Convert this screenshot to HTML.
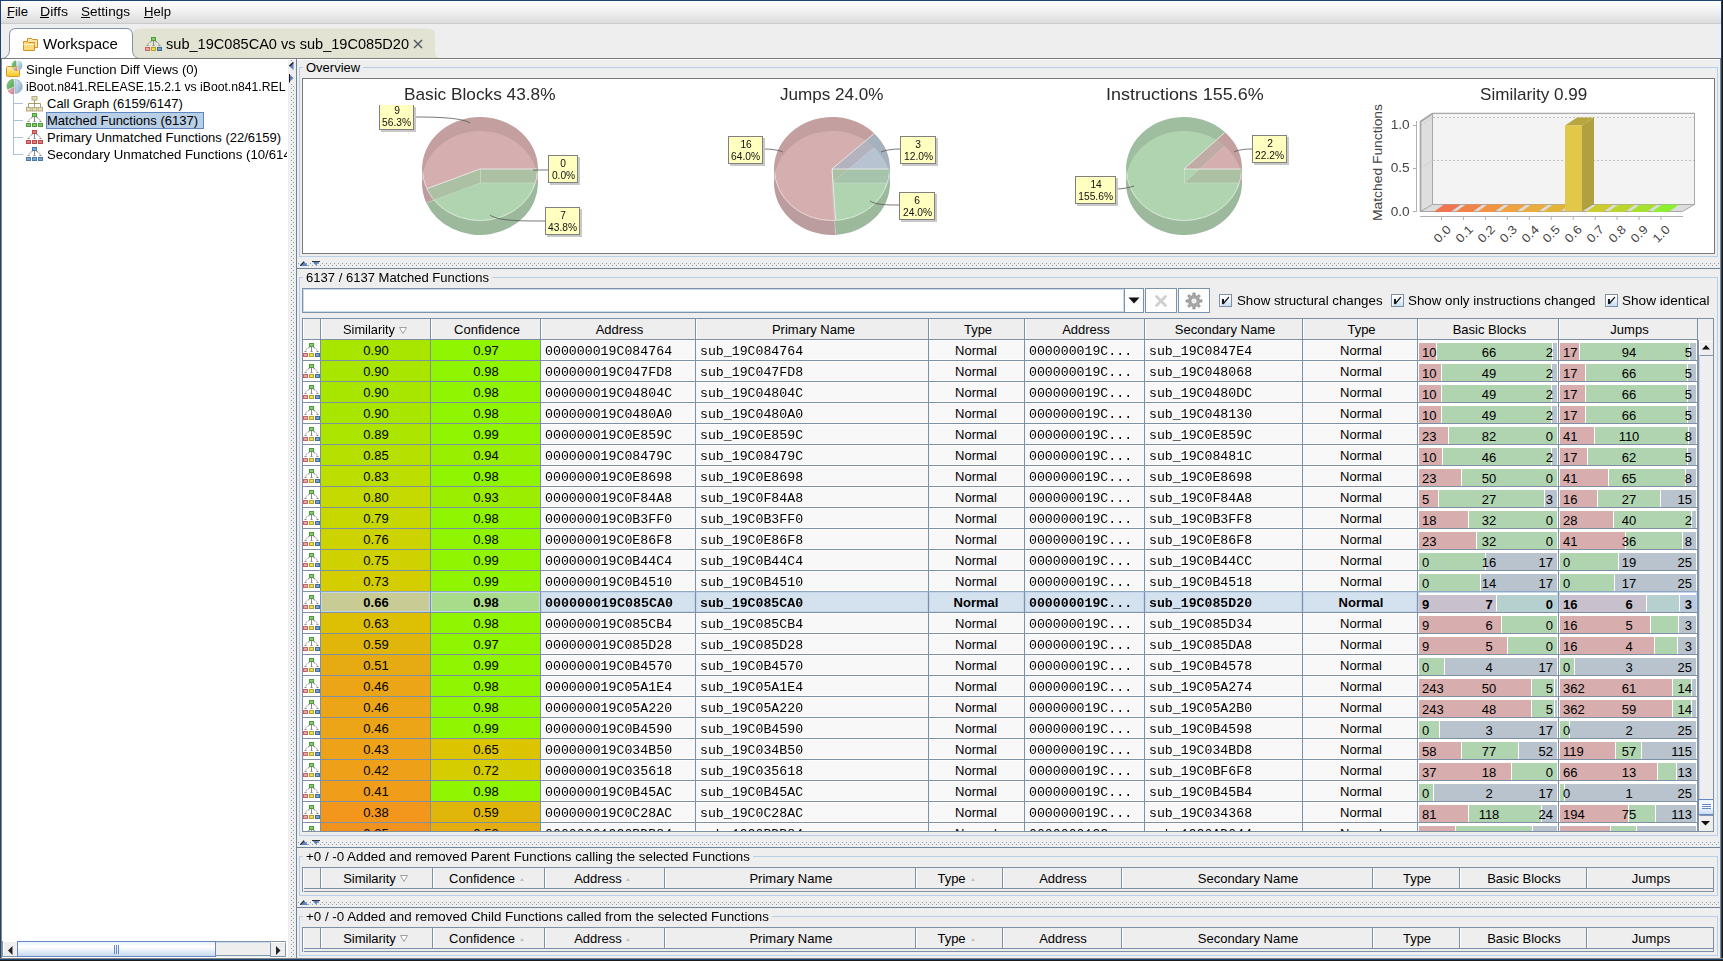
<!DOCTYPE html><html><head><meta charset="utf-8"><style>
html,body{margin:0;padding:0;}body{width:1723px;height:961px;overflow:hidden;position:relative;background:#eeeeee;font-family:"Liberation Sans",sans-serif;}.t{position:absolute;white-space:pre;}.b{position:absolute;box-sizing:border-box;}svg{position:absolute;overflow:visible;}
</style></head><body>
<div class="b" style="left:0px;top:0px;width:1723px;height:23px;background:linear-gradient(#ffffff,#f2f2f2 45%,#dcdcdc);"></div>
<div class="b" style="left:0px;top:23px;width:1723px;height:1px;background:#cacaca;"></div>
<div class="t" style="left:7.00px;top:2.99px;font-size:13px;line-height:17px;font-family:'Liberation Sans',sans-serif;font-weight:normal;color:#000;">File</div>
<div class="b" style="left:7px;top:17px;width:7px;height:1px;background:#000;"></div>
<div class="t" style="left:40.00px;top:2.99px;font-size:13px;line-height:17px;font-family:'Liberation Sans',sans-serif;font-weight:normal;color:#000;transform:scaleX(1.0867);transform-origin:left center;">Diffs</div>
<div class="b" style="left:40px;top:17px;width:9px;height:1px;background:#000;"></div>
<div class="t" style="left:81.00px;top:2.99px;font-size:13px;line-height:17px;font-family:'Liberation Sans',sans-serif;font-weight:normal;color:#000;transform:scaleX(1.0429);transform-origin:left center;">Settings</div>
<div class="b" style="left:81px;top:17px;width:9px;height:1px;background:#000;"></div>
<div class="t" style="left:144.00px;top:2.99px;font-size:13px;line-height:17px;font-family:'Liberation Sans',sans-serif;font-weight:normal;color:#000;transform:scaleX(1.0093);transform-origin:left center;">Help</div>
<div class="b" style="left:144px;top:17px;width:9px;height:1px;background:#000;"></div>
<svg style="left:0;top:0" width="1723" height="60"><path d="M133,58.5 L133,35 Q133,28.5 140,28.5 L428,28.5 Q435,28.5 435,35 L435,50 C435,55 436.5,58.5 440,58.5 Z" fill="#e3e3d3"/><path d="M1.5,58.5 C6,58.5 9.5,55 9.5,50 L9.5,35 Q9.5,28.5 16,28.5 L126,28.5 Q132.5,28.5 132.5,35 L132.5,50 C132.5,55 135,58.5 140,58.5 Z" fill="#ffffff" stroke="#7d93aa" stroke-width="1"/></svg>
<div class="b" style="left:0px;top:58px;width:1723px;height:1px;background:#7b7b7b;"></div>
<div class="b" style="left:0px;top:59px;width:1723px;height:1px;background:#ffffff;"></div>
<svg style="left:22px;top:37px" width="18" height="14" viewBox="0 0 18 14"><path d="M5.5,1.5 h4 l1,1 h5 v8 h-10 z" fill="#fbe7a6" stroke="#d8912c"/><path d="M1.5,4.5 h4 l1,1 h6 v8 h-11 z" fill="#fcd97a" stroke="#d8912c"/><path d="M1.5,7.5 h11" stroke="#fff3c8"/></svg>
<div class="t" style="left:43.00px;top:34.30px;font-size:15px;line-height:19px;font-family:'Liberation Sans',sans-serif;font-weight:normal;color:#000;transform:scaleX(1.0031);transform-origin:left center;">Workspace</div>
<svg style="left:145px;top:37px" width="17" height="15" viewBox="0 0 17 15"><rect x="6.5" y="0.5" width="4" height="3" fill="#86cc70" stroke="#4a9a3a"/><path d="M8.5,4 V9" stroke="#8a8a8a"/><path d="M6.5,4.5 C4,5 3,6.5 2.5,8.5" stroke="#8a8a8a" stroke-dasharray="1.5,1" fill="none"/><path d="M10.5,4.5 C13,5 14,6.5 14.5,8.5" stroke="#777" stroke-dasharray="1.5,1" fill="none"/><path d="M1.5,8.5 h2 M7.5,8.5 h2 M13.5,8.5 h2" stroke="#8a8a8a"/><rect x="0.5" y="10.5" width="4" height="3" fill="#f0a4a4" stroke="#c86464"/><rect x="6.5" y="10.5" width="4" height="3" fill="#f2dc4a" stroke="#c0a020"/><rect x="12.5" y="10.5" width="4" height="3" fill="#78a4cc" stroke="#3f6f9f"/></svg>
<div class="t" style="left:166.00px;top:34.30px;font-size:15px;line-height:19px;font-family:'Liberation Sans',sans-serif;font-weight:normal;color:#000;transform:scaleX(0.9713);transform-origin:left center;">sub_19C085CA0 vs sub_19C085D20</div>
<svg style="left:413px;top:39px" width="10" height="10" viewBox="0 0 10 10"><path d="M1,1 L9,9 M9,1 L1,9" stroke="#555a60" stroke-width="1.5"/></svg>
<div class="b" style="left:2px;top:60px;width:286px;height:898px;background:#ffffff;"></div>
<svg style="left:0;top:0" width="40" height="100"><defs><linearGradient id="fy" x1="0" y1="0" x2="0" y2="1"><stop offset="0" stop-color="#fff2b0"/><stop offset="1" stop-color="#f2c81e"/></linearGradient><linearGradient id="pg" x1="0" y1="0" x2="1" y2="1"><stop offset="0" stop-color="#8fd08f"/><stop offset="1" stop-color="#4f9f55"/></linearGradient><linearGradient id="pb" x1="0" y1="0" x2="1" y2="1"><stop offset="0" stop-color="#d8e8f4"/><stop offset="1" stop-color="#7ea8c8"/></linearGradient><linearGradient id="pr" x1="0" y1="0" x2="1" y2="1"><stop offset="0" stop-color="#f0c0c8"/><stop offset="1" stop-color="#c88088"/></linearGradient></defs><rect x="6.5" y="66.5" width="13" height="10" rx="1" fill="url(#fy)" stroke="#e0922c"/><path d="M7.5,69.5 h5 l1,-1 h5" stroke="#f8e49a" fill="none"/><path d="M16.64,65.33 L16.20,60.35 A5,5 0 0 0 12.54,68.20 Z" fill="url(#pg)"/><path d="M17.40,65.45 L18.69,70.28 A5,5 0 0 0 17.40,60.45 Z" fill="url(#pb)"/><path d="M16.79,66.06 L12.96,69.28 A5,5 0 0 0 17.66,70.99 Z" fill="url(#pr)"/><path d="M13.98,86.20 L13.37,79.23 A7,7 0 0 0 7.64,89.16 Z" fill="url(#pg)" stroke="#5a9a5a" stroke-width="0.5"/><path d="M14.04,87.27 L7.97,90.77 A7,7 0 0 0 13.79,94.27 Z" fill="url(#pr)" stroke="#c07078" stroke-width="0.5"/><path d="M15.10,86.49 L15.34,93.49 A7,7 0 0 0 15.10,79.49 Z" fill="url(#pb)" stroke="#6a94b8" stroke-width="0.5"/></svg>
<div class="b" style="left:13px;top:95px;width:1px;height:60px;background:#a9c1d9;"></div>
<div class="b" style="left:14px;top:103px;width:9px;height:1px;background:#a9c1d9;"></div>
<div class="b" style="left:14px;top:120px;width:9px;height:1px;background:#a9c1d9;"></div>
<div class="b" style="left:14px;top:137px;width:9px;height:1px;background:#a9c1d9;"></div>
<div class="b" style="left:14px;top:154px;width:9px;height:1px;background:#a9c1d9;"></div>
<svg style="left:26px;top:96px" width="17" height="16" viewBox="0 0 17 16"><rect x="6" y="0.5" width="5" height="3.5" fill="#e2dcb8" stroke="#b5ad7e"/><path d="M8.5,4 v7 M2.5,7.5 h12 M2.5,7.5 v3.5 M14.5,7.5 v3.5" stroke="#a59d6c" fill="none"/><rect x="0.5" y="11.5" width="4.5" height="3.5" fill="#e2dcb8" stroke="#b5ad7e"/><rect x="6.2" y="11.5" width="4.5" height="3.5" fill="#e2dcb8" stroke="#b5ad7e"/><rect x="12" y="11.5" width="4.5" height="3.5" fill="#e2dcb8" stroke="#b5ad7e"/></svg>
<svg style="left:26px;top:113px" width="17" height="15" viewBox="0 0 17 15"><rect x="6.5" y="0.5" width="4" height="3" fill="#7fc86a" stroke="#4f9a3f"/><path d="M8.5,4 V9" stroke="#8a8a8a"/><path d="M6.5,4.5 C4,5 3,6.5 2.5,8.5" stroke="#8a8a8a" stroke-dasharray="1.5,1" fill="none"/><path d="M10.5,4.5 C13,5 14,6.5 14.5,8.5" stroke="#777" stroke-dasharray="1.5,1" fill="none"/><path d="M1.5,8.5 h2 M7.5,8.5 h2 M13.5,8.5 h2" stroke="#8a8a8a"/><rect x="0.5" y="10.5" width="4" height="3" fill="#7fc86a" stroke="#4f9a3f"/><rect x="6.5" y="10.5" width="4" height="3" fill="#7fc86a" stroke="#4f9a3f"/><rect x="12.5" y="10.5" width="4" height="3" fill="#7fc86a" stroke="#4f9a3f"/></svg>
<svg style="left:26px;top:130px" width="17" height="15" viewBox="0 0 17 15"><rect x="6.5" y="0.5" width="4" height="3" fill="#e27c7c" stroke="#b84a4a"/><path d="M8.5,4 V9" stroke="#8a8a8a"/><path d="M6.5,4.5 C4,5 3,6.5 2.5,8.5" stroke="#8a8a8a" stroke-dasharray="1.5,1" fill="none"/><path d="M10.5,4.5 C13,5 14,6.5 14.5,8.5" stroke="#777" stroke-dasharray="1.5,1" fill="none"/><path d="M1.5,8.5 h2 M7.5,8.5 h2 M13.5,8.5 h2" stroke="#8a8a8a"/><rect x="0.5" y="10.5" width="4" height="3" fill="#e27c7c" stroke="#b84a4a"/><rect x="6.5" y="10.5" width="4" height="3" fill="#e27c7c" stroke="#b84a4a"/><rect x="12.5" y="10.5" width="4" height="3" fill="#e27c7c" stroke="#b84a4a"/></svg>
<svg style="left:26px;top:147px" width="17" height="15" viewBox="0 0 17 15"><rect x="6.5" y="0.5" width="4" height="3" fill="#7aaad8" stroke="#4a78a8"/><path d="M8.5,4 V9" stroke="#8a8a8a"/><path d="M6.5,4.5 C4,5 3,6.5 2.5,8.5" stroke="#8a8a8a" stroke-dasharray="1.5,1" fill="none"/><path d="M10.5,4.5 C13,5 14,6.5 14.5,8.5" stroke="#777" stroke-dasharray="1.5,1" fill="none"/><path d="M1.5,8.5 h2 M7.5,8.5 h2 M13.5,8.5 h2" stroke="#8a8a8a"/><rect x="0.5" y="10.5" width="4" height="3" fill="#7aaad8" stroke="#4a78a8"/><rect x="6.5" y="10.5" width="4" height="3" fill="#7aaad8" stroke="#4a78a8"/><rect x="12.5" y="10.5" width="4" height="3" fill="#7aaad8" stroke="#4a78a8"/></svg>
<div class="b" style="left:46px;top:112px;width:158px;height:17px;background:#b9cfe6;border:1px solid #5f86c4;"></div>
<div class="t" style="left:26.00px;top:60.99px;font-size:13px;line-height:17px;font-family:'Liberation Sans',sans-serif;font-weight:normal;color:#000;transform:scaleX(1.0113);transform-origin:left center;">Single Function Diff Views (0)</div>
<div class="t" style="left:26.00px;top:77.99px;font-size:13px;line-height:17px;font-family:'Liberation Sans',sans-serif;font-weight:normal;color:#000;transform:scaleX(0.9373);transform-origin:left center;">iBoot.n841.RELEASE.15.2.1 vs iBoot.n841.REL</div>
<div class="t" style="left:47.00px;top:94.99px;font-size:13px;line-height:17px;font-family:'Liberation Sans',sans-serif;font-weight:normal;color:#000;">Call Graph (6159/6147)</div>
<div class="t" style="left:47.00px;top:111.99px;font-size:13px;line-height:17px;font-family:'Liberation Sans',sans-serif;font-weight:normal;color:#000;">Matched Functions (6137)</div>
<div class="t" style="left:47.00px;top:128.99px;font-size:13px;line-height:17px;font-family:'Liberation Sans',sans-serif;font-weight:normal;color:#000;">Primary Unmatched Functions (22/6159)</div>
<div style="position:absolute;left:0;top:0;width:1723px;height:961px;clip-path:inset(0 1436px 0 0);">
<div class="t" style="left:47.00px;top:145.99px;font-size:13px;line-height:17px;font-family:'Liberation Sans',sans-serif;font-weight:normal;color:#000;transform:scaleX(1.0161);transform-origin:left center;">Secondary Unmatched Functions (10/6147)</div>
</div>
<div class="b" style="left:2px;top:941px;width:284px;height:16px;background:#eeeeee;border-top:1px solid #8396ab;"></div>
<div class="b" style="left:2px;top:941px;width:15px;height:16px;background:#eeeeee;border-left:1px solid #8396ab;border-bottom:1px solid #8396ab;box-shadow:inset 1px 1px 0 #ffffff;"></div>
<svg style="left:8px;top:946px" width="5" height="9"><path d="M4.5,0 L0,4.5 L4.5,9 Z" fill="#222"/></svg>
<div class="b" style="left:17px;top:941px;width:199px;height:16px;background:linear-gradient(#eaf2fb,#ffffff 35%,#c5d9ee);border:1px solid #6689c6;"></div>
<div class="b" style="left:114px;top:945px;width:1px;height:9px;background:#6689c6;"></div>
<div class="b" style="left:116px;top:945px;width:1px;height:9px;background:#6689c6;"></div>
<div class="b" style="left:118px;top:945px;width:1px;height:9px;background:#6689c6;"></div>
<div class="b" style="left:216px;top:942px;width:54px;height:14px;background:#eeeeee;border-top:1px solid #c4d8ee;border-bottom:1px solid #8396ab;"></div>
<div class="b" style="left:270px;top:942px;width:16px;height:15px;background:#eeeeee;border-left:1px solid #8396ab;border-right:1px solid #8396ab;border-bottom:1px solid #8396ab;border-top:1px solid #ffffff;"></div>
<svg style="left:276px;top:946px" width="5" height="9"><path d="M0,0 L4.5,4.5 L0,9 Z" fill="#222"/></svg>
<div class="b" style="left:288px;top:60px;width:8px;height:898px;background:#eeeeee;"></div>
<svg style="left:288px;top:60px" width="8" height="898"><defs><pattern id="dv" width="8" height="4" patternUnits="userSpaceOnUse"><rect x="3" y="0" width="1" height="1" fill="#8d9fb3"/><rect x="5" y="2" width="1" height="1" fill="#8d9fb3"/></pattern></defs><rect x="0" y="0" width="8" height="898" fill="url(#dv)"/></svg>
<div class="b" style="left:289px;top:61px;width:6px;height:22px;background:#eeeeee;"></div>
<svg style="left:289px;top:62px" width="6" height="22"><path d="M4.5,0 L0,4 L4.5,8 Z" fill="#5a80c0"/><path d="M4.3,0.5 L0.5,4" stroke="#1a1a1a" stroke-width="1.2"/><path d="M0,12 L4.5,16 L0,20.5 Z" fill="#5a80c0"/><path d="M0.5,12 V20.5" stroke="#1a1a1a" stroke-width="1"/></svg>
<div class="b" style="left:296px;top:59px;width:1px;height:899px;background:#6e8298;"></div>
<div class="b" style="left:299px;top:67px;width:1419px;height:190px;border:1px solid #b8cfe6;"></div>
<div class="b" style="left:303px;top:66px;width:60.1875px;height:3px;background:#eeeeee;"></div>
<div class="t" style="left:306.00px;top:58.99px;font-size:13px;line-height:17px;font-family:'Liberation Sans',sans-serif;font-weight:normal;color:#000;">Overview</div>
<div class="b" style="left:302px;top:78px;width:1413px;height:176px;background:#ffffff;border:1px solid #7a7a7a;"></div>
<div class="t" style="left:403.50px;top:83.61px;font-size:17px;line-height:21px;font-family:'Liberation Sans',sans-serif;font-weight:normal;color:#2a2a2a;transform:scaleX(1.0149);transform-origin:left center;">Basic Blocks 43.8%</div>
<div class="t" style="left:780.00px;top:83.61px;font-size:17px;line-height:21px;font-family:'Liberation Sans',sans-serif;font-weight:normal;color:#2a2a2a;transform:scaleX(1.0052);transform-origin:left center;">Jumps 24.0%</div>
<div class="t" style="left:1105.50px;top:83.61px;font-size:17px;line-height:21px;font-family:'Liberation Sans',sans-serif;font-weight:normal;color:#2a2a2a;transform:scaleX(1.0565);transform-origin:left center;">Instructions 155.6%</div>
<div class="t" style="left:1480.20px;top:83.61px;font-size:17px;line-height:21px;font-family:'Liberation Sans',sans-serif;font-weight:normal;color:#2a2a2a;transform:scaleX(1.0042);transform-origin:left center;">Similarity 0.99</div>
<svg style="left:0;top:0" width="1723" height="300"><defs><clipPath id="ci1"><ellipse cx="480" cy="169" rx="58" ry="52"/></clipPath><clipPath id="cj1"><ellipse cx="480" cy="183" rx="58" ry="52"/></clipPath></defs><path d="M480,169 L538.00,169.00 A58,52 0 1 0 426.41,188.90 Z" fill="#c49f9f"/><path d="M480,169 L426.41,188.90 A58,52 0 0 0 538.00,169.00 Z" fill="#9fbd9f"/><path d="M480,183 L538.00,183.00 A58,52 0 1 0 426.41,202.90 Z" fill="#bc9d9f"/><path d="M480,183 L426.41,202.90 A58,52 0 0 0 538.00,183.00 Z" fill="#9cb99c"/><g clip-path="url(#ci1)"><path d="M480,183 L538.00,183.00 A58,52 0 1 0 426.41,202.90 Z" fill="#d5afaf"/><path d="M480,183 L426.41,202.90 A58,52 0 0 0 538.00,183.00 Z" fill="#b0d4b0"/><g clip-path="url(#cj1)" opacity="0.8"><path d="M480,169 L538.00,169.00 A58,52 0 1 0 426.41,188.90 Z" fill="#d5afaf"/><path d="M480,169 L426.41,188.90 A58,52 0 0 0 538.00,169.00 Z" fill="#b0d4b0"/></g><mask id="mk1_0"><rect x="0" y="0" width="1723" height="300" fill="#000"/><path d="M480,169 L538.00,169.00 A58,52 0 1 0 426.41,188.90 Z" fill="#fff"/><path d="M480,183 L538.00,183.00 A58,52 0 1 0 426.41,202.90 Z" fill="#000"/></mask><g clip-path="url(#cj1)"><rect x="422" y="117" width="116" height="118" fill="#000" opacity="0.06" mask="url(#mk1_0)"/></g><mask id="mk1_1"><rect x="0" y="0" width="1723" height="300" fill="#000"/><path d="M480,169 L426.41,188.90 A58,52 0 0 0 538.00,169.00 Z" fill="#fff"/><path d="M480,183 L426.41,202.90 A58,52 0 0 0 538.00,183.00 Z" fill="#000"/></mask><g clip-path="url(#cj1)"><rect x="422" y="117" width="116" height="118" fill="#000" opacity="0.06" mask="url(#mk1_1)"/></g></g><g clip-path="url(#cj1)"><path d="M422.5,169 A57.5,51.5 0 0 0 537.5,169" fill="none" stroke="#f4f4f4" stroke-opacity="0.55"/></g><path d="M480,169 L537.00,169.00" stroke="#f4f4f4" stroke-opacity="0.75" stroke-width="1"/><path d="M480,183 L537.00,183.00" stroke="#f4f4f4" stroke-opacity="0.25" stroke-width="1"/><path d="M480,169 L427.34,188.52" stroke="#f4f4f4" stroke-opacity="0.75" stroke-width="1"/><path d="M480,183 L427.34,202.52" stroke="#f4f4f4" stroke-opacity="0.25" stroke-width="1"/><path d="M480.5,169 V183" stroke="#f4f4f4" stroke-opacity="0.35"/></svg>
<svg style="left:0;top:0" width="1723" height="300"><path d="M414,117 C440,117 462,118 470,123" fill="none" stroke="#555" stroke-width="0.8"/></svg>
<svg style="left:0;top:0" width="1723" height="300"><path d="M533,170 L548,170" fill="none" stroke="#555" stroke-width="0.8"/></svg>
<svg style="left:0;top:0" width="1723" height="300"><path d="M490,215 C498,221 520,221 545,221" fill="none" stroke="#555" stroke-width="0.8"/></svg>
<div class="b" style="left:381px;top:107px;width:35px;height:25px;background:#c8c8c8;"></div>
<div class="b" style="left:379px;top:105px;width:35px;height:25px;background:#ffffc0;border:1px solid #808080;border-top:none;"></div>
<div class="t" style="left:393.94px;top:103.39px;font-size:11px;line-height:15px;font-family:'Liberation Sans',sans-serif;font-weight:normal;color:#111;transform:scaleX(0.9300);transform-origin:center center;">9</div>
<div class="t" style="left:381.39px;top:115.29px;font-size:11px;line-height:15px;font-family:'Liberation Sans',sans-serif;font-weight:normal;color:#111;transform:scaleX(0.9300);transform-origin:center center;">56.3%</div>
<div class="b" style="left:550px;top:157px;width:30px;height:28px;background:#c8c8c8;"></div>
<div class="b" style="left:548px;top:155px;width:30px;height:28px;background:#ffffc0;border:1px solid #808080;border-top:1px solid #808080;"></div>
<div class="t" style="left:560.44px;top:156.39px;font-size:11px;line-height:15px;font-family:'Liberation Sans',sans-serif;font-weight:normal;color:#111;transform:scaleX(0.9300);transform-origin:center center;">0</div>
<div class="t" style="left:550.95px;top:168.29px;font-size:11px;line-height:15px;font-family:'Liberation Sans',sans-serif;font-weight:normal;color:#111;transform:scaleX(0.9300);transform-origin:center center;">0.0%</div>
<div class="b" style="left:547px;top:209px;width:35px;height:28px;background:#c8c8c8;"></div>
<div class="b" style="left:545px;top:207px;width:35px;height:28px;background:#ffffc0;border:1px solid #808080;border-top:1px solid #808080;"></div>
<div class="t" style="left:559.94px;top:208.39px;font-size:11px;line-height:15px;font-family:'Liberation Sans',sans-serif;font-weight:normal;color:#111;transform:scaleX(0.9300);transform-origin:center center;">7</div>
<div class="t" style="left:547.39px;top:220.29px;font-size:11px;line-height:15px;font-family:'Liberation Sans',sans-serif;font-weight:normal;color:#111;transform:scaleX(0.9300);transform-origin:center center;">43.8%</div>
<svg style="left:0;top:0" width="1723" height="300"><defs><clipPath id="ci2"><ellipse cx="832" cy="169" rx="58" ry="52"/></clipPath><clipPath id="cj2"><ellipse cx="832" cy="183" rx="58" ry="52"/></clipPath></defs><path d="M832,169 L890.00,169.00 A58,52 0 0 0 874.28,133.40 Z" fill="#a5b1bd"/><path d="M832,169 L874.28,133.40 A58,52 0 1 0 835.64,220.90 Z" fill="#c49f9f"/><path d="M832,169 L835.64,220.90 A58,52 0 0 0 890.00,169.00 Z" fill="#9fbd9f"/><path d="M832,183 L890.00,183.00 A58,52 0 0 0 874.28,147.40 Z" fill="#a5b1bd"/><path d="M832,183 L874.28,147.40 A58,52 0 1 0 835.64,234.90 Z" fill="#bc9d9f"/><path d="M832,183 L835.64,234.90 A58,52 0 0 0 890.00,183.00 Z" fill="#9cb99c"/><g clip-path="url(#ci2)"><path d="M832,183 L890.00,183.00 A58,52 0 0 0 874.28,147.40 Z" fill="#b8c4d1"/><path d="M832,183 L874.28,147.40 A58,52 0 1 0 835.64,234.90 Z" fill="#d5afaf"/><path d="M832,183 L835.64,234.90 A58,52 0 0 0 890.00,183.00 Z" fill="#b0d4b0"/><g clip-path="url(#cj2)" opacity="0.8"><path d="M832,169 L890.00,169.00 A58,52 0 0 0 874.28,133.40 Z" fill="#b8c4d1"/><path d="M832,169 L874.28,133.40 A58,52 0 1 0 835.64,220.90 Z" fill="#d5afaf"/><path d="M832,169 L835.64,220.90 A58,52 0 0 0 890.00,169.00 Z" fill="#b0d4b0"/></g><mask id="mk2_0"><rect x="0" y="0" width="1723" height="300" fill="#000"/><path d="M832,169 L890.00,169.00 A58,52 0 0 0 874.28,133.40 Z" fill="#fff"/><path d="M832,183 L890.00,183.00 A58,52 0 0 0 874.28,147.40 Z" fill="#000"/></mask><g clip-path="url(#cj2)"><rect x="774" y="117" width="116" height="118" fill="#000" opacity="0.06" mask="url(#mk2_0)"/></g><mask id="mk2_1"><rect x="0" y="0" width="1723" height="300" fill="#000"/><path d="M832,169 L874.28,133.40 A58,52 0 1 0 835.64,220.90 Z" fill="#fff"/><path d="M832,183 L874.28,147.40 A58,52 0 1 0 835.64,234.90 Z" fill="#000"/></mask><g clip-path="url(#cj2)"><rect x="774" y="117" width="116" height="118" fill="#000" opacity="0.06" mask="url(#mk2_1)"/></g><mask id="mk2_2"><rect x="0" y="0" width="1723" height="300" fill="#000"/><path d="M832,169 L835.64,220.90 A58,52 0 0 0 890.00,169.00 Z" fill="#fff"/><path d="M832,183 L835.64,234.90 A58,52 0 0 0 890.00,183.00 Z" fill="#000"/></mask><g clip-path="url(#cj2)"><rect x="774" y="117" width="116" height="118" fill="#000" opacity="0.06" mask="url(#mk2_2)"/></g></g><g clip-path="url(#cj2)"><path d="M774.5,169 A57.5,51.5 0 0 0 889.5,169" fill="none" stroke="#f4f4f4" stroke-opacity="0.55"/></g><path d="M832,169 L889.00,169.00" stroke="#f4f4f4" stroke-opacity="0.75" stroke-width="1"/><path d="M832,183 L889.00,183.00" stroke="#f4f4f4" stroke-opacity="0.25" stroke-width="1"/><path d="M832,169 L873.55,134.09" stroke="#f4f4f4" stroke-opacity="0.75" stroke-width="1"/><path d="M832,183 L873.55,148.09" stroke="#f4f4f4" stroke-opacity="0.25" stroke-width="1"/><path d="M832,169 L835.58,219.90" stroke="#f4f4f4" stroke-opacity="0.75" stroke-width="1"/><path d="M832,183 L835.58,233.90" stroke="#f4f4f4" stroke-opacity="0.25" stroke-width="1"/><path d="M832.5,169 V183" stroke="#f4f4f4" stroke-opacity="0.35"/></svg>
<svg style="left:0;top:0" width="1723" height="300"><path d="M763,149 C772,149 778,150 783,152" fill="none" stroke="#555" stroke-width="0.8"/></svg>
<svg style="left:0;top:0" width="1723" height="300"><path d="M900,149 C892,149 886,150 881,152" fill="none" stroke="#555" stroke-width="0.8"/></svg>
<svg style="left:0;top:0" width="1723" height="300"><path d="M899,205 C888,205 876,205 870,201" fill="none" stroke="#555" stroke-width="0.8"/></svg>
<div class="b" style="left:730px;top:138px;width:35px;height:28px;background:#c8c8c8;"></div>
<div class="b" style="left:728px;top:136px;width:35px;height:28px;background:#ffffc0;border:1px solid #808080;border-top:1px solid #808080;"></div>
<div class="t" style="left:739.88px;top:137.39px;font-size:11px;line-height:15px;font-family:'Liberation Sans',sans-serif;font-weight:normal;color:#111;transform:scaleX(0.9300);transform-origin:center center;">16</div>
<div class="t" style="left:730.39px;top:149.29px;font-size:11px;line-height:15px;font-family:'Liberation Sans',sans-serif;font-weight:normal;color:#111;transform:scaleX(0.9300);transform-origin:center center;">64.0%</div>
<div class="b" style="left:902px;top:138px;width:36px;height:28px;background:#c8c8c8;"></div>
<div class="b" style="left:900px;top:136px;width:36px;height:28px;background:#ffffc0;border:1px solid #808080;border-top:1px solid #808080;"></div>
<div class="t" style="left:915.44px;top:137.39px;font-size:11px;line-height:15px;font-family:'Liberation Sans',sans-serif;font-weight:normal;color:#111;transform:scaleX(0.9300);transform-origin:center center;">3</div>
<div class="t" style="left:902.89px;top:149.29px;font-size:11px;line-height:15px;font-family:'Liberation Sans',sans-serif;font-weight:normal;color:#111;transform:scaleX(0.9300);transform-origin:center center;">12.0%</div>
<div class="b" style="left:901px;top:194px;width:36px;height:28px;background:#c8c8c8;"></div>
<div class="b" style="left:899px;top:192px;width:36px;height:28px;background:#ffffc0;border:1px solid #808080;border-top:1px solid #808080;"></div>
<div class="t" style="left:914.44px;top:193.39px;font-size:11px;line-height:15px;font-family:'Liberation Sans',sans-serif;font-weight:normal;color:#111;transform:scaleX(0.9300);transform-origin:center center;">6</div>
<div class="t" style="left:901.89px;top:205.29px;font-size:11px;line-height:15px;font-family:'Liberation Sans',sans-serif;font-weight:normal;color:#111;transform:scaleX(0.9300);transform-origin:center center;">24.0%</div>
<svg style="left:0;top:0" width="1723" height="300"><defs><clipPath id="ci3"><ellipse cx="1184" cy="169" rx="58" ry="52"/></clipPath><clipPath id="cj3"><ellipse cx="1184" cy="183" rx="58" ry="52"/></clipPath></defs><path d="M1184,169 L1242.00,169.00 A58,52 0 0 0 1225.01,132.23 Z" fill="#c49f9f"/><path d="M1184,169 L1225.01,132.23 A58,52 0 1 0 1242.00,169.00 Z" fill="#9fbd9f"/><path d="M1184,183 L1242.00,183.00 A58,52 0 0 0 1225.01,146.23 Z" fill="#bc9d9f"/><path d="M1184,183 L1225.01,146.23 A58,52 0 1 0 1242.00,183.00 Z" fill="#9cb99c"/><g clip-path="url(#ci3)"><path d="M1184,183 L1242.00,183.00 A58,52 0 0 0 1225.01,146.23 Z" fill="#d5afaf"/><path d="M1184,183 L1225.01,146.23 A58,52 0 1 0 1242.00,183.00 Z" fill="#b0d4b0"/><g clip-path="url(#cj3)" opacity="0.8"><path d="M1184,169 L1242.00,169.00 A58,52 0 0 0 1225.01,132.23 Z" fill="#d5afaf"/><path d="M1184,169 L1225.01,132.23 A58,52 0 1 0 1242.00,169.00 Z" fill="#b0d4b0"/></g><mask id="mk3_0"><rect x="0" y="0" width="1723" height="300" fill="#000"/><path d="M1184,169 L1242.00,169.00 A58,52 0 0 0 1225.01,132.23 Z" fill="#fff"/><path d="M1184,183 L1242.00,183.00 A58,52 0 0 0 1225.01,146.23 Z" fill="#000"/></mask><g clip-path="url(#cj3)"><rect x="1126" y="117" width="116" height="118" fill="#000" opacity="0.06" mask="url(#mk3_0)"/></g><mask id="mk3_1"><rect x="0" y="0" width="1723" height="300" fill="#000"/><path d="M1184,169 L1225.01,132.23 A58,52 0 1 0 1242.00,169.00 Z" fill="#fff"/><path d="M1184,183 L1225.01,146.23 A58,52 0 1 0 1242.00,183.00 Z" fill="#000"/></mask><g clip-path="url(#cj3)"><rect x="1126" y="117" width="116" height="118" fill="#000" opacity="0.06" mask="url(#mk3_1)"/></g></g><g clip-path="url(#cj3)"><path d="M1126.5,169 A57.5,51.5 0 0 0 1241.5,169" fill="none" stroke="#f4f4f4" stroke-opacity="0.55"/></g><path d="M1184,169 L1241.00,169.00" stroke="#f4f4f4" stroke-opacity="0.75" stroke-width="1"/><path d="M1184,183 L1241.00,183.00" stroke="#f4f4f4" stroke-opacity="0.25" stroke-width="1"/><path d="M1184,169 L1224.31,132.94" stroke="#f4f4f4" stroke-opacity="0.75" stroke-width="1"/><path d="M1184,183 L1224.31,146.94" stroke="#f4f4f4" stroke-opacity="0.25" stroke-width="1"/><path d="M1184.5,169 V183" stroke="#f4f4f4" stroke-opacity="0.35"/></svg>
<svg style="left:0;top:0" width="1723" height="300"><path d="M1252,149 C1244,149 1238,150 1234,152" fill="none" stroke="#555" stroke-width="0.8"/></svg>
<svg style="left:0;top:0" width="1723" height="300"><path d="M1115,189 C1122,189 1128,188 1134,186" fill="none" stroke="#555" stroke-width="0.8"/></svg>
<div class="b" style="left:1254px;top:137px;width:35px;height:28px;background:#c8c8c8;"></div>
<div class="b" style="left:1252px;top:135px;width:35px;height:28px;background:#ffffc0;border:1px solid #808080;border-top:1px solid #808080;"></div>
<div class="t" style="left:1266.94px;top:136.39px;font-size:11px;line-height:15px;font-family:'Liberation Sans',sans-serif;font-weight:normal;color:#111;transform:scaleX(0.9300);transform-origin:center center;">2</div>
<div class="t" style="left:1254.39px;top:148.29px;font-size:11px;line-height:15px;font-family:'Liberation Sans',sans-serif;font-weight:normal;color:#111;transform:scaleX(0.9300);transform-origin:center center;">22.2%</div>
<div class="b" style="left:1077px;top:178px;width:41px;height:28px;background:#c8c8c8;"></div>
<div class="b" style="left:1075px;top:176px;width:41px;height:28px;background:#ffffc0;border:1px solid #808080;border-top:1px solid #808080;"></div>
<div class="t" style="left:1089.88px;top:177.39px;font-size:11px;line-height:15px;font-family:'Liberation Sans',sans-serif;font-weight:normal;color:#111;transform:scaleX(0.9300);transform-origin:center center;">14</div>
<div class="t" style="left:1077.33px;top:189.29px;font-size:11px;line-height:15px;font-family:'Liberation Sans',sans-serif;font-weight:normal;color:#111;transform:scaleX(0.9300);transform-origin:center center;">155.6%</div>
<svg style="left:0;top:0" width="1723" height="300"><path d="M1420.5,121.5 L1432.5,113.5 L1432.5,204.5 L1420.5,211.5 Z" fill="#dedede" stroke="#c8c8c8"/><path d="M1420.5,212 V121.5 L1432.5,113.5 H1695" fill="none" stroke="#a4a4a4" stroke-width="1.6"/><rect x="1432.5" y="113.5" width="262" height="91" fill="#f3f3f3" stroke="#a8a8a8"/><path d="M1420.5,211.5 L1432.5,204.5 L1694.5,204.5 L1682.5,211.5 Z" fill="#dcdcdc" stroke="#a8a8a8"/><path d="M1433,117.5 H1694 M1433,160.5 H1694" stroke="#c0c0c0" stroke-dasharray="2,2"/><path d="M1421,125 L1433,117.5 M1421,168 L1433,160.5" stroke="#c8c8c8" stroke-dasharray="2,2"/><path d="M1433.5,212 L1450.5,212 L1461.0,204.5 L1444.0,204.5 Z" fill="#f07450"/><path d="M1455.3,212 L1472.3,212 L1482.8,204.5 L1465.8,204.5 Z" fill="#f08448"/><path d="M1477.1,212 L1494.1,212 L1504.6,204.5 L1487.6,204.5 Z" fill="#f09444"/><path d="M1498.9,212 L1515.9,212 L1526.4,204.5 L1509.4,204.5 Z" fill="#f0a240"/><path d="M1520.7,212 L1537.7,212 L1548.2,204.5 L1531.2,204.5 Z" fill="#eaac3c"/><path d="M1542.5,212 L1559.5,212 L1570.0,204.5 L1553.0,204.5 Z" fill="#e2b43a"/><path d="M1586.1,212 L1603.1,212 L1613.6,204.5 L1596.6,204.5 Z" fill="#cccc30"/><path d="M1607.9,212 L1624.9,212 L1635.4,204.5 L1618.4,204.5 Z" fill="#bcd430"/><path d="M1629.7,212 L1646.7,212 L1657.2,204.5 L1640.2,204.5 Z" fill="#a8e030"/><path d="M1651.5,212 L1668.5,212 L1679.0,204.5 L1662.0,204.5 Z" fill="#8cf030"/><path d="M1582,125.5 L1594,117.5 L1594,204 L1582,211.5 Z" fill="#b0a040"/><path d="M1565,125.5 L1577,117.5 L1594,117.5 L1582,125.5 Z" fill="#b8a640"/><rect x="1565" y="125.5" width="17" height="86" fill="#e2c848"/><path d="M1416.5,121 V212 M1413,125.5 H1416.5 M1413,168.5 H1416.5 M1413,211.5 H1416.5" stroke="#b0b0b0"/><path d="M1420,216.5 H1683" stroke="#b0b0b0"/><path d="M1441.5,216.5 V220" stroke="#b0b0b0"/><path d="M1463.5,216.5 V220" stroke="#b0b0b0"/><path d="M1485.4,216.5 V220" stroke="#b0b0b0"/><path d="M1507.3,216.5 V220" stroke="#b0b0b0"/><path d="M1529.3,216.5 V220" stroke="#b0b0b0"/><path d="M1551.2,216.5 V220" stroke="#b0b0b0"/><path d="M1573.2,216.5 V220" stroke="#b0b0b0"/><path d="M1595.2,216.5 V220" stroke="#b0b0b0"/><path d="M1617.1,216.5 V220" stroke="#b0b0b0"/><path d="M1639.0,216.5 V220" stroke="#b0b0b0"/><path d="M1661.0,216.5 V220" stroke="#b0b0b0"/></svg>
<div class="t" style="left:1392.83px;top:116.84px;font-size:12px;line-height:16px;font-family:'Liberation Sans',sans-serif;font-weight:normal;color:#444;transform:scaleX(1.1396);transform-origin:right center;">1.0</div>
<div class="t" style="left:1392.83px;top:159.84px;font-size:12px;line-height:16px;font-family:'Liberation Sans',sans-serif;font-weight:normal;color:#444;transform:scaleX(1.1396);transform-origin:right center;">0.5</div>
<div class="t" style="left:1392.83px;top:203.84px;font-size:12px;line-height:16px;font-family:'Liberation Sans',sans-serif;font-weight:normal;color:#444;transform:scaleX(1.1396);transform-origin:right center;">0.0</div>
<div class="t" style="left:1433.7px;top:226.0px;width:16.7px;height:16px;font-size:12px;line-height:16px;color:#444;transform:rotate(-45deg) scaleX(1.12);transform-origin:center center;">0.0</div>
<div class="t" style="left:1455.6px;top:226.0px;width:16.7px;height:16px;font-size:12px;line-height:16px;color:#444;transform:rotate(-45deg) scaleX(1.12);transform-origin:center center;">0.1</div>
<div class="t" style="left:1477.6px;top:226.0px;width:16.7px;height:16px;font-size:12px;line-height:16px;color:#444;transform:rotate(-45deg) scaleX(1.12);transform-origin:center center;">0.2</div>
<div class="t" style="left:1499.5px;top:226.0px;width:16.7px;height:16px;font-size:12px;line-height:16px;color:#444;transform:rotate(-45deg) scaleX(1.12);transform-origin:center center;">0.3</div>
<div class="t" style="left:1521.5px;top:226.0px;width:16.7px;height:16px;font-size:12px;line-height:16px;color:#444;transform:rotate(-45deg) scaleX(1.12);transform-origin:center center;">0.4</div>
<div class="t" style="left:1543.4px;top:226.0px;width:16.7px;height:16px;font-size:12px;line-height:16px;color:#444;transform:rotate(-45deg) scaleX(1.12);transform-origin:center center;">0.5</div>
<div class="t" style="left:1565.4px;top:226.0px;width:16.7px;height:16px;font-size:12px;line-height:16px;color:#444;transform:rotate(-45deg) scaleX(1.12);transform-origin:center center;">0.6</div>
<div class="t" style="left:1587.3px;top:226.0px;width:16.7px;height:16px;font-size:12px;line-height:16px;color:#444;transform:rotate(-45deg) scaleX(1.12);transform-origin:center center;">0.7</div>
<div class="t" style="left:1609.3px;top:226.0px;width:16.7px;height:16px;font-size:12px;line-height:16px;color:#444;transform:rotate(-45deg) scaleX(1.12);transform-origin:center center;">0.8</div>
<div class="t" style="left:1631.2px;top:226.0px;width:16.7px;height:16px;font-size:12px;line-height:16px;color:#444;transform:rotate(-45deg) scaleX(1.12);transform-origin:center center;">0.9</div>
<div class="t" style="left:1653.2px;top:226.0px;width:16.7px;height:16px;font-size:12px;line-height:16px;color:#444;transform:rotate(-45deg) scaleX(1.12);transform-origin:center center;">1.0</div>
<div class="t" style="left:1317px;top:154px;width:120px;height:17px;font-size:13px;line-height:17px;color:#444;text-align:center;transform:rotate(-90deg) scaleX(1.065);transform-origin:60px 8.5px;">Matched Functions</div>
<svg style="left:297px;top:261px" width="1423" height="8"><defs><pattern id="dh261" width="4" height="8" patternUnits="userSpaceOnUse"><rect x="1" y="2" width="1" height="1" fill="#8d9fb3"/><rect x="3" y="4" width="1" height="1" fill="#8d9fb3"/></pattern></defs><rect x="0" y="0" width="1423" height="7" fill="url(#dh261)"/></svg>
<svg style="left:300px;top:261px" width="24" height="7"><path d="M0,5 L4,0.5 L8,5 Z" fill="#5a80c0"/><path d="M0.3,4.7 L4,0.7" stroke="#222" stroke-width="1.1"/><path d="M12,0 L20,0 L16,4.5 Z" fill="#5a80c0"/><path d="M12,0.5 L20,0.5" stroke="#333" stroke-width="1"/></svg>
<div class="b" style="left:297px;top:268px;width:1423px;height:1px;background:#6e8298;"></div>
<div class="b" style="left:299px;top:277px;width:1419px;height:559px;border:1px solid #b8cfe6;"></div>
<div class="b" style="left:302.5px;top:276px;width:189px;height:3px;background:#eeeeee;"></div>
<div class="t" style="left:305.50px;top:268.99px;font-size:13px;line-height:17px;font-family:'Liberation Sans',sans-serif;font-weight:normal;color:#000;transform:scaleX(1.0045);transform-origin:left center;">6137 / 6137 Matched Functions</div>
<div class="b" style="left:302px;top:288px;width:823px;height:25px;background:#ffffff;border:1px solid #7f93a8;box-shadow:inset 0 0 0 1px #c9daec;"></div>
<div class="b" style="left:1124px;top:288px;width:20px;height:25px;background:#fdfdfd;border:1px solid #7f93a8;"></div>
<svg style="left:1128px;top:297px" width="12" height="7"><path d="M0.5,0.5 L11.5,0.5 L6,6.5 Z" fill="#111"/></svg>
<div class="b" style="left:1145px;top:288px;width:32px;height:25px;background:#fdfdfd;border:1px solid #7f93a8;"></div>
<svg style="left:1154px;top:294px" width="14" height="14"><path d="M2.5,2.5 L11.5,11.5 M11.5,2.5 L2.5,11.5" stroke="#cfcfcf" stroke-width="2.8" stroke-linecap="round"/></svg>
<div class="b" style="left:1178px;top:288px;width:32px;height:25px;background:#fdfdfd;border:1px solid #7f93a8;"></div>
<svg style="left:1185px;top:292px" width="18" height="18" viewBox="-9 -9 18 18"><path d="M5.50,-1.07 L7.92,-1.11 L7.92,1.11 L5.50,1.07 L4.64,3.13 L6.39,4.81 L4.81,6.39 L3.13,4.64 L1.07,5.50 L1.11,7.92 L-1.11,7.92 L-1.07,5.50 L-3.13,4.64 L-4.81,6.39 L-6.39,4.81 L-4.64,3.13 L-5.50,1.07 L-7.92,1.11 L-7.92,-1.11 L-5.50,-1.07 L-4.64,-3.13 L-6.39,-4.81 L-4.81,-6.39 L-3.13,-4.64 L-1.07,-5.50 L-1.11,-7.92 L1.11,-7.92 L1.07,-5.50 L3.13,-4.64 L4.81,-6.39 L6.39,-4.81 L4.64,-3.13 Z" fill="#a8a8a8" stroke="#8a8a8a" stroke-width="0.8"/><circle cx="0" cy="0" r="3.2" fill="#eeeeee" stroke="#8a8a8a" stroke-width="0.8"/></svg>
<div class="b" style="left:1219px;top:294px;width:13px;height:13px;background:linear-gradient(#ffffff,#f4f8fc 35%,#c9dcf0);border:1px solid #7b90a6;box-shadow:inset 1px 1px 0 #ffffff;"></div>
<svg style="left:1219px;top:294px" width="13" height="13"><rect x="3" y="5" width="2" height="5" fill="#1a1a1a"/><path d="M4.5,9.5 L9.6,3.4" stroke="#1a1a1a" stroke-width="1.3" stroke-linecap="round"/></svg>
<div class="t" style="left:1236.50px;top:291.99px;font-size:13px;line-height:17px;font-family:'Liberation Sans',sans-serif;font-weight:normal;color:#000;transform:scaleX(1.0225);transform-origin:left center;">Show structural changes</div>
<div class="b" style="left:1391px;top:294px;width:13px;height:13px;background:linear-gradient(#ffffff,#f4f8fc 35%,#c9dcf0);border:1px solid #7b90a6;box-shadow:inset 1px 1px 0 #ffffff;"></div>
<svg style="left:1391px;top:294px" width="13" height="13"><rect x="3" y="5" width="2" height="5" fill="#1a1a1a"/><path d="M4.5,9.5 L9.6,3.4" stroke="#1a1a1a" stroke-width="1.3" stroke-linecap="round"/></svg>
<div class="t" style="left:1408.40px;top:291.99px;font-size:13px;line-height:17px;font-family:'Liberation Sans',sans-serif;font-weight:normal;color:#000;transform:scaleX(1.0257);transform-origin:left center;">Show only instructions changed</div>
<div class="b" style="left:1605px;top:294px;width:13px;height:13px;background:linear-gradient(#ffffff,#f4f8fc 35%,#c9dcf0);border:1px solid #7b90a6;box-shadow:inset 1px 1px 0 #ffffff;"></div>
<svg style="left:1605px;top:294px" width="13" height="13"><rect x="3" y="5" width="2" height="5" fill="#1a1a1a"/><path d="M4.5,9.5 L9.6,3.4" stroke="#1a1a1a" stroke-width="1.3" stroke-linecap="round"/></svg>
<div class="t" style="left:1622.40px;top:291.99px;font-size:13px;line-height:17px;font-family:'Liberation Sans',sans-serif;font-weight:normal;color:#000;transform:scaleX(1.0446);transform-origin:left center;">Show identical</div>
<div class="b" style="left:302px;top:318px;width:1412px;height:514px;background:#ffffff;"></div>
<div class="b" style="left:302px;top:319px;width:1397px;height:21px;background:#eeeeee;"></div>
<div class="b" style="left:303px;top:319px;width:1px;height:20px;background:#ffffff;"></div>
<div class="b" style="left:320px;top:319px;width:1px;height:21px;background:#7d90a5;"></div>
<div class="b" style="left:321px;top:319px;width:1px;height:20px;background:#ffffff;"></div>
<div class="b" style="left:430px;top:319px;width:1px;height:21px;background:#7d90a5;"></div>
<div class="t" style="left:342.70px;top:320.99px;font-size:13px;line-height:17px;font-family:'Liberation Sans',sans-serif;font-weight:normal;color:#000;transform:scaleX(0.9861);transform-origin:left center;">Similarity</div>
<div class="b" style="left:431px;top:319px;width:1px;height:20px;background:#ffffff;"></div>
<div class="b" style="left:540px;top:319px;width:1px;height:21px;background:#7d90a5;"></div>
<div class="t" style="left:454.10px;top:320.99px;font-size:13px;line-height:17px;font-family:'Liberation Sans',sans-serif;font-weight:normal;color:#000;">Confidence</div>
<div class="b" style="left:541px;top:319px;width:1px;height:20px;background:#ffffff;"></div>
<div class="b" style="left:695px;top:319px;width:1px;height:21px;background:#7d90a5;"></div>
<div class="t" style="left:595.65px;top:320.99px;font-size:13px;line-height:17px;font-family:'Liberation Sans',sans-serif;font-weight:normal;color:#000;">Address</div>
<div class="b" style="left:696px;top:319px;width:1px;height:20px;background:#ffffff;"></div>
<div class="b" style="left:928px;top:319px;width:1px;height:21px;background:#7d90a5;"></div>
<div class="t" style="left:771.96px;top:320.99px;font-size:13px;line-height:17px;font-family:'Liberation Sans',sans-serif;font-weight:normal;color:#000;">Primary Name</div>
<div class="b" style="left:929px;top:319px;width:1px;height:20px;background:#ffffff;"></div>
<div class="b" style="left:1024px;top:319px;width:1px;height:21px;background:#7d90a5;"></div>
<div class="t" style="left:963.91px;top:320.99px;font-size:13px;line-height:17px;font-family:'Liberation Sans',sans-serif;font-weight:normal;color:#000;">Type</div>
<div class="b" style="left:1025px;top:319px;width:1px;height:20px;background:#ffffff;"></div>
<div class="b" style="left:1144px;top:319px;width:1px;height:21px;background:#7d90a5;"></div>
<div class="t" style="left:1062.15px;top:320.99px;font-size:13px;line-height:17px;font-family:'Liberation Sans',sans-serif;font-weight:normal;color:#000;">Address</div>
<div class="b" style="left:1145px;top:319px;width:1px;height:20px;background:#ffffff;"></div>
<div class="b" style="left:1302px;top:319px;width:1px;height:21px;background:#7d90a5;"></div>
<div class="t" style="left:1174.77px;top:320.99px;font-size:13px;line-height:17px;font-family:'Liberation Sans',sans-serif;font-weight:normal;color:#000;">Secondary Name</div>
<div class="b" style="left:1303px;top:319px;width:1px;height:20px;background:#ffffff;"></div>
<div class="b" style="left:1417px;top:319px;width:1px;height:21px;background:#7d90a5;"></div>
<div class="t" style="left:1347.41px;top:320.99px;font-size:13px;line-height:17px;font-family:'Liberation Sans',sans-serif;font-weight:normal;color:#000;">Type</div>
<div class="b" style="left:1418px;top:319px;width:1px;height:20px;background:#ffffff;"></div>
<div class="b" style="left:1558px;top:319px;width:1px;height:21px;background:#7d90a5;"></div>
<div class="t" style="left:1452.65px;top:320.99px;font-size:13px;line-height:17px;font-family:'Liberation Sans',sans-serif;font-weight:normal;color:#000;">Basic Blocks</div>
<div class="b" style="left:1559px;top:319px;width:1px;height:20px;background:#ffffff;"></div>
<div class="b" style="left:1697px;top:319px;width:1px;height:21px;background:#7d90a5;"></div>
<div class="t" style="left:1610.35px;top:320.99px;font-size:13px;line-height:17px;font-family:'Liberation Sans',sans-serif;font-weight:normal;color:#000;">Jumps</div>
<div class="b" style="left:302px;top:339px;width:1396px;height:1px;background:#7d90a5;"></div>
<svg style="left:399px;top:327px" width="8" height="8"><path d="M0.5,0.5 L7.5,0.5 L4,6.5 Z" fill="#ffffff" stroke="#a0a0a0"/></svg>
<div style="position:absolute;left:0;top:0;width:1723px;height:961px;clip-path:inset(340px 26px 130px 302px);">
<div class="b" style="left:302px;top:340px;width:18px;height:21px;background:#ffffff;"></div>
<div class="b" style="left:321px;top:340px;width:109px;height:20px;background:#a8e600;"></div>
<div class="b" style="left:431px;top:340px;width:109px;height:20px;background:#8ff500;"></div>
<div class="b" style="left:541px;top:340px;width:154px;height:20px;background:#f8f8f8;border-top:1px solid #ffffff;border-bottom:1px solid #ffffff;"></div>
<div class="b" style="left:696px;top:340px;width:232px;height:20px;background:#f8f8f8;border-top:1px solid #ffffff;border-bottom:1px solid #ffffff;"></div>
<div class="b" style="left:929px;top:340px;width:95px;height:20px;background:#f8f8f8;border-top:1px solid #ffffff;border-bottom:1px solid #ffffff;"></div>
<div class="b" style="left:1025px;top:340px;width:119px;height:20px;background:#f8f8f8;border-top:1px solid #ffffff;border-bottom:1px solid #ffffff;"></div>
<div class="b" style="left:1145px;top:340px;width:157px;height:20px;background:#f8f8f8;border-top:1px solid #ffffff;border-bottom:1px solid #ffffff;"></div>
<div class="b" style="left:1303px;top:340px;width:114px;height:20px;background:#f8f8f8;border-top:1px solid #ffffff;border-bottom:1px solid #ffffff;"></div>
<div class="b" style="left:1419px;top:343px;width:17px;height:17px;background:#d7adad;"></div>
<div class="b" style="left:1437px;top:343px;width:115px;height:17px;background:#b0d4b0;"></div>
<div class="b" style="left:1553px;top:343px;width:4px;height:17px;background:#b8c3ce;"></div>
<div class="t" style="left:1422.00px;top:343.99px;font-size:13px;line-height:17px;font-family:'Liberation Sans',sans-serif;font-weight:normal;color:#000;">10</div>
<div class="t" style="left:1481.77px;top:343.99px;font-size:13px;line-height:17px;font-family:'Liberation Sans',sans-serif;font-weight:normal;color:#000;">66</div>
<div class="t" style="left:1545.77px;top:343.99px;font-size:13px;line-height:17px;font-family:'Liberation Sans',sans-serif;font-weight:normal;color:#000;">2</div>
<div class="b" style="left:1560px;top:343px;width:19px;height:17px;background:#d7adad;"></div>
<div class="b" style="left:1580px;top:343px;width:109px;height:17px;background:#b0d4b0;"></div>
<div class="b" style="left:1690px;top:343px;width:6px;height:17px;background:#b8c3ce;"></div>
<div class="t" style="left:1563.00px;top:343.99px;font-size:13px;line-height:17px;font-family:'Liberation Sans',sans-serif;font-weight:normal;color:#000;">17</div>
<div class="t" style="left:1621.77px;top:343.99px;font-size:13px;line-height:17px;font-family:'Liberation Sans',sans-serif;font-weight:normal;color:#000;">94</div>
<div class="t" style="left:1684.77px;top:343.99px;font-size:13px;line-height:17px;font-family:'Liberation Sans',sans-serif;font-weight:normal;color:#000;">5</div>
<div class="b" style="left:302px;top:360px;width:1395px;height:1px;background:#7d90a5;"></div>
<div class="t" style="left:363.34px;top:341.99px;font-size:13px;line-height:17px;font-family:'Liberation Sans',sans-serif;font-weight:normal;color:#000;">0.90</div>
<div class="t" style="left:473.34px;top:341.99px;font-size:13px;line-height:17px;font-family:'Liberation Sans',sans-serif;font-weight:normal;color:#000;">0.97</div>
<div class="t" style="left:545.00px;top:343.04px;font-size:13px;line-height:17px;font-family:'Liberation Mono',monospace;font-weight:normal;color:#000;transform:scaleX(1.0180);transform-origin:left center;">000000019C084764</div>
<div class="t" style="left:700.00px;top:343.04px;font-size:13px;line-height:17px;font-family:'Liberation Mono',monospace;font-weight:normal;color:#000;transform:scaleX(1.0162);transform-origin:left center;">sub_19C084764</div>
<div class="t" style="left:955.05px;top:341.99px;font-size:13px;line-height:17px;font-family:'Liberation Sans',sans-serif;font-weight:normal;color:#000;">Normal</div>
<div class="t" style="left:1029.00px;top:343.04px;font-size:13px;line-height:17px;font-family:'Liberation Mono',monospace;font-weight:normal;color:#000;transform:scaleX(1.0162);transform-origin:left center;">000000019C...</div>
<div class="t" style="left:1149.00px;top:343.04px;font-size:13px;line-height:17px;font-family:'Liberation Mono',monospace;font-weight:normal;color:#000;transform:scaleX(1.0162);transform-origin:left center;">sub_19C0847E4</div>
<div class="t" style="left:1340.05px;top:341.99px;font-size:13px;line-height:17px;font-family:'Liberation Sans',sans-serif;font-weight:normal;color:#000;">Normal</div>
<svg style="left:303px;top:343px" width="17" height="15" viewBox="0 0 17 15"><rect x="6.5" y="0.5" width="4" height="3" fill="#86cc70" stroke="#4a9a3a"/><path d="M8.5,4 V9" stroke="#8a8a8a"/><path d="M6.5,4.5 C4,5 3,6.5 2.5,8.5" stroke="#8a8a8a" stroke-dasharray="1.5,1" fill="none"/><path d="M10.5,4.5 C13,5 14,6.5 14.5,8.5" stroke="#777" stroke-dasharray="1.5,1" fill="none"/><path d="M1.5,8.5 h2 M7.5,8.5 h2 M13.5,8.5 h2" stroke="#8a8a8a"/><rect x="0.5" y="10.5" width="4" height="3" fill="#f0a4a4" stroke="#c86464"/><rect x="6.5" y="10.5" width="4" height="3" fill="#f2dc4a" stroke="#c0a020"/><rect x="12.5" y="10.5" width="4" height="3" fill="#78a4cc" stroke="#3f6f9f"/></svg>
<div class="b" style="left:302px;top:361px;width:18px;height:21px;background:#ffffff;"></div>
<div class="b" style="left:321px;top:361px;width:109px;height:20px;background:#a8e600;"></div>
<div class="b" style="left:431px;top:361px;width:109px;height:20px;background:#8ff500;"></div>
<div class="b" style="left:541px;top:361px;width:154px;height:20px;background:#f8f8f8;border-top:1px solid #ffffff;border-bottom:1px solid #ffffff;"></div>
<div class="b" style="left:696px;top:361px;width:232px;height:20px;background:#f8f8f8;border-top:1px solid #ffffff;border-bottom:1px solid #ffffff;"></div>
<div class="b" style="left:929px;top:361px;width:95px;height:20px;background:#f8f8f8;border-top:1px solid #ffffff;border-bottom:1px solid #ffffff;"></div>
<div class="b" style="left:1025px;top:361px;width:119px;height:20px;background:#f8f8f8;border-top:1px solid #ffffff;border-bottom:1px solid #ffffff;"></div>
<div class="b" style="left:1145px;top:361px;width:157px;height:20px;background:#f8f8f8;border-top:1px solid #ffffff;border-bottom:1px solid #ffffff;"></div>
<div class="b" style="left:1303px;top:361px;width:114px;height:20px;background:#f8f8f8;border-top:1px solid #ffffff;border-bottom:1px solid #ffffff;"></div>
<div class="b" style="left:1419px;top:364px;width:22px;height:17px;background:#d7adad;"></div>
<div class="b" style="left:1442px;top:364px;width:109px;height:17px;background:#b0d4b0;"></div>
<div class="b" style="left:1552px;top:364px;width:5px;height:17px;background:#b8c3ce;"></div>
<div class="t" style="left:1422.00px;top:364.99px;font-size:13px;line-height:17px;font-family:'Liberation Sans',sans-serif;font-weight:normal;color:#000;">10</div>
<div class="t" style="left:1481.77px;top:364.99px;font-size:13px;line-height:17px;font-family:'Liberation Sans',sans-serif;font-weight:normal;color:#000;">49</div>
<div class="t" style="left:1545.77px;top:364.99px;font-size:13px;line-height:17px;font-family:'Liberation Sans',sans-serif;font-weight:normal;color:#000;">2</div>
<div class="b" style="left:1560px;top:364px;width:25px;height:17px;background:#d7adad;"></div>
<div class="b" style="left:1586px;top:364px;width:101px;height:17px;background:#b0d4b0;"></div>
<div class="b" style="left:1688px;top:364px;width:8px;height:17px;background:#b8c3ce;"></div>
<div class="t" style="left:1563.00px;top:364.99px;font-size:13px;line-height:17px;font-family:'Liberation Sans',sans-serif;font-weight:normal;color:#000;">17</div>
<div class="t" style="left:1621.77px;top:364.99px;font-size:13px;line-height:17px;font-family:'Liberation Sans',sans-serif;font-weight:normal;color:#000;">66</div>
<div class="t" style="left:1684.77px;top:364.99px;font-size:13px;line-height:17px;font-family:'Liberation Sans',sans-serif;font-weight:normal;color:#000;">5</div>
<div class="b" style="left:302px;top:381px;width:1395px;height:1px;background:#7d90a5;"></div>
<div class="t" style="left:363.34px;top:362.99px;font-size:13px;line-height:17px;font-family:'Liberation Sans',sans-serif;font-weight:normal;color:#000;">0.90</div>
<div class="t" style="left:473.34px;top:362.99px;font-size:13px;line-height:17px;font-family:'Liberation Sans',sans-serif;font-weight:normal;color:#000;">0.98</div>
<div class="t" style="left:545.00px;top:364.04px;font-size:13px;line-height:17px;font-family:'Liberation Mono',monospace;font-weight:normal;color:#000;transform:scaleX(1.0180);transform-origin:left center;">000000019C047FD8</div>
<div class="t" style="left:700.00px;top:364.04px;font-size:13px;line-height:17px;font-family:'Liberation Mono',monospace;font-weight:normal;color:#000;transform:scaleX(1.0162);transform-origin:left center;">sub_19C047FD8</div>
<div class="t" style="left:955.05px;top:362.99px;font-size:13px;line-height:17px;font-family:'Liberation Sans',sans-serif;font-weight:normal;color:#000;">Normal</div>
<div class="t" style="left:1029.00px;top:364.04px;font-size:13px;line-height:17px;font-family:'Liberation Mono',monospace;font-weight:normal;color:#000;transform:scaleX(1.0162);transform-origin:left center;">000000019C...</div>
<div class="t" style="left:1149.00px;top:364.04px;font-size:13px;line-height:17px;font-family:'Liberation Mono',monospace;font-weight:normal;color:#000;transform:scaleX(1.0162);transform-origin:left center;">sub_19C048068</div>
<div class="t" style="left:1340.05px;top:362.99px;font-size:13px;line-height:17px;font-family:'Liberation Sans',sans-serif;font-weight:normal;color:#000;">Normal</div>
<svg style="left:303px;top:364px" width="17" height="15" viewBox="0 0 17 15"><rect x="6.5" y="0.5" width="4" height="3" fill="#86cc70" stroke="#4a9a3a"/><path d="M8.5,4 V9" stroke="#8a8a8a"/><path d="M6.5,4.5 C4,5 3,6.5 2.5,8.5" stroke="#8a8a8a" stroke-dasharray="1.5,1" fill="none"/><path d="M10.5,4.5 C13,5 14,6.5 14.5,8.5" stroke="#777" stroke-dasharray="1.5,1" fill="none"/><path d="M1.5,8.5 h2 M7.5,8.5 h2 M13.5,8.5 h2" stroke="#8a8a8a"/><rect x="0.5" y="10.5" width="4" height="3" fill="#f0a4a4" stroke="#c86464"/><rect x="6.5" y="10.5" width="4" height="3" fill="#f2dc4a" stroke="#c0a020"/><rect x="12.5" y="10.5" width="4" height="3" fill="#78a4cc" stroke="#3f6f9f"/></svg>
<div class="b" style="left:302px;top:382px;width:18px;height:21px;background:#ffffff;"></div>
<div class="b" style="left:321px;top:382px;width:109px;height:20px;background:#a8e600;"></div>
<div class="b" style="left:431px;top:382px;width:109px;height:20px;background:#8ff500;"></div>
<div class="b" style="left:541px;top:382px;width:154px;height:20px;background:#f8f8f8;border-top:1px solid #ffffff;border-bottom:1px solid #ffffff;"></div>
<div class="b" style="left:696px;top:382px;width:232px;height:20px;background:#f8f8f8;border-top:1px solid #ffffff;border-bottom:1px solid #ffffff;"></div>
<div class="b" style="left:929px;top:382px;width:95px;height:20px;background:#f8f8f8;border-top:1px solid #ffffff;border-bottom:1px solid #ffffff;"></div>
<div class="b" style="left:1025px;top:382px;width:119px;height:20px;background:#f8f8f8;border-top:1px solid #ffffff;border-bottom:1px solid #ffffff;"></div>
<div class="b" style="left:1145px;top:382px;width:157px;height:20px;background:#f8f8f8;border-top:1px solid #ffffff;border-bottom:1px solid #ffffff;"></div>
<div class="b" style="left:1303px;top:382px;width:114px;height:20px;background:#f8f8f8;border-top:1px solid #ffffff;border-bottom:1px solid #ffffff;"></div>
<div class="b" style="left:1419px;top:385px;width:22px;height:17px;background:#d7adad;"></div>
<div class="b" style="left:1442px;top:385px;width:109px;height:17px;background:#b0d4b0;"></div>
<div class="b" style="left:1552px;top:385px;width:5px;height:17px;background:#b8c3ce;"></div>
<div class="t" style="left:1422.00px;top:385.99px;font-size:13px;line-height:17px;font-family:'Liberation Sans',sans-serif;font-weight:normal;color:#000;">10</div>
<div class="t" style="left:1481.77px;top:385.99px;font-size:13px;line-height:17px;font-family:'Liberation Sans',sans-serif;font-weight:normal;color:#000;">49</div>
<div class="t" style="left:1545.77px;top:385.99px;font-size:13px;line-height:17px;font-family:'Liberation Sans',sans-serif;font-weight:normal;color:#000;">2</div>
<div class="b" style="left:1560px;top:385px;width:25px;height:17px;background:#d7adad;"></div>
<div class="b" style="left:1586px;top:385px;width:101px;height:17px;background:#b0d4b0;"></div>
<div class="b" style="left:1688px;top:385px;width:8px;height:17px;background:#b8c3ce;"></div>
<div class="t" style="left:1563.00px;top:385.99px;font-size:13px;line-height:17px;font-family:'Liberation Sans',sans-serif;font-weight:normal;color:#000;">17</div>
<div class="t" style="left:1621.77px;top:385.99px;font-size:13px;line-height:17px;font-family:'Liberation Sans',sans-serif;font-weight:normal;color:#000;">66</div>
<div class="t" style="left:1684.77px;top:385.99px;font-size:13px;line-height:17px;font-family:'Liberation Sans',sans-serif;font-weight:normal;color:#000;">5</div>
<div class="b" style="left:302px;top:402px;width:1395px;height:1px;background:#7d90a5;"></div>
<div class="t" style="left:363.34px;top:383.99px;font-size:13px;line-height:17px;font-family:'Liberation Sans',sans-serif;font-weight:normal;color:#000;">0.90</div>
<div class="t" style="left:473.34px;top:383.99px;font-size:13px;line-height:17px;font-family:'Liberation Sans',sans-serif;font-weight:normal;color:#000;">0.98</div>
<div class="t" style="left:545.00px;top:385.04px;font-size:13px;line-height:17px;font-family:'Liberation Mono',monospace;font-weight:normal;color:#000;transform:scaleX(1.0180);transform-origin:left center;">000000019C04804C</div>
<div class="t" style="left:700.00px;top:385.04px;font-size:13px;line-height:17px;font-family:'Liberation Mono',monospace;font-weight:normal;color:#000;transform:scaleX(1.0162);transform-origin:left center;">sub_19C04804C</div>
<div class="t" style="left:955.05px;top:383.99px;font-size:13px;line-height:17px;font-family:'Liberation Sans',sans-serif;font-weight:normal;color:#000;">Normal</div>
<div class="t" style="left:1029.00px;top:385.04px;font-size:13px;line-height:17px;font-family:'Liberation Mono',monospace;font-weight:normal;color:#000;transform:scaleX(1.0162);transform-origin:left center;">000000019C...</div>
<div class="t" style="left:1149.00px;top:385.04px;font-size:13px;line-height:17px;font-family:'Liberation Mono',monospace;font-weight:normal;color:#000;transform:scaleX(1.0162);transform-origin:left center;">sub_19C0480DC</div>
<div class="t" style="left:1340.05px;top:383.99px;font-size:13px;line-height:17px;font-family:'Liberation Sans',sans-serif;font-weight:normal;color:#000;">Normal</div>
<svg style="left:303px;top:385px" width="17" height="15" viewBox="0 0 17 15"><rect x="6.5" y="0.5" width="4" height="3" fill="#86cc70" stroke="#4a9a3a"/><path d="M8.5,4 V9" stroke="#8a8a8a"/><path d="M6.5,4.5 C4,5 3,6.5 2.5,8.5" stroke="#8a8a8a" stroke-dasharray="1.5,1" fill="none"/><path d="M10.5,4.5 C13,5 14,6.5 14.5,8.5" stroke="#777" stroke-dasharray="1.5,1" fill="none"/><path d="M1.5,8.5 h2 M7.5,8.5 h2 M13.5,8.5 h2" stroke="#8a8a8a"/><rect x="0.5" y="10.5" width="4" height="3" fill="#f0a4a4" stroke="#c86464"/><rect x="6.5" y="10.5" width="4" height="3" fill="#f2dc4a" stroke="#c0a020"/><rect x="12.5" y="10.5" width="4" height="3" fill="#78a4cc" stroke="#3f6f9f"/></svg>
<div class="b" style="left:302px;top:403px;width:18px;height:21px;background:#ffffff;"></div>
<div class="b" style="left:321px;top:403px;width:109px;height:20px;background:#a8e600;"></div>
<div class="b" style="left:431px;top:403px;width:109px;height:20px;background:#8ff500;"></div>
<div class="b" style="left:541px;top:403px;width:154px;height:20px;background:#f8f8f8;border-top:1px solid #ffffff;border-bottom:1px solid #ffffff;"></div>
<div class="b" style="left:696px;top:403px;width:232px;height:20px;background:#f8f8f8;border-top:1px solid #ffffff;border-bottom:1px solid #ffffff;"></div>
<div class="b" style="left:929px;top:403px;width:95px;height:20px;background:#f8f8f8;border-top:1px solid #ffffff;border-bottom:1px solid #ffffff;"></div>
<div class="b" style="left:1025px;top:403px;width:119px;height:20px;background:#f8f8f8;border-top:1px solid #ffffff;border-bottom:1px solid #ffffff;"></div>
<div class="b" style="left:1145px;top:403px;width:157px;height:20px;background:#f8f8f8;border-top:1px solid #ffffff;border-bottom:1px solid #ffffff;"></div>
<div class="b" style="left:1303px;top:403px;width:114px;height:20px;background:#f8f8f8;border-top:1px solid #ffffff;border-bottom:1px solid #ffffff;"></div>
<div class="b" style="left:1419px;top:406px;width:22px;height:17px;background:#d7adad;"></div>
<div class="b" style="left:1442px;top:406px;width:109px;height:17px;background:#b0d4b0;"></div>
<div class="b" style="left:1552px;top:406px;width:5px;height:17px;background:#b8c3ce;"></div>
<div class="t" style="left:1422.00px;top:406.99px;font-size:13px;line-height:17px;font-family:'Liberation Sans',sans-serif;font-weight:normal;color:#000;">10</div>
<div class="t" style="left:1481.77px;top:406.99px;font-size:13px;line-height:17px;font-family:'Liberation Sans',sans-serif;font-weight:normal;color:#000;">49</div>
<div class="t" style="left:1545.77px;top:406.99px;font-size:13px;line-height:17px;font-family:'Liberation Sans',sans-serif;font-weight:normal;color:#000;">2</div>
<div class="b" style="left:1560px;top:406px;width:25px;height:17px;background:#d7adad;"></div>
<div class="b" style="left:1586px;top:406px;width:101px;height:17px;background:#b0d4b0;"></div>
<div class="b" style="left:1688px;top:406px;width:8px;height:17px;background:#b8c3ce;"></div>
<div class="t" style="left:1563.00px;top:406.99px;font-size:13px;line-height:17px;font-family:'Liberation Sans',sans-serif;font-weight:normal;color:#000;">17</div>
<div class="t" style="left:1621.77px;top:406.99px;font-size:13px;line-height:17px;font-family:'Liberation Sans',sans-serif;font-weight:normal;color:#000;">66</div>
<div class="t" style="left:1684.77px;top:406.99px;font-size:13px;line-height:17px;font-family:'Liberation Sans',sans-serif;font-weight:normal;color:#000;">5</div>
<div class="b" style="left:302px;top:423px;width:1395px;height:1px;background:#7d90a5;"></div>
<div class="t" style="left:363.34px;top:404.99px;font-size:13px;line-height:17px;font-family:'Liberation Sans',sans-serif;font-weight:normal;color:#000;">0.90</div>
<div class="t" style="left:473.34px;top:404.99px;font-size:13px;line-height:17px;font-family:'Liberation Sans',sans-serif;font-weight:normal;color:#000;">0.98</div>
<div class="t" style="left:545.00px;top:406.04px;font-size:13px;line-height:17px;font-family:'Liberation Mono',monospace;font-weight:normal;color:#000;transform:scaleX(1.0180);transform-origin:left center;">000000019C0480A0</div>
<div class="t" style="left:700.00px;top:406.04px;font-size:13px;line-height:17px;font-family:'Liberation Mono',monospace;font-weight:normal;color:#000;transform:scaleX(1.0162);transform-origin:left center;">sub_19C0480A0</div>
<div class="t" style="left:955.05px;top:404.99px;font-size:13px;line-height:17px;font-family:'Liberation Sans',sans-serif;font-weight:normal;color:#000;">Normal</div>
<div class="t" style="left:1029.00px;top:406.04px;font-size:13px;line-height:17px;font-family:'Liberation Mono',monospace;font-weight:normal;color:#000;transform:scaleX(1.0162);transform-origin:left center;">000000019C...</div>
<div class="t" style="left:1149.00px;top:406.04px;font-size:13px;line-height:17px;font-family:'Liberation Mono',monospace;font-weight:normal;color:#000;transform:scaleX(1.0162);transform-origin:left center;">sub_19C048130</div>
<div class="t" style="left:1340.05px;top:404.99px;font-size:13px;line-height:17px;font-family:'Liberation Sans',sans-serif;font-weight:normal;color:#000;">Normal</div>
<svg style="left:303px;top:406px" width="17" height="15" viewBox="0 0 17 15"><rect x="6.5" y="0.5" width="4" height="3" fill="#86cc70" stroke="#4a9a3a"/><path d="M8.5,4 V9" stroke="#8a8a8a"/><path d="M6.5,4.5 C4,5 3,6.5 2.5,8.5" stroke="#8a8a8a" stroke-dasharray="1.5,1" fill="none"/><path d="M10.5,4.5 C13,5 14,6.5 14.5,8.5" stroke="#777" stroke-dasharray="1.5,1" fill="none"/><path d="M1.5,8.5 h2 M7.5,8.5 h2 M13.5,8.5 h2" stroke="#8a8a8a"/><rect x="0.5" y="10.5" width="4" height="3" fill="#f0a4a4" stroke="#c86464"/><rect x="6.5" y="10.5" width="4" height="3" fill="#f2dc4a" stroke="#c0a020"/><rect x="12.5" y="10.5" width="4" height="3" fill="#78a4cc" stroke="#3f6f9f"/></svg>
<div class="b" style="left:302px;top:424px;width:18px;height:21px;background:#ffffff;"></div>
<div class="b" style="left:321px;top:424px;width:109px;height:20px;background:#abe500;"></div>
<div class="b" style="left:431px;top:424px;width:109px;height:20px;background:#8ff500;"></div>
<div class="b" style="left:541px;top:424px;width:154px;height:20px;background:#f8f8f8;border-top:1px solid #ffffff;border-bottom:1px solid #ffffff;"></div>
<div class="b" style="left:696px;top:424px;width:232px;height:20px;background:#f8f8f8;border-top:1px solid #ffffff;border-bottom:1px solid #ffffff;"></div>
<div class="b" style="left:929px;top:424px;width:95px;height:20px;background:#f8f8f8;border-top:1px solid #ffffff;border-bottom:1px solid #ffffff;"></div>
<div class="b" style="left:1025px;top:424px;width:119px;height:20px;background:#f8f8f8;border-top:1px solid #ffffff;border-bottom:1px solid #ffffff;"></div>
<div class="b" style="left:1145px;top:424px;width:157px;height:20px;background:#f8f8f8;border-top:1px solid #ffffff;border-bottom:1px solid #ffffff;"></div>
<div class="b" style="left:1303px;top:424px;width:114px;height:20px;background:#f8f8f8;border-top:1px solid #ffffff;border-bottom:1px solid #ffffff;"></div>
<div class="b" style="left:1419px;top:427px;width:29px;height:17px;background:#d7adad;"></div>
<div class="b" style="left:1449px;top:427px;width:108px;height:17px;background:#b0d4b0;"></div>
<div class="t" style="left:1422.00px;top:427.99px;font-size:13px;line-height:17px;font-family:'Liberation Sans',sans-serif;font-weight:normal;color:#000;">23</div>
<div class="t" style="left:1481.77px;top:427.99px;font-size:13px;line-height:17px;font-family:'Liberation Sans',sans-serif;font-weight:normal;color:#000;">82</div>
<div class="t" style="left:1545.77px;top:427.99px;font-size:13px;line-height:17px;font-family:'Liberation Sans',sans-serif;font-weight:normal;color:#000;">0</div>
<div class="b" style="left:1560px;top:427px;width:34px;height:17px;background:#d7adad;"></div>
<div class="b" style="left:1595px;top:427px;width:93px;height:17px;background:#b0d4b0;"></div>
<div class="b" style="left:1689px;top:427px;width:7px;height:17px;background:#b8c3ce;"></div>
<div class="t" style="left:1563.00px;top:427.99px;font-size:13px;line-height:17px;font-family:'Liberation Sans',sans-serif;font-weight:normal;color:#000;">41</div>
<div class="t" style="left:1618.63px;top:427.99px;font-size:13px;line-height:17px;font-family:'Liberation Sans',sans-serif;font-weight:normal;color:#000;">110</div>
<div class="t" style="left:1684.77px;top:427.99px;font-size:13px;line-height:17px;font-family:'Liberation Sans',sans-serif;font-weight:normal;color:#000;">8</div>
<div class="b" style="left:302px;top:444px;width:1395px;height:1px;background:#7d90a5;"></div>
<div class="t" style="left:363.34px;top:425.99px;font-size:13px;line-height:17px;font-family:'Liberation Sans',sans-serif;font-weight:normal;color:#000;">0.89</div>
<div class="t" style="left:473.34px;top:425.99px;font-size:13px;line-height:17px;font-family:'Liberation Sans',sans-serif;font-weight:normal;color:#000;">0.99</div>
<div class="t" style="left:545.00px;top:427.04px;font-size:13px;line-height:17px;font-family:'Liberation Mono',monospace;font-weight:normal;color:#000;transform:scaleX(1.0180);transform-origin:left center;">000000019C0E859C</div>
<div class="t" style="left:700.00px;top:427.04px;font-size:13px;line-height:17px;font-family:'Liberation Mono',monospace;font-weight:normal;color:#000;transform:scaleX(1.0162);transform-origin:left center;">sub_19C0E859C</div>
<div class="t" style="left:955.05px;top:425.99px;font-size:13px;line-height:17px;font-family:'Liberation Sans',sans-serif;font-weight:normal;color:#000;">Normal</div>
<div class="t" style="left:1029.00px;top:427.04px;font-size:13px;line-height:17px;font-family:'Liberation Mono',monospace;font-weight:normal;color:#000;transform:scaleX(1.0162);transform-origin:left center;">000000019C...</div>
<div class="t" style="left:1149.00px;top:427.04px;font-size:13px;line-height:17px;font-family:'Liberation Mono',monospace;font-weight:normal;color:#000;transform:scaleX(1.0162);transform-origin:left center;">sub_19C0E859C</div>
<div class="t" style="left:1340.05px;top:425.99px;font-size:13px;line-height:17px;font-family:'Liberation Sans',sans-serif;font-weight:normal;color:#000;">Normal</div>
<svg style="left:303px;top:427px" width="17" height="15" viewBox="0 0 17 15"><rect x="6.5" y="0.5" width="4" height="3" fill="#86cc70" stroke="#4a9a3a"/><path d="M8.5,4 V9" stroke="#8a8a8a"/><path d="M6.5,4.5 C4,5 3,6.5 2.5,8.5" stroke="#8a8a8a" stroke-dasharray="1.5,1" fill="none"/><path d="M10.5,4.5 C13,5 14,6.5 14.5,8.5" stroke="#777" stroke-dasharray="1.5,1" fill="none"/><path d="M1.5,8.5 h2 M7.5,8.5 h2 M13.5,8.5 h2" stroke="#8a8a8a"/><rect x="0.5" y="10.5" width="4" height="3" fill="#f0a4a4" stroke="#c86464"/><rect x="6.5" y="10.5" width="4" height="3" fill="#f2dc4a" stroke="#c0a020"/><rect x="12.5" y="10.5" width="4" height="3" fill="#78a4cc" stroke="#3f6f9f"/></svg>
<div class="b" style="left:302px;top:445px;width:18px;height:21px;background:#ffffff;"></div>
<div class="b" style="left:321px;top:445px;width:109px;height:20px;background:#b6e000;"></div>
<div class="b" style="left:431px;top:445px;width:109px;height:20px;background:#98f000;"></div>
<div class="b" style="left:541px;top:445px;width:154px;height:20px;background:#f8f8f8;border-top:1px solid #ffffff;border-bottom:1px solid #ffffff;"></div>
<div class="b" style="left:696px;top:445px;width:232px;height:20px;background:#f8f8f8;border-top:1px solid #ffffff;border-bottom:1px solid #ffffff;"></div>
<div class="b" style="left:929px;top:445px;width:95px;height:20px;background:#f8f8f8;border-top:1px solid #ffffff;border-bottom:1px solid #ffffff;"></div>
<div class="b" style="left:1025px;top:445px;width:119px;height:20px;background:#f8f8f8;border-top:1px solid #ffffff;border-bottom:1px solid #ffffff;"></div>
<div class="b" style="left:1145px;top:445px;width:157px;height:20px;background:#f8f8f8;border-top:1px solid #ffffff;border-bottom:1px solid #ffffff;"></div>
<div class="b" style="left:1303px;top:445px;width:114px;height:20px;background:#f8f8f8;border-top:1px solid #ffffff;border-bottom:1px solid #ffffff;"></div>
<div class="b" style="left:1419px;top:448px;width:23px;height:17px;background:#d7adad;"></div>
<div class="b" style="left:1443px;top:448px;width:108px;height:17px;background:#b0d4b0;"></div>
<div class="b" style="left:1552px;top:448px;width:5px;height:17px;background:#b8c3ce;"></div>
<div class="t" style="left:1422.00px;top:448.99px;font-size:13px;line-height:17px;font-family:'Liberation Sans',sans-serif;font-weight:normal;color:#000;">10</div>
<div class="t" style="left:1481.77px;top:448.99px;font-size:13px;line-height:17px;font-family:'Liberation Sans',sans-serif;font-weight:normal;color:#000;">46</div>
<div class="t" style="left:1545.77px;top:448.99px;font-size:13px;line-height:17px;font-family:'Liberation Sans',sans-serif;font-weight:normal;color:#000;">2</div>
<div class="b" style="left:1560px;top:448px;width:27px;height:17px;background:#d7adad;"></div>
<div class="b" style="left:1588px;top:448px;width:99px;height:17px;background:#b0d4b0;"></div>
<div class="b" style="left:1688px;top:448px;width:8px;height:17px;background:#b8c3ce;"></div>
<div class="t" style="left:1563.00px;top:448.99px;font-size:13px;line-height:17px;font-family:'Liberation Sans',sans-serif;font-weight:normal;color:#000;">17</div>
<div class="t" style="left:1621.77px;top:448.99px;font-size:13px;line-height:17px;font-family:'Liberation Sans',sans-serif;font-weight:normal;color:#000;">62</div>
<div class="t" style="left:1684.77px;top:448.99px;font-size:13px;line-height:17px;font-family:'Liberation Sans',sans-serif;font-weight:normal;color:#000;">5</div>
<div class="b" style="left:302px;top:465px;width:1395px;height:1px;background:#7d90a5;"></div>
<div class="t" style="left:363.34px;top:446.99px;font-size:13px;line-height:17px;font-family:'Liberation Sans',sans-serif;font-weight:normal;color:#000;">0.85</div>
<div class="t" style="left:473.34px;top:446.99px;font-size:13px;line-height:17px;font-family:'Liberation Sans',sans-serif;font-weight:normal;color:#000;">0.94</div>
<div class="t" style="left:545.00px;top:448.04px;font-size:13px;line-height:17px;font-family:'Liberation Mono',monospace;font-weight:normal;color:#000;transform:scaleX(1.0180);transform-origin:left center;">000000019C08479C</div>
<div class="t" style="left:700.00px;top:448.04px;font-size:13px;line-height:17px;font-family:'Liberation Mono',monospace;font-weight:normal;color:#000;transform:scaleX(1.0162);transform-origin:left center;">sub_19C08479C</div>
<div class="t" style="left:955.05px;top:446.99px;font-size:13px;line-height:17px;font-family:'Liberation Sans',sans-serif;font-weight:normal;color:#000;">Normal</div>
<div class="t" style="left:1029.00px;top:448.04px;font-size:13px;line-height:17px;font-family:'Liberation Mono',monospace;font-weight:normal;color:#000;transform:scaleX(1.0162);transform-origin:left center;">000000019C...</div>
<div class="t" style="left:1149.00px;top:448.04px;font-size:13px;line-height:17px;font-family:'Liberation Mono',monospace;font-weight:normal;color:#000;transform:scaleX(1.0162);transform-origin:left center;">sub_19C08481C</div>
<div class="t" style="left:1340.05px;top:446.99px;font-size:13px;line-height:17px;font-family:'Liberation Sans',sans-serif;font-weight:normal;color:#000;">Normal</div>
<svg style="left:303px;top:448px" width="17" height="15" viewBox="0 0 17 15"><rect x="6.5" y="0.5" width="4" height="3" fill="#86cc70" stroke="#4a9a3a"/><path d="M8.5,4 V9" stroke="#8a8a8a"/><path d="M6.5,4.5 C4,5 3,6.5 2.5,8.5" stroke="#8a8a8a" stroke-dasharray="1.5,1" fill="none"/><path d="M10.5,4.5 C13,5 14,6.5 14.5,8.5" stroke="#777" stroke-dasharray="1.5,1" fill="none"/><path d="M1.5,8.5 h2 M7.5,8.5 h2 M13.5,8.5 h2" stroke="#8a8a8a"/><rect x="0.5" y="10.5" width="4" height="3" fill="#f0a4a4" stroke="#c86464"/><rect x="6.5" y="10.5" width="4" height="3" fill="#f2dc4a" stroke="#c0a020"/><rect x="12.5" y="10.5" width="4" height="3" fill="#78a4cc" stroke="#3f6f9f"/></svg>
<div class="b" style="left:302px;top:466px;width:18px;height:21px;background:#ffffff;"></div>
<div class="b" style="left:321px;top:466px;width:109px;height:20px;background:#bcde00;"></div>
<div class="b" style="left:431px;top:466px;width:109px;height:20px;background:#8ff500;"></div>
<div class="b" style="left:541px;top:466px;width:154px;height:20px;background:#f8f8f8;border-top:1px solid #ffffff;border-bottom:1px solid #ffffff;"></div>
<div class="b" style="left:696px;top:466px;width:232px;height:20px;background:#f8f8f8;border-top:1px solid #ffffff;border-bottom:1px solid #ffffff;"></div>
<div class="b" style="left:929px;top:466px;width:95px;height:20px;background:#f8f8f8;border-top:1px solid #ffffff;border-bottom:1px solid #ffffff;"></div>
<div class="b" style="left:1025px;top:466px;width:119px;height:20px;background:#f8f8f8;border-top:1px solid #ffffff;border-bottom:1px solid #ffffff;"></div>
<div class="b" style="left:1145px;top:466px;width:157px;height:20px;background:#f8f8f8;border-top:1px solid #ffffff;border-bottom:1px solid #ffffff;"></div>
<div class="b" style="left:1303px;top:466px;width:114px;height:20px;background:#f8f8f8;border-top:1px solid #ffffff;border-bottom:1px solid #ffffff;"></div>
<div class="b" style="left:1419px;top:469px;width:42px;height:17px;background:#d7adad;"></div>
<div class="b" style="left:1462px;top:469px;width:95px;height:17px;background:#b0d4b0;"></div>
<div class="t" style="left:1422.00px;top:469.99px;font-size:13px;line-height:17px;font-family:'Liberation Sans',sans-serif;font-weight:normal;color:#000;">23</div>
<div class="t" style="left:1481.77px;top:469.99px;font-size:13px;line-height:17px;font-family:'Liberation Sans',sans-serif;font-weight:normal;color:#000;">50</div>
<div class="t" style="left:1545.77px;top:469.99px;font-size:13px;line-height:17px;font-family:'Liberation Sans',sans-serif;font-weight:normal;color:#000;">0</div>
<div class="b" style="left:1560px;top:469px;width:48px;height:17px;background:#d7adad;"></div>
<div class="b" style="left:1609px;top:469px;width:76px;height:17px;background:#b0d4b0;"></div>
<div class="b" style="left:1686px;top:469px;width:10px;height:17px;background:#b8c3ce;"></div>
<div class="t" style="left:1563.00px;top:469.99px;font-size:13px;line-height:17px;font-family:'Liberation Sans',sans-serif;font-weight:normal;color:#000;">41</div>
<div class="t" style="left:1621.77px;top:469.99px;font-size:13px;line-height:17px;font-family:'Liberation Sans',sans-serif;font-weight:normal;color:#000;">65</div>
<div class="t" style="left:1684.77px;top:469.99px;font-size:13px;line-height:17px;font-family:'Liberation Sans',sans-serif;font-weight:normal;color:#000;">8</div>
<div class="b" style="left:302px;top:486px;width:1395px;height:1px;background:#7d90a5;"></div>
<div class="t" style="left:363.34px;top:467.99px;font-size:13px;line-height:17px;font-family:'Liberation Sans',sans-serif;font-weight:normal;color:#000;">0.83</div>
<div class="t" style="left:473.34px;top:467.99px;font-size:13px;line-height:17px;font-family:'Liberation Sans',sans-serif;font-weight:normal;color:#000;">0.98</div>
<div class="t" style="left:545.00px;top:469.04px;font-size:13px;line-height:17px;font-family:'Liberation Mono',monospace;font-weight:normal;color:#000;transform:scaleX(1.0180);transform-origin:left center;">000000019C0E8698</div>
<div class="t" style="left:700.00px;top:469.04px;font-size:13px;line-height:17px;font-family:'Liberation Mono',monospace;font-weight:normal;color:#000;transform:scaleX(1.0162);transform-origin:left center;">sub_19C0E8698</div>
<div class="t" style="left:955.05px;top:467.99px;font-size:13px;line-height:17px;font-family:'Liberation Sans',sans-serif;font-weight:normal;color:#000;">Normal</div>
<div class="t" style="left:1029.00px;top:469.04px;font-size:13px;line-height:17px;font-family:'Liberation Mono',monospace;font-weight:normal;color:#000;transform:scaleX(1.0162);transform-origin:left center;">000000019C...</div>
<div class="t" style="left:1149.00px;top:469.04px;font-size:13px;line-height:17px;font-family:'Liberation Mono',monospace;font-weight:normal;color:#000;transform:scaleX(1.0162);transform-origin:left center;">sub_19C0E8698</div>
<div class="t" style="left:1340.05px;top:467.99px;font-size:13px;line-height:17px;font-family:'Liberation Sans',sans-serif;font-weight:normal;color:#000;">Normal</div>
<svg style="left:303px;top:469px" width="17" height="15" viewBox="0 0 17 15"><rect x="6.5" y="0.5" width="4" height="3" fill="#86cc70" stroke="#4a9a3a"/><path d="M8.5,4 V9" stroke="#8a8a8a"/><path d="M6.5,4.5 C4,5 3,6.5 2.5,8.5" stroke="#8a8a8a" stroke-dasharray="1.5,1" fill="none"/><path d="M10.5,4.5 C13,5 14,6.5 14.5,8.5" stroke="#777" stroke-dasharray="1.5,1" fill="none"/><path d="M1.5,8.5 h2 M7.5,8.5 h2 M13.5,8.5 h2" stroke="#8a8a8a"/><rect x="0.5" y="10.5" width="4" height="3" fill="#f0a4a4" stroke="#c86464"/><rect x="6.5" y="10.5" width="4" height="3" fill="#f2dc4a" stroke="#c0a020"/><rect x="12.5" y="10.5" width="4" height="3" fill="#78a4cc" stroke="#3f6f9f"/></svg>
<div class="b" style="left:302px;top:487px;width:18px;height:21px;background:#ffffff;"></div>
<div class="b" style="left:321px;top:487px;width:109px;height:20px;background:#c4da00;"></div>
<div class="b" style="left:431px;top:487px;width:109px;height:20px;background:#9cee00;"></div>
<div class="b" style="left:541px;top:487px;width:154px;height:20px;background:#f8f8f8;border-top:1px solid #ffffff;border-bottom:1px solid #ffffff;"></div>
<div class="b" style="left:696px;top:487px;width:232px;height:20px;background:#f8f8f8;border-top:1px solid #ffffff;border-bottom:1px solid #ffffff;"></div>
<div class="b" style="left:929px;top:487px;width:95px;height:20px;background:#f8f8f8;border-top:1px solid #ffffff;border-bottom:1px solid #ffffff;"></div>
<div class="b" style="left:1025px;top:487px;width:119px;height:20px;background:#f8f8f8;border-top:1px solid #ffffff;border-bottom:1px solid #ffffff;"></div>
<div class="b" style="left:1145px;top:487px;width:157px;height:20px;background:#f8f8f8;border-top:1px solid #ffffff;border-bottom:1px solid #ffffff;"></div>
<div class="b" style="left:1303px;top:487px;width:114px;height:20px;background:#f8f8f8;border-top:1px solid #ffffff;border-bottom:1px solid #ffffff;"></div>
<div class="b" style="left:1419px;top:490px;width:19px;height:17px;background:#d7adad;"></div>
<div class="b" style="left:1439px;top:490px;width:105px;height:17px;background:#b0d4b0;"></div>
<div class="b" style="left:1545px;top:490px;width:12px;height:17px;background:#b8c3ce;"></div>
<div class="t" style="left:1422.00px;top:490.99px;font-size:13px;line-height:17px;font-family:'Liberation Sans',sans-serif;font-weight:normal;color:#000;">5</div>
<div class="t" style="left:1481.77px;top:490.99px;font-size:13px;line-height:17px;font-family:'Liberation Sans',sans-serif;font-weight:normal;color:#000;">27</div>
<div class="t" style="left:1545.77px;top:490.99px;font-size:13px;line-height:17px;font-family:'Liberation Sans',sans-serif;font-weight:normal;color:#000;">3</div>
<div class="b" style="left:1560px;top:490px;width:37px;height:17px;background:#d7adad;"></div>
<div class="b" style="left:1598px;top:490px;width:62px;height:17px;background:#b0d4b0;"></div>
<div class="b" style="left:1661px;top:490px;width:35px;height:17px;background:#b8c3ce;"></div>
<div class="t" style="left:1563.00px;top:490.99px;font-size:13px;line-height:17px;font-family:'Liberation Sans',sans-serif;font-weight:normal;color:#000;">16</div>
<div class="t" style="left:1621.77px;top:490.99px;font-size:13px;line-height:17px;font-family:'Liberation Sans',sans-serif;font-weight:normal;color:#000;">27</div>
<div class="t" style="left:1677.53px;top:490.99px;font-size:13px;line-height:17px;font-family:'Liberation Sans',sans-serif;font-weight:normal;color:#000;">15</div>
<div class="b" style="left:302px;top:507px;width:1395px;height:1px;background:#7d90a5;"></div>
<div class="t" style="left:363.34px;top:488.99px;font-size:13px;line-height:17px;font-family:'Liberation Sans',sans-serif;font-weight:normal;color:#000;">0.80</div>
<div class="t" style="left:473.34px;top:488.99px;font-size:13px;line-height:17px;font-family:'Liberation Sans',sans-serif;font-weight:normal;color:#000;">0.93</div>
<div class="t" style="left:545.00px;top:490.04px;font-size:13px;line-height:17px;font-family:'Liberation Mono',monospace;font-weight:normal;color:#000;transform:scaleX(1.0180);transform-origin:left center;">000000019C0F84A8</div>
<div class="t" style="left:700.00px;top:490.04px;font-size:13px;line-height:17px;font-family:'Liberation Mono',monospace;font-weight:normal;color:#000;transform:scaleX(1.0162);transform-origin:left center;">sub_19C0F84A8</div>
<div class="t" style="left:955.05px;top:488.99px;font-size:13px;line-height:17px;font-family:'Liberation Sans',sans-serif;font-weight:normal;color:#000;">Normal</div>
<div class="t" style="left:1029.00px;top:490.04px;font-size:13px;line-height:17px;font-family:'Liberation Mono',monospace;font-weight:normal;color:#000;transform:scaleX(1.0162);transform-origin:left center;">000000019C...</div>
<div class="t" style="left:1149.00px;top:490.04px;font-size:13px;line-height:17px;font-family:'Liberation Mono',monospace;font-weight:normal;color:#000;transform:scaleX(1.0162);transform-origin:left center;">sub_19C0F84A8</div>
<div class="t" style="left:1340.05px;top:488.99px;font-size:13px;line-height:17px;font-family:'Liberation Sans',sans-serif;font-weight:normal;color:#000;">Normal</div>
<svg style="left:303px;top:490px" width="17" height="15" viewBox="0 0 17 15"><rect x="6.5" y="0.5" width="4" height="3" fill="#86cc70" stroke="#4a9a3a"/><path d="M8.5,4 V9" stroke="#8a8a8a"/><path d="M6.5,4.5 C4,5 3,6.5 2.5,8.5" stroke="#8a8a8a" stroke-dasharray="1.5,1" fill="none"/><path d="M10.5,4.5 C13,5 14,6.5 14.5,8.5" stroke="#777" stroke-dasharray="1.5,1" fill="none"/><path d="M1.5,8.5 h2 M7.5,8.5 h2 M13.5,8.5 h2" stroke="#8a8a8a"/><rect x="0.5" y="10.5" width="4" height="3" fill="#f0a4a4" stroke="#c86464"/><rect x="6.5" y="10.5" width="4" height="3" fill="#f2dc4a" stroke="#c0a020"/><rect x="12.5" y="10.5" width="4" height="3" fill="#78a4cc" stroke="#3f6f9f"/></svg>
<div class="b" style="left:302px;top:508px;width:18px;height:21px;background:#ffffff;"></div>
<div class="b" style="left:321px;top:508px;width:109px;height:20px;background:#c6d800;"></div>
<div class="b" style="left:431px;top:508px;width:109px;height:20px;background:#8ff500;"></div>
<div class="b" style="left:541px;top:508px;width:154px;height:20px;background:#f8f8f8;border-top:1px solid #ffffff;border-bottom:1px solid #ffffff;"></div>
<div class="b" style="left:696px;top:508px;width:232px;height:20px;background:#f8f8f8;border-top:1px solid #ffffff;border-bottom:1px solid #ffffff;"></div>
<div class="b" style="left:929px;top:508px;width:95px;height:20px;background:#f8f8f8;border-top:1px solid #ffffff;border-bottom:1px solid #ffffff;"></div>
<div class="b" style="left:1025px;top:508px;width:119px;height:20px;background:#f8f8f8;border-top:1px solid #ffffff;border-bottom:1px solid #ffffff;"></div>
<div class="b" style="left:1145px;top:508px;width:157px;height:20px;background:#f8f8f8;border-top:1px solid #ffffff;border-bottom:1px solid #ffffff;"></div>
<div class="b" style="left:1303px;top:508px;width:114px;height:20px;background:#f8f8f8;border-top:1px solid #ffffff;border-bottom:1px solid #ffffff;"></div>
<div class="b" style="left:1419px;top:511px;width:49px;height:17px;background:#d7adad;"></div>
<div class="b" style="left:1469px;top:511px;width:88px;height:17px;background:#b0d4b0;"></div>
<div class="t" style="left:1422.00px;top:511.99px;font-size:13px;line-height:17px;font-family:'Liberation Sans',sans-serif;font-weight:normal;color:#000;">18</div>
<div class="t" style="left:1481.77px;top:511.99px;font-size:13px;line-height:17px;font-family:'Liberation Sans',sans-serif;font-weight:normal;color:#000;">32</div>
<div class="t" style="left:1545.77px;top:511.99px;font-size:13px;line-height:17px;font-family:'Liberation Sans',sans-serif;font-weight:normal;color:#000;">0</div>
<div class="b" style="left:1560px;top:511px;width:53px;height:17px;background:#d7adad;"></div>
<div class="b" style="left:1614px;top:511px;width:77px;height:17px;background:#b0d4b0;"></div>
<div class="b" style="left:1692px;top:511px;width:4px;height:17px;background:#b8c3ce;"></div>
<div class="t" style="left:1563.00px;top:511.99px;font-size:13px;line-height:17px;font-family:'Liberation Sans',sans-serif;font-weight:normal;color:#000;">28</div>
<div class="t" style="left:1621.77px;top:511.99px;font-size:13px;line-height:17px;font-family:'Liberation Sans',sans-serif;font-weight:normal;color:#000;">40</div>
<div class="t" style="left:1684.77px;top:511.99px;font-size:13px;line-height:17px;font-family:'Liberation Sans',sans-serif;font-weight:normal;color:#000;">2</div>
<div class="b" style="left:302px;top:528px;width:1395px;height:1px;background:#7d90a5;"></div>
<div class="t" style="left:363.34px;top:509.99px;font-size:13px;line-height:17px;font-family:'Liberation Sans',sans-serif;font-weight:normal;color:#000;">0.79</div>
<div class="t" style="left:473.34px;top:509.99px;font-size:13px;line-height:17px;font-family:'Liberation Sans',sans-serif;font-weight:normal;color:#000;">0.98</div>
<div class="t" style="left:545.00px;top:511.04px;font-size:13px;line-height:17px;font-family:'Liberation Mono',monospace;font-weight:normal;color:#000;transform:scaleX(1.0180);transform-origin:left center;">000000019C0B3FF0</div>
<div class="t" style="left:700.00px;top:511.04px;font-size:13px;line-height:17px;font-family:'Liberation Mono',monospace;font-weight:normal;color:#000;transform:scaleX(1.0162);transform-origin:left center;">sub_19C0B3FF0</div>
<div class="t" style="left:955.05px;top:509.99px;font-size:13px;line-height:17px;font-family:'Liberation Sans',sans-serif;font-weight:normal;color:#000;">Normal</div>
<div class="t" style="left:1029.00px;top:511.04px;font-size:13px;line-height:17px;font-family:'Liberation Mono',monospace;font-weight:normal;color:#000;transform:scaleX(1.0162);transform-origin:left center;">000000019C...</div>
<div class="t" style="left:1149.00px;top:511.04px;font-size:13px;line-height:17px;font-family:'Liberation Mono',monospace;font-weight:normal;color:#000;transform:scaleX(1.0162);transform-origin:left center;">sub_19C0B3FF8</div>
<div class="t" style="left:1340.05px;top:509.99px;font-size:13px;line-height:17px;font-family:'Liberation Sans',sans-serif;font-weight:normal;color:#000;">Normal</div>
<svg style="left:303px;top:511px" width="17" height="15" viewBox="0 0 17 15"><rect x="6.5" y="0.5" width="4" height="3" fill="#86cc70" stroke="#4a9a3a"/><path d="M8.5,4 V9" stroke="#8a8a8a"/><path d="M6.5,4.5 C4,5 3,6.5 2.5,8.5" stroke="#8a8a8a" stroke-dasharray="1.5,1" fill="none"/><path d="M10.5,4.5 C13,5 14,6.5 14.5,8.5" stroke="#777" stroke-dasharray="1.5,1" fill="none"/><path d="M1.5,8.5 h2 M7.5,8.5 h2 M13.5,8.5 h2" stroke="#8a8a8a"/><rect x="0.5" y="10.5" width="4" height="3" fill="#f0a4a4" stroke="#c86464"/><rect x="6.5" y="10.5" width="4" height="3" fill="#f2dc4a" stroke="#c0a020"/><rect x="12.5" y="10.5" width="4" height="3" fill="#78a4cc" stroke="#3f6f9f"/></svg>
<div class="b" style="left:302px;top:529px;width:18px;height:21px;background:#ffffff;"></div>
<div class="b" style="left:321px;top:529px;width:109px;height:20px;background:#cdd300;"></div>
<div class="b" style="left:431px;top:529px;width:109px;height:20px;background:#8ff500;"></div>
<div class="b" style="left:541px;top:529px;width:154px;height:20px;background:#f8f8f8;border-top:1px solid #ffffff;border-bottom:1px solid #ffffff;"></div>
<div class="b" style="left:696px;top:529px;width:232px;height:20px;background:#f8f8f8;border-top:1px solid #ffffff;border-bottom:1px solid #ffffff;"></div>
<div class="b" style="left:929px;top:529px;width:95px;height:20px;background:#f8f8f8;border-top:1px solid #ffffff;border-bottom:1px solid #ffffff;"></div>
<div class="b" style="left:1025px;top:529px;width:119px;height:20px;background:#f8f8f8;border-top:1px solid #ffffff;border-bottom:1px solid #ffffff;"></div>
<div class="b" style="left:1145px;top:529px;width:157px;height:20px;background:#f8f8f8;border-top:1px solid #ffffff;border-bottom:1px solid #ffffff;"></div>
<div class="b" style="left:1303px;top:529px;width:114px;height:20px;background:#f8f8f8;border-top:1px solid #ffffff;border-bottom:1px solid #ffffff;"></div>
<div class="b" style="left:1419px;top:532px;width:57px;height:17px;background:#d7adad;"></div>
<div class="b" style="left:1477px;top:532px;width:80px;height:17px;background:#b0d4b0;"></div>
<div class="t" style="left:1422.00px;top:532.99px;font-size:13px;line-height:17px;font-family:'Liberation Sans',sans-serif;font-weight:normal;color:#000;">23</div>
<div class="t" style="left:1481.77px;top:532.99px;font-size:13px;line-height:17px;font-family:'Liberation Sans',sans-serif;font-weight:normal;color:#000;">32</div>
<div class="t" style="left:1545.77px;top:532.99px;font-size:13px;line-height:17px;font-family:'Liberation Sans',sans-serif;font-weight:normal;color:#000;">0</div>
<div class="b" style="left:1560px;top:532px;width:65px;height:17px;background:#d7adad;"></div>
<div class="b" style="left:1626px;top:532px;width:56px;height:17px;background:#b0d4b0;"></div>
<div class="b" style="left:1683px;top:532px;width:13px;height:17px;background:#b8c3ce;"></div>
<div class="t" style="left:1563.00px;top:532.99px;font-size:13px;line-height:17px;font-family:'Liberation Sans',sans-serif;font-weight:normal;color:#000;">41</div>
<div class="t" style="left:1621.77px;top:532.99px;font-size:13px;line-height:17px;font-family:'Liberation Sans',sans-serif;font-weight:normal;color:#000;">36</div>
<div class="t" style="left:1684.77px;top:532.99px;font-size:13px;line-height:17px;font-family:'Liberation Sans',sans-serif;font-weight:normal;color:#000;">8</div>
<div class="b" style="left:302px;top:549px;width:1395px;height:1px;background:#7d90a5;"></div>
<div class="t" style="left:363.34px;top:530.99px;font-size:13px;line-height:17px;font-family:'Liberation Sans',sans-serif;font-weight:normal;color:#000;">0.76</div>
<div class="t" style="left:473.34px;top:530.99px;font-size:13px;line-height:17px;font-family:'Liberation Sans',sans-serif;font-weight:normal;color:#000;">0.98</div>
<div class="t" style="left:545.00px;top:532.04px;font-size:13px;line-height:17px;font-family:'Liberation Mono',monospace;font-weight:normal;color:#000;transform:scaleX(1.0180);transform-origin:left center;">000000019C0E86F8</div>
<div class="t" style="left:700.00px;top:532.04px;font-size:13px;line-height:17px;font-family:'Liberation Mono',monospace;font-weight:normal;color:#000;transform:scaleX(1.0162);transform-origin:left center;">sub_19C0E86F8</div>
<div class="t" style="left:955.05px;top:530.99px;font-size:13px;line-height:17px;font-family:'Liberation Sans',sans-serif;font-weight:normal;color:#000;">Normal</div>
<div class="t" style="left:1029.00px;top:532.04px;font-size:13px;line-height:17px;font-family:'Liberation Mono',monospace;font-weight:normal;color:#000;transform:scaleX(1.0162);transform-origin:left center;">000000019C...</div>
<div class="t" style="left:1149.00px;top:532.04px;font-size:13px;line-height:17px;font-family:'Liberation Mono',monospace;font-weight:normal;color:#000;transform:scaleX(1.0162);transform-origin:left center;">sub_19C0E86F8</div>
<div class="t" style="left:1340.05px;top:530.99px;font-size:13px;line-height:17px;font-family:'Liberation Sans',sans-serif;font-weight:normal;color:#000;">Normal</div>
<svg style="left:303px;top:532px" width="17" height="15" viewBox="0 0 17 15"><rect x="6.5" y="0.5" width="4" height="3" fill="#86cc70" stroke="#4a9a3a"/><path d="M8.5,4 V9" stroke="#8a8a8a"/><path d="M6.5,4.5 C4,5 3,6.5 2.5,8.5" stroke="#8a8a8a" stroke-dasharray="1.5,1" fill="none"/><path d="M10.5,4.5 C13,5 14,6.5 14.5,8.5" stroke="#777" stroke-dasharray="1.5,1" fill="none"/><path d="M1.5,8.5 h2 M7.5,8.5 h2 M13.5,8.5 h2" stroke="#8a8a8a"/><rect x="0.5" y="10.5" width="4" height="3" fill="#f0a4a4" stroke="#c86464"/><rect x="6.5" y="10.5" width="4" height="3" fill="#f2dc4a" stroke="#c0a020"/><rect x="12.5" y="10.5" width="4" height="3" fill="#78a4cc" stroke="#3f6f9f"/></svg>
<div class="b" style="left:302px;top:550px;width:18px;height:21px;background:#ffffff;"></div>
<div class="b" style="left:321px;top:550px;width:109px;height:20px;background:#cfd100;"></div>
<div class="b" style="left:431px;top:550px;width:109px;height:20px;background:#8ff500;"></div>
<div class="b" style="left:541px;top:550px;width:154px;height:20px;background:#f8f8f8;border-top:1px solid #ffffff;border-bottom:1px solid #ffffff;"></div>
<div class="b" style="left:696px;top:550px;width:232px;height:20px;background:#f8f8f8;border-top:1px solid #ffffff;border-bottom:1px solid #ffffff;"></div>
<div class="b" style="left:929px;top:550px;width:95px;height:20px;background:#f8f8f8;border-top:1px solid #ffffff;border-bottom:1px solid #ffffff;"></div>
<div class="b" style="left:1025px;top:550px;width:119px;height:20px;background:#f8f8f8;border-top:1px solid #ffffff;border-bottom:1px solid #ffffff;"></div>
<div class="b" style="left:1145px;top:550px;width:157px;height:20px;background:#f8f8f8;border-top:1px solid #ffffff;border-bottom:1px solid #ffffff;"></div>
<div class="b" style="left:1303px;top:550px;width:114px;height:20px;background:#f8f8f8;border-top:1px solid #ffffff;border-bottom:1px solid #ffffff;"></div>
<div class="b" style="left:1419px;top:553px;width:66px;height:17px;background:#b0d4b0;"></div>
<div class="b" style="left:1486px;top:553px;width:71px;height:17px;background:#b8c3ce;"></div>
<div class="t" style="left:1422.00px;top:553.99px;font-size:13px;line-height:17px;font-family:'Liberation Sans',sans-serif;font-weight:normal;color:#000;">0</div>
<div class="t" style="left:1481.77px;top:553.99px;font-size:13px;line-height:17px;font-family:'Liberation Sans',sans-serif;font-weight:normal;color:#000;">16</div>
<div class="t" style="left:1538.53px;top:553.99px;font-size:13px;line-height:17px;font-family:'Liberation Sans',sans-serif;font-weight:normal;color:#000;">17</div>
<div class="b" style="left:1560px;top:553px;width:58px;height:17px;background:#b0d4b0;"></div>
<div class="b" style="left:1619px;top:553px;width:77px;height:17px;background:#b8c3ce;"></div>
<div class="t" style="left:1563.00px;top:553.99px;font-size:13px;line-height:17px;font-family:'Liberation Sans',sans-serif;font-weight:normal;color:#000;">0</div>
<div class="t" style="left:1621.77px;top:553.99px;font-size:13px;line-height:17px;font-family:'Liberation Sans',sans-serif;font-weight:normal;color:#000;">19</div>
<div class="t" style="left:1677.53px;top:553.99px;font-size:13px;line-height:17px;font-family:'Liberation Sans',sans-serif;font-weight:normal;color:#000;">25</div>
<div class="b" style="left:302px;top:570px;width:1395px;height:1px;background:#7d90a5;"></div>
<div class="t" style="left:363.34px;top:551.99px;font-size:13px;line-height:17px;font-family:'Liberation Sans',sans-serif;font-weight:normal;color:#000;">0.75</div>
<div class="t" style="left:473.34px;top:551.99px;font-size:13px;line-height:17px;font-family:'Liberation Sans',sans-serif;font-weight:normal;color:#000;">0.99</div>
<div class="t" style="left:545.00px;top:553.04px;font-size:13px;line-height:17px;font-family:'Liberation Mono',monospace;font-weight:normal;color:#000;transform:scaleX(1.0180);transform-origin:left center;">000000019C0B44C4</div>
<div class="t" style="left:700.00px;top:553.04px;font-size:13px;line-height:17px;font-family:'Liberation Mono',monospace;font-weight:normal;color:#000;transform:scaleX(1.0162);transform-origin:left center;">sub_19C0B44C4</div>
<div class="t" style="left:955.05px;top:551.99px;font-size:13px;line-height:17px;font-family:'Liberation Sans',sans-serif;font-weight:normal;color:#000;">Normal</div>
<div class="t" style="left:1029.00px;top:553.04px;font-size:13px;line-height:17px;font-family:'Liberation Mono',monospace;font-weight:normal;color:#000;transform:scaleX(1.0162);transform-origin:left center;">000000019C...</div>
<div class="t" style="left:1149.00px;top:553.04px;font-size:13px;line-height:17px;font-family:'Liberation Mono',monospace;font-weight:normal;color:#000;transform:scaleX(1.0162);transform-origin:left center;">sub_19C0B44CC</div>
<div class="t" style="left:1340.05px;top:551.99px;font-size:13px;line-height:17px;font-family:'Liberation Sans',sans-serif;font-weight:normal;color:#000;">Normal</div>
<svg style="left:303px;top:553px" width="17" height="15" viewBox="0 0 17 15"><rect x="6.5" y="0.5" width="4" height="3" fill="#86cc70" stroke="#4a9a3a"/><path d="M8.5,4 V9" stroke="#8a8a8a"/><path d="M6.5,4.5 C4,5 3,6.5 2.5,8.5" stroke="#8a8a8a" stroke-dasharray="1.5,1" fill="none"/><path d="M10.5,4.5 C13,5 14,6.5 14.5,8.5" stroke="#777" stroke-dasharray="1.5,1" fill="none"/><path d="M1.5,8.5 h2 M7.5,8.5 h2 M13.5,8.5 h2" stroke="#8a8a8a"/><rect x="0.5" y="10.5" width="4" height="3" fill="#f0a4a4" stroke="#c86464"/><rect x="6.5" y="10.5" width="4" height="3" fill="#f2dc4a" stroke="#c0a020"/><rect x="12.5" y="10.5" width="4" height="3" fill="#78a4cc" stroke="#3f6f9f"/></svg>
<div class="b" style="left:302px;top:571px;width:18px;height:21px;background:#ffffff;"></div>
<div class="b" style="left:321px;top:571px;width:109px;height:20px;background:#d4ce00;"></div>
<div class="b" style="left:431px;top:571px;width:109px;height:20px;background:#8ff500;"></div>
<div class="b" style="left:541px;top:571px;width:154px;height:20px;background:#f8f8f8;border-top:1px solid #ffffff;border-bottom:1px solid #ffffff;"></div>
<div class="b" style="left:696px;top:571px;width:232px;height:20px;background:#f8f8f8;border-top:1px solid #ffffff;border-bottom:1px solid #ffffff;"></div>
<div class="b" style="left:929px;top:571px;width:95px;height:20px;background:#f8f8f8;border-top:1px solid #ffffff;border-bottom:1px solid #ffffff;"></div>
<div class="b" style="left:1025px;top:571px;width:119px;height:20px;background:#f8f8f8;border-top:1px solid #ffffff;border-bottom:1px solid #ffffff;"></div>
<div class="b" style="left:1145px;top:571px;width:157px;height:20px;background:#f8f8f8;border-top:1px solid #ffffff;border-bottom:1px solid #ffffff;"></div>
<div class="b" style="left:1303px;top:571px;width:114px;height:20px;background:#f8f8f8;border-top:1px solid #ffffff;border-bottom:1px solid #ffffff;"></div>
<div class="b" style="left:1419px;top:574px;width:61px;height:17px;background:#b0d4b0;"></div>
<div class="b" style="left:1481px;top:574px;width:76px;height:17px;background:#b8c3ce;"></div>
<div class="t" style="left:1422.00px;top:574.99px;font-size:13px;line-height:17px;font-family:'Liberation Sans',sans-serif;font-weight:normal;color:#000;">0</div>
<div class="t" style="left:1481.77px;top:574.99px;font-size:13px;line-height:17px;font-family:'Liberation Sans',sans-serif;font-weight:normal;color:#000;">14</div>
<div class="t" style="left:1538.53px;top:574.99px;font-size:13px;line-height:17px;font-family:'Liberation Sans',sans-serif;font-weight:normal;color:#000;">17</div>
<div class="b" style="left:1560px;top:574px;width:54px;height:17px;background:#b0d4b0;"></div>
<div class="b" style="left:1615px;top:574px;width:81px;height:17px;background:#b8c3ce;"></div>
<div class="t" style="left:1563.00px;top:574.99px;font-size:13px;line-height:17px;font-family:'Liberation Sans',sans-serif;font-weight:normal;color:#000;">0</div>
<div class="t" style="left:1621.77px;top:574.99px;font-size:13px;line-height:17px;font-family:'Liberation Sans',sans-serif;font-weight:normal;color:#000;">17</div>
<div class="t" style="left:1677.53px;top:574.99px;font-size:13px;line-height:17px;font-family:'Liberation Sans',sans-serif;font-weight:normal;color:#000;">25</div>
<div class="b" style="left:302px;top:591px;width:1395px;height:1px;background:#7d90a5;"></div>
<div class="t" style="left:363.34px;top:572.99px;font-size:13px;line-height:17px;font-family:'Liberation Sans',sans-serif;font-weight:normal;color:#000;">0.73</div>
<div class="t" style="left:473.34px;top:572.99px;font-size:13px;line-height:17px;font-family:'Liberation Sans',sans-serif;font-weight:normal;color:#000;">0.99</div>
<div class="t" style="left:545.00px;top:574.04px;font-size:13px;line-height:17px;font-family:'Liberation Mono',monospace;font-weight:normal;color:#000;transform:scaleX(1.0180);transform-origin:left center;">000000019C0B4510</div>
<div class="t" style="left:700.00px;top:574.04px;font-size:13px;line-height:17px;font-family:'Liberation Mono',monospace;font-weight:normal;color:#000;transform:scaleX(1.0162);transform-origin:left center;">sub_19C0B4510</div>
<div class="t" style="left:955.05px;top:572.99px;font-size:13px;line-height:17px;font-family:'Liberation Sans',sans-serif;font-weight:normal;color:#000;">Normal</div>
<div class="t" style="left:1029.00px;top:574.04px;font-size:13px;line-height:17px;font-family:'Liberation Mono',monospace;font-weight:normal;color:#000;transform:scaleX(1.0162);transform-origin:left center;">000000019C...</div>
<div class="t" style="left:1149.00px;top:574.04px;font-size:13px;line-height:17px;font-family:'Liberation Mono',monospace;font-weight:normal;color:#000;transform:scaleX(1.0162);transform-origin:left center;">sub_19C0B4518</div>
<div class="t" style="left:1340.05px;top:572.99px;font-size:13px;line-height:17px;font-family:'Liberation Sans',sans-serif;font-weight:normal;color:#000;">Normal</div>
<svg style="left:303px;top:574px" width="17" height="15" viewBox="0 0 17 15"><rect x="6.5" y="0.5" width="4" height="3" fill="#86cc70" stroke="#4a9a3a"/><path d="M8.5,4 V9" stroke="#8a8a8a"/><path d="M6.5,4.5 C4,5 3,6.5 2.5,8.5" stroke="#8a8a8a" stroke-dasharray="1.5,1" fill="none"/><path d="M10.5,4.5 C13,5 14,6.5 14.5,8.5" stroke="#777" stroke-dasharray="1.5,1" fill="none"/><path d="M1.5,8.5 h2 M7.5,8.5 h2 M13.5,8.5 h2" stroke="#8a8a8a"/><rect x="0.5" y="10.5" width="4" height="3" fill="#f0a4a4" stroke="#c86464"/><rect x="6.5" y="10.5" width="4" height="3" fill="#f2dc4a" stroke="#c0a020"/><rect x="12.5" y="10.5" width="4" height="3" fill="#78a4cc" stroke="#3f6f9f"/></svg>
<div class="b" style="left:302px;top:592px;width:18px;height:21px;background:#ffffff;"></div>
<div class="b" style="left:321px;top:592px;width:109px;height:20px;background:#c8cb94;"></div>
<div class="b" style="left:431px;top:592px;width:109px;height:20px;background:#a9dc8a;"></div>
<div class="b" style="left:541px;top:592px;width:154px;height:20px;background:#d4e1ee;border-top:1px solid #ffffff;border-bottom:1px solid #ffffff;"></div>
<div class="b" style="left:696px;top:592px;width:232px;height:20px;background:#d4e1ee;border-top:1px solid #ffffff;border-bottom:1px solid #ffffff;"></div>
<div class="b" style="left:929px;top:592px;width:95px;height:20px;background:#d4e1ee;border-top:1px solid #ffffff;border-bottom:1px solid #ffffff;"></div>
<div class="b" style="left:1025px;top:592px;width:119px;height:20px;background:#d4e1ee;border-top:1px solid #ffffff;border-bottom:1px solid #ffffff;"></div>
<div class="b" style="left:1145px;top:592px;width:157px;height:20px;background:#d4e1ee;border-top:1px solid #ffffff;border-bottom:1px solid #ffffff;"></div>
<div class="b" style="left:1303px;top:592px;width:114px;height:20px;background:#d4e1ee;border-top:1px solid #ffffff;border-bottom:1px solid #ffffff;"></div>
<div class="b" style="left:321px;top:592px;width:109px;height:20px;border:1px solid #c4d6ec;"></div>
<div class="b" style="left:431px;top:592px;width:109px;height:20px;border:1px solid #c4d6ec;"></div>
<div class="b" style="left:541px;top:592px;width:154px;height:20px;border:1px solid #c4d6ec;"></div>
<div class="b" style="left:696px;top:592px;width:232px;height:20px;border:1px solid #c4d6ec;"></div>
<div class="b" style="left:929px;top:592px;width:95px;height:20px;border:1px solid #c4d6ec;"></div>
<div class="b" style="left:1025px;top:592px;width:119px;height:20px;border:1px solid #c4d6ec;"></div>
<div class="b" style="left:1145px;top:592px;width:157px;height:20px;border:1px solid #c4d6ec;"></div>
<div class="b" style="left:1303px;top:592px;width:114px;height:20px;border:1px solid #c4d6ec;"></div>
<div class="b" style="left:1418px;top:592px;width:140px;height:20px;border:1px solid #c4d6ec;"></div>
<div class="b" style="left:1559px;top:592px;width:138px;height:20px;border:1px solid #c4d6ec;"></div>
<div class="b" style="left:1419px;top:595px;width:77px;height:17px;background:#c8c0cc;"></div>
<div class="b" style="left:1497px;top:595px;width:60px;height:17px;background:#b6d0d0;"></div>
<div class="t" style="left:1422.00px;top:595.99px;font-size:13px;line-height:17px;font-family:'Liberation Sans',sans-serif;font-weight:bold;color:#000;">9</div>
<div class="t" style="left:1485.38px;top:595.99px;font-size:13px;line-height:17px;font-family:'Liberation Sans',sans-serif;font-weight:bold;color:#000;">7</div>
<div class="t" style="left:1545.77px;top:595.99px;font-size:13px;line-height:17px;font-family:'Liberation Sans',sans-serif;font-weight:bold;color:#000;">0</div>
<div class="b" style="left:1560px;top:595px;width:86px;height:17px;background:#c8c0cc;"></div>
<div class="b" style="left:1647px;top:595px;width:32px;height:17px;background:#b6d0d0;"></div>
<div class="b" style="left:1680px;top:595px;width:16px;height:17px;background:#bacadc;"></div>
<div class="t" style="left:1563.00px;top:595.99px;font-size:13px;line-height:17px;font-family:'Liberation Sans',sans-serif;font-weight:bold;color:#000;">16</div>
<div class="t" style="left:1625.38px;top:595.99px;font-size:13px;line-height:17px;font-family:'Liberation Sans',sans-serif;font-weight:bold;color:#000;">6</div>
<div class="t" style="left:1684.77px;top:595.99px;font-size:13px;line-height:17px;font-family:'Liberation Sans',sans-serif;font-weight:bold;color:#000;">3</div>
<div class="b" style="left:302px;top:612px;width:1395px;height:1px;background:#7d90a5;"></div>
<div class="t" style="left:363.34px;top:593.99px;font-size:13px;line-height:17px;font-family:'Liberation Sans',sans-serif;font-weight:bold;color:#000;">0.66</div>
<div class="t" style="left:473.34px;top:593.99px;font-size:13px;line-height:17px;font-family:'Liberation Sans',sans-serif;font-weight:bold;color:#000;">0.98</div>
<div class="t" style="left:545.00px;top:595.04px;font-size:13px;line-height:17px;font-family:'Liberation Mono',monospace;font-weight:bold;color:#000;transform:scaleX(1.0261);transform-origin:left center;">000000019C085CA0</div>
<div class="t" style="left:700.00px;top:595.04px;font-size:13px;line-height:17px;font-family:'Liberation Mono',monospace;font-weight:bold;color:#000;transform:scaleX(1.0162);transform-origin:left center;">sub_19C085CA0</div>
<div class="t" style="left:953.60px;top:593.99px;font-size:13px;line-height:17px;font-family:'Liberation Sans',sans-serif;font-weight:bold;color:#000;">Normal</div>
<div class="t" style="left:1029.00px;top:595.04px;font-size:13px;line-height:17px;font-family:'Liberation Mono',monospace;font-weight:bold;color:#000;transform:scaleX(1.0162);transform-origin:left center;">000000019C...</div>
<div class="t" style="left:1149.00px;top:595.04px;font-size:13px;line-height:17px;font-family:'Liberation Mono',monospace;font-weight:bold;color:#000;transform:scaleX(1.0162);transform-origin:left center;">sub_19C085D20</div>
<div class="t" style="left:1338.60px;top:593.99px;font-size:13px;line-height:17px;font-family:'Liberation Sans',sans-serif;font-weight:bold;color:#000;">Normal</div>
<svg style="left:303px;top:595px" width="17" height="15" viewBox="0 0 17 15"><rect x="6.5" y="0.5" width="4" height="3" fill="#86cc70" stroke="#4a9a3a"/><path d="M8.5,4 V9" stroke="#8a8a8a"/><path d="M6.5,4.5 C4,5 3,6.5 2.5,8.5" stroke="#8a8a8a" stroke-dasharray="1.5,1" fill="none"/><path d="M10.5,4.5 C13,5 14,6.5 14.5,8.5" stroke="#777" stroke-dasharray="1.5,1" fill="none"/><path d="M1.5,8.5 h2 M7.5,8.5 h2 M13.5,8.5 h2" stroke="#8a8a8a"/><rect x="0.5" y="10.5" width="4" height="3" fill="#f0a4a4" stroke="#c86464"/><rect x="6.5" y="10.5" width="4" height="3" fill="#f2dc4a" stroke="#c0a020"/><rect x="12.5" y="10.5" width="4" height="3" fill="#78a4cc" stroke="#3f6f9f"/></svg>
<div class="b" style="left:302px;top:613px;width:18px;height:21px;background:#ffffff;"></div>
<div class="b" style="left:321px;top:613px;width:109px;height:20px;background:#ddbf03;"></div>
<div class="b" style="left:431px;top:613px;width:109px;height:20px;background:#8ff500;"></div>
<div class="b" style="left:541px;top:613px;width:154px;height:20px;background:#f8f8f8;border-top:1px solid #ffffff;border-bottom:1px solid #ffffff;"></div>
<div class="b" style="left:696px;top:613px;width:232px;height:20px;background:#f8f8f8;border-top:1px solid #ffffff;border-bottom:1px solid #ffffff;"></div>
<div class="b" style="left:929px;top:613px;width:95px;height:20px;background:#f8f8f8;border-top:1px solid #ffffff;border-bottom:1px solid #ffffff;"></div>
<div class="b" style="left:1025px;top:613px;width:119px;height:20px;background:#f8f8f8;border-top:1px solid #ffffff;border-bottom:1px solid #ffffff;"></div>
<div class="b" style="left:1145px;top:613px;width:157px;height:20px;background:#f8f8f8;border-top:1px solid #ffffff;border-bottom:1px solid #ffffff;"></div>
<div class="b" style="left:1303px;top:613px;width:114px;height:20px;background:#f8f8f8;border-top:1px solid #ffffff;border-bottom:1px solid #ffffff;"></div>
<div class="b" style="left:1419px;top:616px;width:82px;height:17px;background:#d7adad;"></div>
<div class="b" style="left:1502px;top:616px;width:55px;height:17px;background:#b0d4b0;"></div>
<div class="t" style="left:1422.00px;top:616.99px;font-size:13px;line-height:17px;font-family:'Liberation Sans',sans-serif;font-weight:normal;color:#000;">9</div>
<div class="t" style="left:1485.38px;top:616.99px;font-size:13px;line-height:17px;font-family:'Liberation Sans',sans-serif;font-weight:normal;color:#000;">6</div>
<div class="t" style="left:1545.77px;top:616.99px;font-size:13px;line-height:17px;font-family:'Liberation Sans',sans-serif;font-weight:normal;color:#000;">0</div>
<div class="b" style="left:1560px;top:616px;width:90px;height:17px;background:#d7adad;"></div>
<div class="b" style="left:1651px;top:616px;width:27px;height:17px;background:#b0d4b0;"></div>
<div class="b" style="left:1679px;top:616px;width:17px;height:17px;background:#b8c3ce;"></div>
<div class="t" style="left:1563.00px;top:616.99px;font-size:13px;line-height:17px;font-family:'Liberation Sans',sans-serif;font-weight:normal;color:#000;">16</div>
<div class="t" style="left:1625.38px;top:616.99px;font-size:13px;line-height:17px;font-family:'Liberation Sans',sans-serif;font-weight:normal;color:#000;">5</div>
<div class="t" style="left:1684.77px;top:616.99px;font-size:13px;line-height:17px;font-family:'Liberation Sans',sans-serif;font-weight:normal;color:#000;">3</div>
<div class="b" style="left:302px;top:633px;width:1395px;height:1px;background:#7d90a5;"></div>
<div class="t" style="left:363.34px;top:614.99px;font-size:13px;line-height:17px;font-family:'Liberation Sans',sans-serif;font-weight:normal;color:#000;">0.63</div>
<div class="t" style="left:473.34px;top:614.99px;font-size:13px;line-height:17px;font-family:'Liberation Sans',sans-serif;font-weight:normal;color:#000;">0.98</div>
<div class="t" style="left:545.00px;top:616.04px;font-size:13px;line-height:17px;font-family:'Liberation Mono',monospace;font-weight:normal;color:#000;transform:scaleX(1.0180);transform-origin:left center;">000000019C085CB4</div>
<div class="t" style="left:700.00px;top:616.04px;font-size:13px;line-height:17px;font-family:'Liberation Mono',monospace;font-weight:normal;color:#000;transform:scaleX(1.0162);transform-origin:left center;">sub_19C085CB4</div>
<div class="t" style="left:955.05px;top:614.99px;font-size:13px;line-height:17px;font-family:'Liberation Sans',sans-serif;font-weight:normal;color:#000;">Normal</div>
<div class="t" style="left:1029.00px;top:616.04px;font-size:13px;line-height:17px;font-family:'Liberation Mono',monospace;font-weight:normal;color:#000;transform:scaleX(1.0162);transform-origin:left center;">000000019C...</div>
<div class="t" style="left:1149.00px;top:616.04px;font-size:13px;line-height:17px;font-family:'Liberation Mono',monospace;font-weight:normal;color:#000;transform:scaleX(1.0162);transform-origin:left center;">sub_19C085D34</div>
<div class="t" style="left:1340.05px;top:614.99px;font-size:13px;line-height:17px;font-family:'Liberation Sans',sans-serif;font-weight:normal;color:#000;">Normal</div>
<svg style="left:303px;top:616px" width="17" height="15" viewBox="0 0 17 15"><rect x="6.5" y="0.5" width="4" height="3" fill="#86cc70" stroke="#4a9a3a"/><path d="M8.5,4 V9" stroke="#8a8a8a"/><path d="M6.5,4.5 C4,5 3,6.5 2.5,8.5" stroke="#8a8a8a" stroke-dasharray="1.5,1" fill="none"/><path d="M10.5,4.5 C13,5 14,6.5 14.5,8.5" stroke="#777" stroke-dasharray="1.5,1" fill="none"/><path d="M1.5,8.5 h2 M7.5,8.5 h2 M13.5,8.5 h2" stroke="#8a8a8a"/><rect x="0.5" y="10.5" width="4" height="3" fill="#f0a4a4" stroke="#c86464"/><rect x="6.5" y="10.5" width="4" height="3" fill="#f2dc4a" stroke="#c0a020"/><rect x="12.5" y="10.5" width="4" height="3" fill="#78a4cc" stroke="#3f6f9f"/></svg>
<div class="b" style="left:302px;top:634px;width:18px;height:21px;background:#ffffff;"></div>
<div class="b" style="left:321px;top:634px;width:109px;height:20px;background:#e0b60a;"></div>
<div class="b" style="left:431px;top:634px;width:109px;height:20px;background:#8ff500;"></div>
<div class="b" style="left:541px;top:634px;width:154px;height:20px;background:#f8f8f8;border-top:1px solid #ffffff;border-bottom:1px solid #ffffff;"></div>
<div class="b" style="left:696px;top:634px;width:232px;height:20px;background:#f8f8f8;border-top:1px solid #ffffff;border-bottom:1px solid #ffffff;"></div>
<div class="b" style="left:929px;top:634px;width:95px;height:20px;background:#f8f8f8;border-top:1px solid #ffffff;border-bottom:1px solid #ffffff;"></div>
<div class="b" style="left:1025px;top:634px;width:119px;height:20px;background:#f8f8f8;border-top:1px solid #ffffff;border-bottom:1px solid #ffffff;"></div>
<div class="b" style="left:1145px;top:634px;width:157px;height:20px;background:#f8f8f8;border-top:1px solid #ffffff;border-bottom:1px solid #ffffff;"></div>
<div class="b" style="left:1303px;top:634px;width:114px;height:20px;background:#f8f8f8;border-top:1px solid #ffffff;border-bottom:1px solid #ffffff;"></div>
<div class="b" style="left:1419px;top:637px;width:88px;height:17px;background:#d7adad;"></div>
<div class="b" style="left:1508px;top:637px;width:49px;height:17px;background:#b0d4b0;"></div>
<div class="t" style="left:1422.00px;top:637.99px;font-size:13px;line-height:17px;font-family:'Liberation Sans',sans-serif;font-weight:normal;color:#000;">9</div>
<div class="t" style="left:1485.38px;top:637.99px;font-size:13px;line-height:17px;font-family:'Liberation Sans',sans-serif;font-weight:normal;color:#000;">5</div>
<div class="t" style="left:1545.77px;top:637.99px;font-size:13px;line-height:17px;font-family:'Liberation Sans',sans-serif;font-weight:normal;color:#000;">0</div>
<div class="b" style="left:1560px;top:637px;width:94px;height:17px;background:#d7adad;"></div>
<div class="b" style="left:1655px;top:637px;width:22px;height:17px;background:#b0d4b0;"></div>
<div class="b" style="left:1678px;top:637px;width:18px;height:17px;background:#b8c3ce;"></div>
<div class="t" style="left:1563.00px;top:637.99px;font-size:13px;line-height:17px;font-family:'Liberation Sans',sans-serif;font-weight:normal;color:#000;">16</div>
<div class="t" style="left:1625.38px;top:637.99px;font-size:13px;line-height:17px;font-family:'Liberation Sans',sans-serif;font-weight:normal;color:#000;">4</div>
<div class="t" style="left:1684.77px;top:637.99px;font-size:13px;line-height:17px;font-family:'Liberation Sans',sans-serif;font-weight:normal;color:#000;">3</div>
<div class="b" style="left:302px;top:654px;width:1395px;height:1px;background:#7d90a5;"></div>
<div class="t" style="left:363.34px;top:635.99px;font-size:13px;line-height:17px;font-family:'Liberation Sans',sans-serif;font-weight:normal;color:#000;">0.59</div>
<div class="t" style="left:473.34px;top:635.99px;font-size:13px;line-height:17px;font-family:'Liberation Sans',sans-serif;font-weight:normal;color:#000;">0.97</div>
<div class="t" style="left:545.00px;top:637.04px;font-size:13px;line-height:17px;font-family:'Liberation Mono',monospace;font-weight:normal;color:#000;transform:scaleX(1.0180);transform-origin:left center;">000000019C085D28</div>
<div class="t" style="left:700.00px;top:637.04px;font-size:13px;line-height:17px;font-family:'Liberation Mono',monospace;font-weight:normal;color:#000;transform:scaleX(1.0162);transform-origin:left center;">sub_19C085D28</div>
<div class="t" style="left:955.05px;top:635.99px;font-size:13px;line-height:17px;font-family:'Liberation Sans',sans-serif;font-weight:normal;color:#000;">Normal</div>
<div class="t" style="left:1029.00px;top:637.04px;font-size:13px;line-height:17px;font-family:'Liberation Mono',monospace;font-weight:normal;color:#000;transform:scaleX(1.0162);transform-origin:left center;">000000019C...</div>
<div class="t" style="left:1149.00px;top:637.04px;font-size:13px;line-height:17px;font-family:'Liberation Mono',monospace;font-weight:normal;color:#000;transform:scaleX(1.0162);transform-origin:left center;">sub_19C085DA8</div>
<div class="t" style="left:1340.05px;top:635.99px;font-size:13px;line-height:17px;font-family:'Liberation Sans',sans-serif;font-weight:normal;color:#000;">Normal</div>
<svg style="left:303px;top:637px" width="17" height="15" viewBox="0 0 17 15"><rect x="6.5" y="0.5" width="4" height="3" fill="#86cc70" stroke="#4a9a3a"/><path d="M8.5,4 V9" stroke="#8a8a8a"/><path d="M6.5,4.5 C4,5 3,6.5 2.5,8.5" stroke="#8a8a8a" stroke-dasharray="1.5,1" fill="none"/><path d="M10.5,4.5 C13,5 14,6.5 14.5,8.5" stroke="#777" stroke-dasharray="1.5,1" fill="none"/><path d="M1.5,8.5 h2 M7.5,8.5 h2 M13.5,8.5 h2" stroke="#8a8a8a"/><rect x="0.5" y="10.5" width="4" height="3" fill="#f0a4a4" stroke="#c86464"/><rect x="6.5" y="10.5" width="4" height="3" fill="#f2dc4a" stroke="#c0a020"/><rect x="12.5" y="10.5" width="4" height="3" fill="#78a4cc" stroke="#3f6f9f"/></svg>
<div class="b" style="left:302px;top:655px;width:18px;height:21px;background:#ffffff;"></div>
<div class="b" style="left:321px;top:655px;width:109px;height:20px;background:#e6aa12;"></div>
<div class="b" style="left:431px;top:655px;width:109px;height:20px;background:#8ff500;"></div>
<div class="b" style="left:541px;top:655px;width:154px;height:20px;background:#f8f8f8;border-top:1px solid #ffffff;border-bottom:1px solid #ffffff;"></div>
<div class="b" style="left:696px;top:655px;width:232px;height:20px;background:#f8f8f8;border-top:1px solid #ffffff;border-bottom:1px solid #ffffff;"></div>
<div class="b" style="left:929px;top:655px;width:95px;height:20px;background:#f8f8f8;border-top:1px solid #ffffff;border-bottom:1px solid #ffffff;"></div>
<div class="b" style="left:1025px;top:655px;width:119px;height:20px;background:#f8f8f8;border-top:1px solid #ffffff;border-bottom:1px solid #ffffff;"></div>
<div class="b" style="left:1145px;top:655px;width:157px;height:20px;background:#f8f8f8;border-top:1px solid #ffffff;border-bottom:1px solid #ffffff;"></div>
<div class="b" style="left:1303px;top:655px;width:114px;height:20px;background:#f8f8f8;border-top:1px solid #ffffff;border-bottom:1px solid #ffffff;"></div>
<div class="b" style="left:1419px;top:658px;width:25px;height:17px;background:#b0d4b0;"></div>
<div class="b" style="left:1445px;top:658px;width:112px;height:17px;background:#b8c3ce;"></div>
<div class="t" style="left:1422.00px;top:658.99px;font-size:13px;line-height:17px;font-family:'Liberation Sans',sans-serif;font-weight:normal;color:#000;">0</div>
<div class="t" style="left:1485.38px;top:658.99px;font-size:13px;line-height:17px;font-family:'Liberation Sans',sans-serif;font-weight:normal;color:#000;">4</div>
<div class="t" style="left:1538.53px;top:658.99px;font-size:13px;line-height:17px;font-family:'Liberation Sans',sans-serif;font-weight:normal;color:#000;">17</div>
<div class="b" style="left:1560px;top:658px;width:14px;height:17px;background:#b0d4b0;"></div>
<div class="b" style="left:1575px;top:658px;width:121px;height:17px;background:#b8c3ce;"></div>
<div class="t" style="left:1563.00px;top:658.99px;font-size:13px;line-height:17px;font-family:'Liberation Sans',sans-serif;font-weight:normal;color:#000;">0</div>
<div class="t" style="left:1625.38px;top:658.99px;font-size:13px;line-height:17px;font-family:'Liberation Sans',sans-serif;font-weight:normal;color:#000;">3</div>
<div class="t" style="left:1677.53px;top:658.99px;font-size:13px;line-height:17px;font-family:'Liberation Sans',sans-serif;font-weight:normal;color:#000;">25</div>
<div class="b" style="left:302px;top:675px;width:1395px;height:1px;background:#7d90a5;"></div>
<div class="t" style="left:363.34px;top:656.99px;font-size:13px;line-height:17px;font-family:'Liberation Sans',sans-serif;font-weight:normal;color:#000;">0.51</div>
<div class="t" style="left:473.34px;top:656.99px;font-size:13px;line-height:17px;font-family:'Liberation Sans',sans-serif;font-weight:normal;color:#000;">0.99</div>
<div class="t" style="left:545.00px;top:658.04px;font-size:13px;line-height:17px;font-family:'Liberation Mono',monospace;font-weight:normal;color:#000;transform:scaleX(1.0180);transform-origin:left center;">000000019C0B4570</div>
<div class="t" style="left:700.00px;top:658.04px;font-size:13px;line-height:17px;font-family:'Liberation Mono',monospace;font-weight:normal;color:#000;transform:scaleX(1.0162);transform-origin:left center;">sub_19C0B4570</div>
<div class="t" style="left:955.05px;top:656.99px;font-size:13px;line-height:17px;font-family:'Liberation Sans',sans-serif;font-weight:normal;color:#000;">Normal</div>
<div class="t" style="left:1029.00px;top:658.04px;font-size:13px;line-height:17px;font-family:'Liberation Mono',monospace;font-weight:normal;color:#000;transform:scaleX(1.0162);transform-origin:left center;">000000019C...</div>
<div class="t" style="left:1149.00px;top:658.04px;font-size:13px;line-height:17px;font-family:'Liberation Mono',monospace;font-weight:normal;color:#000;transform:scaleX(1.0162);transform-origin:left center;">sub_19C0B4578</div>
<div class="t" style="left:1340.05px;top:656.99px;font-size:13px;line-height:17px;font-family:'Liberation Sans',sans-serif;font-weight:normal;color:#000;">Normal</div>
<svg style="left:303px;top:658px" width="17" height="15" viewBox="0 0 17 15"><rect x="6.5" y="0.5" width="4" height="3" fill="#86cc70" stroke="#4a9a3a"/><path d="M8.5,4 V9" stroke="#8a8a8a"/><path d="M6.5,4.5 C4,5 3,6.5 2.5,8.5" stroke="#8a8a8a" stroke-dasharray="1.5,1" fill="none"/><path d="M10.5,4.5 C13,5 14,6.5 14.5,8.5" stroke="#777" stroke-dasharray="1.5,1" fill="none"/><path d="M1.5,8.5 h2 M7.5,8.5 h2 M13.5,8.5 h2" stroke="#8a8a8a"/><rect x="0.5" y="10.5" width="4" height="3" fill="#f0a4a4" stroke="#c86464"/><rect x="6.5" y="10.5" width="4" height="3" fill="#f2dc4a" stroke="#c0a020"/><rect x="12.5" y="10.5" width="4" height="3" fill="#78a4cc" stroke="#3f6f9f"/></svg>
<div class="b" style="left:302px;top:676px;width:18px;height:21px;background:#ffffff;"></div>
<div class="b" style="left:321px;top:676px;width:109px;height:20px;background:#eba516;"></div>
<div class="b" style="left:431px;top:676px;width:109px;height:20px;background:#8ff500;"></div>
<div class="b" style="left:541px;top:676px;width:154px;height:20px;background:#f8f8f8;border-top:1px solid #ffffff;border-bottom:1px solid #ffffff;"></div>
<div class="b" style="left:696px;top:676px;width:232px;height:20px;background:#f8f8f8;border-top:1px solid #ffffff;border-bottom:1px solid #ffffff;"></div>
<div class="b" style="left:929px;top:676px;width:95px;height:20px;background:#f8f8f8;border-top:1px solid #ffffff;border-bottom:1px solid #ffffff;"></div>
<div class="b" style="left:1025px;top:676px;width:119px;height:20px;background:#f8f8f8;border-top:1px solid #ffffff;border-bottom:1px solid #ffffff;"></div>
<div class="b" style="left:1145px;top:676px;width:157px;height:20px;background:#f8f8f8;border-top:1px solid #ffffff;border-bottom:1px solid #ffffff;"></div>
<div class="b" style="left:1303px;top:676px;width:114px;height:20px;background:#f8f8f8;border-top:1px solid #ffffff;border-bottom:1px solid #ffffff;"></div>
<div class="b" style="left:1419px;top:679px;width:112px;height:17px;background:#d7adad;"></div>
<div class="b" style="left:1532px;top:679px;width:22px;height:17px;background:#b0d4b0;"></div>
<div class="b" style="left:1555px;top:679px;width:2px;height:17px;background:#b8c3ce;"></div>
<div class="t" style="left:1422.00px;top:679.99px;font-size:13px;line-height:17px;font-family:'Liberation Sans',sans-serif;font-weight:normal;color:#000;">243</div>
<div class="t" style="left:1481.77px;top:679.99px;font-size:13px;line-height:17px;font-family:'Liberation Sans',sans-serif;font-weight:normal;color:#000;">50</div>
<div class="t" style="left:1545.77px;top:679.99px;font-size:13px;line-height:17px;font-family:'Liberation Sans',sans-serif;font-weight:normal;color:#000;">5</div>
<div class="b" style="left:1560px;top:679px;width:112px;height:17px;background:#d7adad;"></div>
<div class="b" style="left:1673px;top:679px;width:18px;height:17px;background:#b0d4b0;"></div>
<div class="b" style="left:1692px;top:679px;width:4px;height:17px;background:#b8c3ce;"></div>
<div class="t" style="left:1563.00px;top:679.99px;font-size:13px;line-height:17px;font-family:'Liberation Sans',sans-serif;font-weight:normal;color:#000;">362</div>
<div class="t" style="left:1621.77px;top:679.99px;font-size:13px;line-height:17px;font-family:'Liberation Sans',sans-serif;font-weight:normal;color:#000;">61</div>
<div class="t" style="left:1677.53px;top:679.99px;font-size:13px;line-height:17px;font-family:'Liberation Sans',sans-serif;font-weight:normal;color:#000;">14</div>
<div class="b" style="left:302px;top:696px;width:1395px;height:1px;background:#7d90a5;"></div>
<div class="t" style="left:363.34px;top:677.99px;font-size:13px;line-height:17px;font-family:'Liberation Sans',sans-serif;font-weight:normal;color:#000;">0.46</div>
<div class="t" style="left:473.34px;top:677.99px;font-size:13px;line-height:17px;font-family:'Liberation Sans',sans-serif;font-weight:normal;color:#000;">0.98</div>
<div class="t" style="left:545.00px;top:679.04px;font-size:13px;line-height:17px;font-family:'Liberation Mono',monospace;font-weight:normal;color:#000;transform:scaleX(1.0180);transform-origin:left center;">000000019C05A1E4</div>
<div class="t" style="left:700.00px;top:679.04px;font-size:13px;line-height:17px;font-family:'Liberation Mono',monospace;font-weight:normal;color:#000;transform:scaleX(1.0162);transform-origin:left center;">sub_19C05A1E4</div>
<div class="t" style="left:955.05px;top:677.99px;font-size:13px;line-height:17px;font-family:'Liberation Sans',sans-serif;font-weight:normal;color:#000;">Normal</div>
<div class="t" style="left:1029.00px;top:679.04px;font-size:13px;line-height:17px;font-family:'Liberation Mono',monospace;font-weight:normal;color:#000;transform:scaleX(1.0162);transform-origin:left center;">000000019C...</div>
<div class="t" style="left:1149.00px;top:679.04px;font-size:13px;line-height:17px;font-family:'Liberation Mono',monospace;font-weight:normal;color:#000;transform:scaleX(1.0162);transform-origin:left center;">sub_19C05A274</div>
<div class="t" style="left:1340.05px;top:677.99px;font-size:13px;line-height:17px;font-family:'Liberation Sans',sans-serif;font-weight:normal;color:#000;">Normal</div>
<svg style="left:303px;top:679px" width="17" height="15" viewBox="0 0 17 15"><rect x="6.5" y="0.5" width="4" height="3" fill="#86cc70" stroke="#4a9a3a"/><path d="M8.5,4 V9" stroke="#8a8a8a"/><path d="M6.5,4.5 C4,5 3,6.5 2.5,8.5" stroke="#8a8a8a" stroke-dasharray="1.5,1" fill="none"/><path d="M10.5,4.5 C13,5 14,6.5 14.5,8.5" stroke="#777" stroke-dasharray="1.5,1" fill="none"/><path d="M1.5,8.5 h2 M7.5,8.5 h2 M13.5,8.5 h2" stroke="#8a8a8a"/><rect x="0.5" y="10.5" width="4" height="3" fill="#f0a4a4" stroke="#c86464"/><rect x="6.5" y="10.5" width="4" height="3" fill="#f2dc4a" stroke="#c0a020"/><rect x="12.5" y="10.5" width="4" height="3" fill="#78a4cc" stroke="#3f6f9f"/></svg>
<div class="b" style="left:302px;top:697px;width:18px;height:21px;background:#ffffff;"></div>
<div class="b" style="left:321px;top:697px;width:109px;height:20px;background:#eba516;"></div>
<div class="b" style="left:431px;top:697px;width:109px;height:20px;background:#8ff500;"></div>
<div class="b" style="left:541px;top:697px;width:154px;height:20px;background:#f8f8f8;border-top:1px solid #ffffff;border-bottom:1px solid #ffffff;"></div>
<div class="b" style="left:696px;top:697px;width:232px;height:20px;background:#f8f8f8;border-top:1px solid #ffffff;border-bottom:1px solid #ffffff;"></div>
<div class="b" style="left:929px;top:697px;width:95px;height:20px;background:#f8f8f8;border-top:1px solid #ffffff;border-bottom:1px solid #ffffff;"></div>
<div class="b" style="left:1025px;top:697px;width:119px;height:20px;background:#f8f8f8;border-top:1px solid #ffffff;border-bottom:1px solid #ffffff;"></div>
<div class="b" style="left:1145px;top:697px;width:157px;height:20px;background:#f8f8f8;border-top:1px solid #ffffff;border-bottom:1px solid #ffffff;"></div>
<div class="b" style="left:1303px;top:697px;width:114px;height:20px;background:#f8f8f8;border-top:1px solid #ffffff;border-bottom:1px solid #ffffff;"></div>
<div class="b" style="left:1419px;top:700px;width:112px;height:17px;background:#d7adad;"></div>
<div class="b" style="left:1532px;top:700px;width:22px;height:17px;background:#b0d4b0;"></div>
<div class="b" style="left:1555px;top:700px;width:2px;height:17px;background:#b8c3ce;"></div>
<div class="t" style="left:1422.00px;top:700.99px;font-size:13px;line-height:17px;font-family:'Liberation Sans',sans-serif;font-weight:normal;color:#000;">243</div>
<div class="t" style="left:1481.77px;top:700.99px;font-size:13px;line-height:17px;font-family:'Liberation Sans',sans-serif;font-weight:normal;color:#000;">48</div>
<div class="t" style="left:1545.77px;top:700.99px;font-size:13px;line-height:17px;font-family:'Liberation Sans',sans-serif;font-weight:normal;color:#000;">5</div>
<div class="b" style="left:1560px;top:700px;width:112px;height:17px;background:#d7adad;"></div>
<div class="b" style="left:1673px;top:700px;width:18px;height:17px;background:#b0d4b0;"></div>
<div class="b" style="left:1692px;top:700px;width:4px;height:17px;background:#b8c3ce;"></div>
<div class="t" style="left:1563.00px;top:700.99px;font-size:13px;line-height:17px;font-family:'Liberation Sans',sans-serif;font-weight:normal;color:#000;">362</div>
<div class="t" style="left:1621.77px;top:700.99px;font-size:13px;line-height:17px;font-family:'Liberation Sans',sans-serif;font-weight:normal;color:#000;">59</div>
<div class="t" style="left:1677.53px;top:700.99px;font-size:13px;line-height:17px;font-family:'Liberation Sans',sans-serif;font-weight:normal;color:#000;">14</div>
<div class="b" style="left:302px;top:717px;width:1395px;height:1px;background:#7d90a5;"></div>
<div class="t" style="left:363.34px;top:698.99px;font-size:13px;line-height:17px;font-family:'Liberation Sans',sans-serif;font-weight:normal;color:#000;">0.46</div>
<div class="t" style="left:473.34px;top:698.99px;font-size:13px;line-height:17px;font-family:'Liberation Sans',sans-serif;font-weight:normal;color:#000;">0.98</div>
<div class="t" style="left:545.00px;top:700.04px;font-size:13px;line-height:17px;font-family:'Liberation Mono',monospace;font-weight:normal;color:#000;transform:scaleX(1.0180);transform-origin:left center;">000000019C05A220</div>
<div class="t" style="left:700.00px;top:700.04px;font-size:13px;line-height:17px;font-family:'Liberation Mono',monospace;font-weight:normal;color:#000;transform:scaleX(1.0162);transform-origin:left center;">sub_19C05A220</div>
<div class="t" style="left:955.05px;top:698.99px;font-size:13px;line-height:17px;font-family:'Liberation Sans',sans-serif;font-weight:normal;color:#000;">Normal</div>
<div class="t" style="left:1029.00px;top:700.04px;font-size:13px;line-height:17px;font-family:'Liberation Mono',monospace;font-weight:normal;color:#000;transform:scaleX(1.0162);transform-origin:left center;">000000019C...</div>
<div class="t" style="left:1149.00px;top:700.04px;font-size:13px;line-height:17px;font-family:'Liberation Mono',monospace;font-weight:normal;color:#000;transform:scaleX(1.0162);transform-origin:left center;">sub_19C05A2B0</div>
<div class="t" style="left:1340.05px;top:698.99px;font-size:13px;line-height:17px;font-family:'Liberation Sans',sans-serif;font-weight:normal;color:#000;">Normal</div>
<svg style="left:303px;top:700px" width="17" height="15" viewBox="0 0 17 15"><rect x="6.5" y="0.5" width="4" height="3" fill="#86cc70" stroke="#4a9a3a"/><path d="M8.5,4 V9" stroke="#8a8a8a"/><path d="M6.5,4.5 C4,5 3,6.5 2.5,8.5" stroke="#8a8a8a" stroke-dasharray="1.5,1" fill="none"/><path d="M10.5,4.5 C13,5 14,6.5 14.5,8.5" stroke="#777" stroke-dasharray="1.5,1" fill="none"/><path d="M1.5,8.5 h2 M7.5,8.5 h2 M13.5,8.5 h2" stroke="#8a8a8a"/><rect x="0.5" y="10.5" width="4" height="3" fill="#f0a4a4" stroke="#c86464"/><rect x="6.5" y="10.5" width="4" height="3" fill="#f2dc4a" stroke="#c0a020"/><rect x="12.5" y="10.5" width="4" height="3" fill="#78a4cc" stroke="#3f6f9f"/></svg>
<div class="b" style="left:302px;top:718px;width:18px;height:21px;background:#ffffff;"></div>
<div class="b" style="left:321px;top:718px;width:109px;height:20px;background:#eba516;"></div>
<div class="b" style="left:431px;top:718px;width:109px;height:20px;background:#8ff500;"></div>
<div class="b" style="left:541px;top:718px;width:154px;height:20px;background:#f8f8f8;border-top:1px solid #ffffff;border-bottom:1px solid #ffffff;"></div>
<div class="b" style="left:696px;top:718px;width:232px;height:20px;background:#f8f8f8;border-top:1px solid #ffffff;border-bottom:1px solid #ffffff;"></div>
<div class="b" style="left:929px;top:718px;width:95px;height:20px;background:#f8f8f8;border-top:1px solid #ffffff;border-bottom:1px solid #ffffff;"></div>
<div class="b" style="left:1025px;top:718px;width:119px;height:20px;background:#f8f8f8;border-top:1px solid #ffffff;border-bottom:1px solid #ffffff;"></div>
<div class="b" style="left:1145px;top:718px;width:157px;height:20px;background:#f8f8f8;border-top:1px solid #ffffff;border-bottom:1px solid #ffffff;"></div>
<div class="b" style="left:1303px;top:718px;width:114px;height:20px;background:#f8f8f8;border-top:1px solid #ffffff;border-bottom:1px solid #ffffff;"></div>
<div class="b" style="left:1419px;top:721px;width:20px;height:17px;background:#b0d4b0;"></div>
<div class="b" style="left:1440px;top:721px;width:117px;height:17px;background:#b8c3ce;"></div>
<div class="t" style="left:1422.00px;top:721.99px;font-size:13px;line-height:17px;font-family:'Liberation Sans',sans-serif;font-weight:normal;color:#000;">0</div>
<div class="t" style="left:1485.38px;top:721.99px;font-size:13px;line-height:17px;font-family:'Liberation Sans',sans-serif;font-weight:normal;color:#000;">3</div>
<div class="t" style="left:1538.53px;top:721.99px;font-size:13px;line-height:17px;font-family:'Liberation Sans',sans-serif;font-weight:normal;color:#000;">17</div>
<div class="b" style="left:1560px;top:721px;width:9px;height:17px;background:#b0d4b0;"></div>
<div class="b" style="left:1570px;top:721px;width:126px;height:17px;background:#b8c3ce;"></div>
<div class="t" style="left:1563.00px;top:721.99px;font-size:13px;line-height:17px;font-family:'Liberation Sans',sans-serif;font-weight:normal;color:#000;">0</div>
<div class="t" style="left:1625.38px;top:721.99px;font-size:13px;line-height:17px;font-family:'Liberation Sans',sans-serif;font-weight:normal;color:#000;">2</div>
<div class="t" style="left:1677.53px;top:721.99px;font-size:13px;line-height:17px;font-family:'Liberation Sans',sans-serif;font-weight:normal;color:#000;">25</div>
<div class="b" style="left:302px;top:738px;width:1395px;height:1px;background:#7d90a5;"></div>
<div class="t" style="left:363.34px;top:719.99px;font-size:13px;line-height:17px;font-family:'Liberation Sans',sans-serif;font-weight:normal;color:#000;">0.46</div>
<div class="t" style="left:473.34px;top:719.99px;font-size:13px;line-height:17px;font-family:'Liberation Sans',sans-serif;font-weight:normal;color:#000;">0.99</div>
<div class="t" style="left:545.00px;top:721.04px;font-size:13px;line-height:17px;font-family:'Liberation Mono',monospace;font-weight:normal;color:#000;transform:scaleX(1.0180);transform-origin:left center;">000000019C0B4590</div>
<div class="t" style="left:700.00px;top:721.04px;font-size:13px;line-height:17px;font-family:'Liberation Mono',monospace;font-weight:normal;color:#000;transform:scaleX(1.0162);transform-origin:left center;">sub_19C0B4590</div>
<div class="t" style="left:955.05px;top:719.99px;font-size:13px;line-height:17px;font-family:'Liberation Sans',sans-serif;font-weight:normal;color:#000;">Normal</div>
<div class="t" style="left:1029.00px;top:721.04px;font-size:13px;line-height:17px;font-family:'Liberation Mono',monospace;font-weight:normal;color:#000;transform:scaleX(1.0162);transform-origin:left center;">000000019C...</div>
<div class="t" style="left:1149.00px;top:721.04px;font-size:13px;line-height:17px;font-family:'Liberation Mono',monospace;font-weight:normal;color:#000;transform:scaleX(1.0162);transform-origin:left center;">sub_19C0B4598</div>
<div class="t" style="left:1340.05px;top:719.99px;font-size:13px;line-height:17px;font-family:'Liberation Sans',sans-serif;font-weight:normal;color:#000;">Normal</div>
<svg style="left:303px;top:721px" width="17" height="15" viewBox="0 0 17 15"><rect x="6.5" y="0.5" width="4" height="3" fill="#86cc70" stroke="#4a9a3a"/><path d="M8.5,4 V9" stroke="#8a8a8a"/><path d="M6.5,4.5 C4,5 3,6.5 2.5,8.5" stroke="#8a8a8a" stroke-dasharray="1.5,1" fill="none"/><path d="M10.5,4.5 C13,5 14,6.5 14.5,8.5" stroke="#777" stroke-dasharray="1.5,1" fill="none"/><path d="M1.5,8.5 h2 M7.5,8.5 h2 M13.5,8.5 h2" stroke="#8a8a8a"/><rect x="0.5" y="10.5" width="4" height="3" fill="#f0a4a4" stroke="#c86464"/><rect x="6.5" y="10.5" width="4" height="3" fill="#f2dc4a" stroke="#c0a020"/><rect x="12.5" y="10.5" width="4" height="3" fill="#78a4cc" stroke="#3f6f9f"/></svg>
<div class="b" style="left:302px;top:739px;width:18px;height:21px;background:#ffffff;"></div>
<div class="b" style="left:321px;top:739px;width:109px;height:20px;background:#eea218;"></div>
<div class="b" style="left:431px;top:739px;width:109px;height:20px;background:#dcc400;"></div>
<div class="b" style="left:541px;top:739px;width:154px;height:20px;background:#f8f8f8;border-top:1px solid #ffffff;border-bottom:1px solid #ffffff;"></div>
<div class="b" style="left:696px;top:739px;width:232px;height:20px;background:#f8f8f8;border-top:1px solid #ffffff;border-bottom:1px solid #ffffff;"></div>
<div class="b" style="left:929px;top:739px;width:95px;height:20px;background:#f8f8f8;border-top:1px solid #ffffff;border-bottom:1px solid #ffffff;"></div>
<div class="b" style="left:1025px;top:739px;width:119px;height:20px;background:#f8f8f8;border-top:1px solid #ffffff;border-bottom:1px solid #ffffff;"></div>
<div class="b" style="left:1145px;top:739px;width:157px;height:20px;background:#f8f8f8;border-top:1px solid #ffffff;border-bottom:1px solid #ffffff;"></div>
<div class="b" style="left:1303px;top:739px;width:114px;height:20px;background:#f8f8f8;border-top:1px solid #ffffff;border-bottom:1px solid #ffffff;"></div>
<div class="b" style="left:1419px;top:742px;width:42px;height:17px;background:#d7adad;"></div>
<div class="b" style="left:1462px;top:742px;width:56px;height:17px;background:#b0d4b0;"></div>
<div class="b" style="left:1519px;top:742px;width:38px;height:17px;background:#b8c3ce;"></div>
<div class="t" style="left:1422.00px;top:742.99px;font-size:13px;line-height:17px;font-family:'Liberation Sans',sans-serif;font-weight:normal;color:#000;">58</div>
<div class="t" style="left:1481.77px;top:742.99px;font-size:13px;line-height:17px;font-family:'Liberation Sans',sans-serif;font-weight:normal;color:#000;">77</div>
<div class="t" style="left:1538.53px;top:742.99px;font-size:13px;line-height:17px;font-family:'Liberation Sans',sans-serif;font-weight:normal;color:#000;">52</div>
<div class="b" style="left:1560px;top:742px;width:55px;height:17px;background:#d7adad;"></div>
<div class="b" style="left:1616px;top:742px;width:25px;height:17px;background:#b0d4b0;"></div>
<div class="b" style="left:1642px;top:742px;width:54px;height:17px;background:#b8c3ce;"></div>
<div class="t" style="left:1563.00px;top:742.99px;font-size:13px;line-height:17px;font-family:'Liberation Sans',sans-serif;font-weight:normal;color:#000;">119</div>
<div class="t" style="left:1621.77px;top:742.99px;font-size:13px;line-height:17px;font-family:'Liberation Sans',sans-serif;font-weight:normal;color:#000;">57</div>
<div class="t" style="left:1671.27px;top:742.99px;font-size:13px;line-height:17px;font-family:'Liberation Sans',sans-serif;font-weight:normal;color:#000;">115</div>
<div class="b" style="left:302px;top:759px;width:1395px;height:1px;background:#7d90a5;"></div>
<div class="t" style="left:363.34px;top:740.99px;font-size:13px;line-height:17px;font-family:'Liberation Sans',sans-serif;font-weight:normal;color:#000;">0.43</div>
<div class="t" style="left:473.34px;top:740.99px;font-size:13px;line-height:17px;font-family:'Liberation Sans',sans-serif;font-weight:normal;color:#000;">0.65</div>
<div class="t" style="left:545.00px;top:742.04px;font-size:13px;line-height:17px;font-family:'Liberation Mono',monospace;font-weight:normal;color:#000;transform:scaleX(1.0180);transform-origin:left center;">000000019C034B50</div>
<div class="t" style="left:700.00px;top:742.04px;font-size:13px;line-height:17px;font-family:'Liberation Mono',monospace;font-weight:normal;color:#000;transform:scaleX(1.0162);transform-origin:left center;">sub_19C034B50</div>
<div class="t" style="left:955.05px;top:740.99px;font-size:13px;line-height:17px;font-family:'Liberation Sans',sans-serif;font-weight:normal;color:#000;">Normal</div>
<div class="t" style="left:1029.00px;top:742.04px;font-size:13px;line-height:17px;font-family:'Liberation Mono',monospace;font-weight:normal;color:#000;transform:scaleX(1.0162);transform-origin:left center;">000000019C...</div>
<div class="t" style="left:1149.00px;top:742.04px;font-size:13px;line-height:17px;font-family:'Liberation Mono',monospace;font-weight:normal;color:#000;transform:scaleX(1.0162);transform-origin:left center;">sub_19C034BD8</div>
<div class="t" style="left:1340.05px;top:740.99px;font-size:13px;line-height:17px;font-family:'Liberation Sans',sans-serif;font-weight:normal;color:#000;">Normal</div>
<svg style="left:303px;top:742px" width="17" height="15" viewBox="0 0 17 15"><rect x="6.5" y="0.5" width="4" height="3" fill="#86cc70" stroke="#4a9a3a"/><path d="M8.5,4 V9" stroke="#8a8a8a"/><path d="M6.5,4.5 C4,5 3,6.5 2.5,8.5" stroke="#8a8a8a" stroke-dasharray="1.5,1" fill="none"/><path d="M10.5,4.5 C13,5 14,6.5 14.5,8.5" stroke="#777" stroke-dasharray="1.5,1" fill="none"/><path d="M1.5,8.5 h2 M7.5,8.5 h2 M13.5,8.5 h2" stroke="#8a8a8a"/><rect x="0.5" y="10.5" width="4" height="3" fill="#f0a4a4" stroke="#c86464"/><rect x="6.5" y="10.5" width="4" height="3" fill="#f2dc4a" stroke="#c0a020"/><rect x="12.5" y="10.5" width="4" height="3" fill="#78a4cc" stroke="#3f6f9f"/></svg>
<div class="b" style="left:302px;top:760px;width:18px;height:21px;background:#ffffff;"></div>
<div class="b" style="left:321px;top:760px;width:109px;height:20px;background:#efa019;"></div>
<div class="b" style="left:431px;top:760px;width:109px;height:20px;background:#d5cd00;"></div>
<div class="b" style="left:541px;top:760px;width:154px;height:20px;background:#f8f8f8;border-top:1px solid #ffffff;border-bottom:1px solid #ffffff;"></div>
<div class="b" style="left:696px;top:760px;width:232px;height:20px;background:#f8f8f8;border-top:1px solid #ffffff;border-bottom:1px solid #ffffff;"></div>
<div class="b" style="left:929px;top:760px;width:95px;height:20px;background:#f8f8f8;border-top:1px solid #ffffff;border-bottom:1px solid #ffffff;"></div>
<div class="b" style="left:1025px;top:760px;width:119px;height:20px;background:#f8f8f8;border-top:1px solid #ffffff;border-bottom:1px solid #ffffff;"></div>
<div class="b" style="left:1145px;top:760px;width:157px;height:20px;background:#f8f8f8;border-top:1px solid #ffffff;border-bottom:1px solid #ffffff;"></div>
<div class="b" style="left:1303px;top:760px;width:114px;height:20px;background:#f8f8f8;border-top:1px solid #ffffff;border-bottom:1px solid #ffffff;"></div>
<div class="b" style="left:1419px;top:763px;width:92px;height:17px;background:#d7adad;"></div>
<div class="b" style="left:1512px;top:763px;width:45px;height:17px;background:#b0d4b0;"></div>
<div class="t" style="left:1422.00px;top:763.99px;font-size:13px;line-height:17px;font-family:'Liberation Sans',sans-serif;font-weight:normal;color:#000;">37</div>
<div class="t" style="left:1481.77px;top:763.99px;font-size:13px;line-height:17px;font-family:'Liberation Sans',sans-serif;font-weight:normal;color:#000;">18</div>
<div class="t" style="left:1545.77px;top:763.99px;font-size:13px;line-height:17px;font-family:'Liberation Sans',sans-serif;font-weight:normal;color:#000;">0</div>
<div class="b" style="left:1560px;top:763px;width:97px;height:17px;background:#d7adad;"></div>
<div class="b" style="left:1658px;top:763px;width:18px;height:17px;background:#b0d4b0;"></div>
<div class="b" style="left:1677px;top:763px;width:19px;height:17px;background:#b8c3ce;"></div>
<div class="t" style="left:1563.00px;top:763.99px;font-size:13px;line-height:17px;font-family:'Liberation Sans',sans-serif;font-weight:normal;color:#000;">66</div>
<div class="t" style="left:1621.77px;top:763.99px;font-size:13px;line-height:17px;font-family:'Liberation Sans',sans-serif;font-weight:normal;color:#000;">13</div>
<div class="t" style="left:1677.53px;top:763.99px;font-size:13px;line-height:17px;font-family:'Liberation Sans',sans-serif;font-weight:normal;color:#000;">13</div>
<div class="b" style="left:302px;top:780px;width:1395px;height:1px;background:#7d90a5;"></div>
<div class="t" style="left:363.34px;top:761.99px;font-size:13px;line-height:17px;font-family:'Liberation Sans',sans-serif;font-weight:normal;color:#000;">0.42</div>
<div class="t" style="left:473.34px;top:761.99px;font-size:13px;line-height:17px;font-family:'Liberation Sans',sans-serif;font-weight:normal;color:#000;">0.72</div>
<div class="t" style="left:545.00px;top:763.04px;font-size:13px;line-height:17px;font-family:'Liberation Mono',monospace;font-weight:normal;color:#000;transform:scaleX(1.0180);transform-origin:left center;">000000019C035618</div>
<div class="t" style="left:700.00px;top:763.04px;font-size:13px;line-height:17px;font-family:'Liberation Mono',monospace;font-weight:normal;color:#000;transform:scaleX(1.0162);transform-origin:left center;">sub_19C035618</div>
<div class="t" style="left:955.05px;top:761.99px;font-size:13px;line-height:17px;font-family:'Liberation Sans',sans-serif;font-weight:normal;color:#000;">Normal</div>
<div class="t" style="left:1029.00px;top:763.04px;font-size:13px;line-height:17px;font-family:'Liberation Mono',monospace;font-weight:normal;color:#000;transform:scaleX(1.0162);transform-origin:left center;">000000019C...</div>
<div class="t" style="left:1149.00px;top:763.04px;font-size:13px;line-height:17px;font-family:'Liberation Mono',monospace;font-weight:normal;color:#000;transform:scaleX(1.0162);transform-origin:left center;">sub_19C0BF6F8</div>
<div class="t" style="left:1340.05px;top:761.99px;font-size:13px;line-height:17px;font-family:'Liberation Sans',sans-serif;font-weight:normal;color:#000;">Normal</div>
<svg style="left:303px;top:763px" width="17" height="15" viewBox="0 0 17 15"><rect x="6.5" y="0.5" width="4" height="3" fill="#86cc70" stroke="#4a9a3a"/><path d="M8.5,4 V9" stroke="#8a8a8a"/><path d="M6.5,4.5 C4,5 3,6.5 2.5,8.5" stroke="#8a8a8a" stroke-dasharray="1.5,1" fill="none"/><path d="M10.5,4.5 C13,5 14,6.5 14.5,8.5" stroke="#777" stroke-dasharray="1.5,1" fill="none"/><path d="M1.5,8.5 h2 M7.5,8.5 h2 M13.5,8.5 h2" stroke="#8a8a8a"/><rect x="0.5" y="10.5" width="4" height="3" fill="#f0a4a4" stroke="#c86464"/><rect x="6.5" y="10.5" width="4" height="3" fill="#f2dc4a" stroke="#c0a020"/><rect x="12.5" y="10.5" width="4" height="3" fill="#78a4cc" stroke="#3f6f9f"/></svg>
<div class="b" style="left:302px;top:781px;width:18px;height:21px;background:#ffffff;"></div>
<div class="b" style="left:321px;top:781px;width:109px;height:20px;background:#f09d1a;"></div>
<div class="b" style="left:431px;top:781px;width:109px;height:20px;background:#8ff500;"></div>
<div class="b" style="left:541px;top:781px;width:154px;height:20px;background:#f8f8f8;border-top:1px solid #ffffff;border-bottom:1px solid #ffffff;"></div>
<div class="b" style="left:696px;top:781px;width:232px;height:20px;background:#f8f8f8;border-top:1px solid #ffffff;border-bottom:1px solid #ffffff;"></div>
<div class="b" style="left:929px;top:781px;width:95px;height:20px;background:#f8f8f8;border-top:1px solid #ffffff;border-bottom:1px solid #ffffff;"></div>
<div class="b" style="left:1025px;top:781px;width:119px;height:20px;background:#f8f8f8;border-top:1px solid #ffffff;border-bottom:1px solid #ffffff;"></div>
<div class="b" style="left:1145px;top:781px;width:157px;height:20px;background:#f8f8f8;border-top:1px solid #ffffff;border-bottom:1px solid #ffffff;"></div>
<div class="b" style="left:1303px;top:781px;width:114px;height:20px;background:#f8f8f8;border-top:1px solid #ffffff;border-bottom:1px solid #ffffff;"></div>
<div class="b" style="left:1419px;top:784px;width:14px;height:17px;background:#b0d4b0;"></div>
<div class="b" style="left:1434px;top:784px;width:123px;height:17px;background:#b8c3ce;"></div>
<div class="t" style="left:1422.00px;top:784.99px;font-size:13px;line-height:17px;font-family:'Liberation Sans',sans-serif;font-weight:normal;color:#000;">0</div>
<div class="t" style="left:1485.38px;top:784.99px;font-size:13px;line-height:17px;font-family:'Liberation Sans',sans-serif;font-weight:normal;color:#000;">2</div>
<div class="t" style="left:1538.53px;top:784.99px;font-size:13px;line-height:17px;font-family:'Liberation Sans',sans-serif;font-weight:normal;color:#000;">17</div>
<div class="b" style="left:1560px;top:784px;width:4px;height:17px;background:#b0d4b0;"></div>
<div class="b" style="left:1565px;top:784px;width:131px;height:17px;background:#b8c3ce;"></div>
<div class="t" style="left:1563.00px;top:784.99px;font-size:13px;line-height:17px;font-family:'Liberation Sans',sans-serif;font-weight:normal;color:#000;">0</div>
<div class="t" style="left:1625.38px;top:784.99px;font-size:13px;line-height:17px;font-family:'Liberation Sans',sans-serif;font-weight:normal;color:#000;">1</div>
<div class="t" style="left:1677.53px;top:784.99px;font-size:13px;line-height:17px;font-family:'Liberation Sans',sans-serif;font-weight:normal;color:#000;">25</div>
<div class="b" style="left:302px;top:801px;width:1395px;height:1px;background:#7d90a5;"></div>
<div class="t" style="left:363.34px;top:782.99px;font-size:13px;line-height:17px;font-family:'Liberation Sans',sans-serif;font-weight:normal;color:#000;">0.41</div>
<div class="t" style="left:473.34px;top:782.99px;font-size:13px;line-height:17px;font-family:'Liberation Sans',sans-serif;font-weight:normal;color:#000;">0.98</div>
<div class="t" style="left:545.00px;top:784.04px;font-size:13px;line-height:17px;font-family:'Liberation Mono',monospace;font-weight:normal;color:#000;transform:scaleX(1.0180);transform-origin:left center;">000000019C0B45AC</div>
<div class="t" style="left:700.00px;top:784.04px;font-size:13px;line-height:17px;font-family:'Liberation Mono',monospace;font-weight:normal;color:#000;transform:scaleX(1.0162);transform-origin:left center;">sub_19C0B45AC</div>
<div class="t" style="left:955.05px;top:782.99px;font-size:13px;line-height:17px;font-family:'Liberation Sans',sans-serif;font-weight:normal;color:#000;">Normal</div>
<div class="t" style="left:1029.00px;top:784.04px;font-size:13px;line-height:17px;font-family:'Liberation Mono',monospace;font-weight:normal;color:#000;transform:scaleX(1.0162);transform-origin:left center;">000000019C...</div>
<div class="t" style="left:1149.00px;top:784.04px;font-size:13px;line-height:17px;font-family:'Liberation Mono',monospace;font-weight:normal;color:#000;transform:scaleX(1.0162);transform-origin:left center;">sub_19C0B45B4</div>
<div class="t" style="left:1340.05px;top:782.99px;font-size:13px;line-height:17px;font-family:'Liberation Sans',sans-serif;font-weight:normal;color:#000;">Normal</div>
<svg style="left:303px;top:784px" width="17" height="15" viewBox="0 0 17 15"><rect x="6.5" y="0.5" width="4" height="3" fill="#86cc70" stroke="#4a9a3a"/><path d="M8.5,4 V9" stroke="#8a8a8a"/><path d="M6.5,4.5 C4,5 3,6.5 2.5,8.5" stroke="#8a8a8a" stroke-dasharray="1.5,1" fill="none"/><path d="M10.5,4.5 C13,5 14,6.5 14.5,8.5" stroke="#777" stroke-dasharray="1.5,1" fill="none"/><path d="M1.5,8.5 h2 M7.5,8.5 h2 M13.5,8.5 h2" stroke="#8a8a8a"/><rect x="0.5" y="10.5" width="4" height="3" fill="#f0a4a4" stroke="#c86464"/><rect x="6.5" y="10.5" width="4" height="3" fill="#f2dc4a" stroke="#c0a020"/><rect x="12.5" y="10.5" width="4" height="3" fill="#78a4cc" stroke="#3f6f9f"/></svg>
<div class="b" style="left:302px;top:802px;width:18px;height:21px;background:#ffffff;"></div>
<div class="b" style="left:321px;top:802px;width:109px;height:20px;background:#f2961c;"></div>
<div class="b" style="left:431px;top:802px;width:109px;height:20px;background:#e0b60a;"></div>
<div class="b" style="left:541px;top:802px;width:154px;height:20px;background:#f8f8f8;border-top:1px solid #ffffff;border-bottom:1px solid #ffffff;"></div>
<div class="b" style="left:696px;top:802px;width:232px;height:20px;background:#f8f8f8;border-top:1px solid #ffffff;border-bottom:1px solid #ffffff;"></div>
<div class="b" style="left:929px;top:802px;width:95px;height:20px;background:#f8f8f8;border-top:1px solid #ffffff;border-bottom:1px solid #ffffff;"></div>
<div class="b" style="left:1025px;top:802px;width:119px;height:20px;background:#f8f8f8;border-top:1px solid #ffffff;border-bottom:1px solid #ffffff;"></div>
<div class="b" style="left:1145px;top:802px;width:157px;height:20px;background:#f8f8f8;border-top:1px solid #ffffff;border-bottom:1px solid #ffffff;"></div>
<div class="b" style="left:1303px;top:802px;width:114px;height:20px;background:#f8f8f8;border-top:1px solid #ffffff;border-bottom:1px solid #ffffff;"></div>
<div class="b" style="left:1419px;top:805px;width:49px;height:17px;background:#d7adad;"></div>
<div class="b" style="left:1469px;top:805px;width:72px;height:17px;background:#b0d4b0;"></div>
<div class="b" style="left:1542px;top:805px;width:15px;height:17px;background:#b8c3ce;"></div>
<div class="t" style="left:1422.00px;top:805.99px;font-size:13px;line-height:17px;font-family:'Liberation Sans',sans-serif;font-weight:normal;color:#000;">81</div>
<div class="t" style="left:1478.63px;top:805.99px;font-size:13px;line-height:17px;font-family:'Liberation Sans',sans-serif;font-weight:normal;color:#000;">118</div>
<div class="t" style="left:1538.53px;top:805.99px;font-size:13px;line-height:17px;font-family:'Liberation Sans',sans-serif;font-weight:normal;color:#000;">24</div>
<div class="b" style="left:1560px;top:805px;width:68px;height:17px;background:#d7adad;"></div>
<div class="b" style="left:1629px;top:805px;width:26px;height:17px;background:#b0d4b0;"></div>
<div class="b" style="left:1656px;top:805px;width:40px;height:17px;background:#b8c3ce;"></div>
<div class="t" style="left:1563.00px;top:805.99px;font-size:13px;line-height:17px;font-family:'Liberation Sans',sans-serif;font-weight:normal;color:#000;">194</div>
<div class="t" style="left:1621.77px;top:805.99px;font-size:13px;line-height:17px;font-family:'Liberation Sans',sans-serif;font-weight:normal;color:#000;">75</div>
<div class="t" style="left:1671.27px;top:805.99px;font-size:13px;line-height:17px;font-family:'Liberation Sans',sans-serif;font-weight:normal;color:#000;">113</div>
<div class="b" style="left:302px;top:822px;width:1395px;height:1px;background:#7d90a5;"></div>
<div class="t" style="left:363.34px;top:803.99px;font-size:13px;line-height:17px;font-family:'Liberation Sans',sans-serif;font-weight:normal;color:#000;">0.38</div>
<div class="t" style="left:473.34px;top:803.99px;font-size:13px;line-height:17px;font-family:'Liberation Sans',sans-serif;font-weight:normal;color:#000;">0.59</div>
<div class="t" style="left:545.00px;top:805.04px;font-size:13px;line-height:17px;font-family:'Liberation Mono',monospace;font-weight:normal;color:#000;transform:scaleX(1.0180);transform-origin:left center;">000000019C0C28AC</div>
<div class="t" style="left:700.00px;top:805.04px;font-size:13px;line-height:17px;font-family:'Liberation Mono',monospace;font-weight:normal;color:#000;transform:scaleX(1.0162);transform-origin:left center;">sub_19C0C28AC</div>
<div class="t" style="left:955.05px;top:803.99px;font-size:13px;line-height:17px;font-family:'Liberation Sans',sans-serif;font-weight:normal;color:#000;">Normal</div>
<div class="t" style="left:1029.00px;top:805.04px;font-size:13px;line-height:17px;font-family:'Liberation Mono',monospace;font-weight:normal;color:#000;transform:scaleX(1.0162);transform-origin:left center;">000000019C...</div>
<div class="t" style="left:1149.00px;top:805.04px;font-size:13px;line-height:17px;font-family:'Liberation Mono',monospace;font-weight:normal;color:#000;transform:scaleX(1.0162);transform-origin:left center;">sub_19C034368</div>
<div class="t" style="left:1340.05px;top:803.99px;font-size:13px;line-height:17px;font-family:'Liberation Sans',sans-serif;font-weight:normal;color:#000;">Normal</div>
<svg style="left:303px;top:805px" width="17" height="15" viewBox="0 0 17 15"><rect x="6.5" y="0.5" width="4" height="3" fill="#86cc70" stroke="#4a9a3a"/><path d="M8.5,4 V9" stroke="#8a8a8a"/><path d="M6.5,4.5 C4,5 3,6.5 2.5,8.5" stroke="#8a8a8a" stroke-dasharray="1.5,1" fill="none"/><path d="M10.5,4.5 C13,5 14,6.5 14.5,8.5" stroke="#777" stroke-dasharray="1.5,1" fill="none"/><path d="M1.5,8.5 h2 M7.5,8.5 h2 M13.5,8.5 h2" stroke="#8a8a8a"/><rect x="0.5" y="10.5" width="4" height="3" fill="#f0a4a4" stroke="#c86464"/><rect x="6.5" y="10.5" width="4" height="3" fill="#f2dc4a" stroke="#c0a020"/><rect x="12.5" y="10.5" width="4" height="3" fill="#78a4cc" stroke="#3f6f9f"/></svg>
<div class="b" style="left:302px;top:823px;width:18px;height:8px;background:#ffffff;"></div>
<div class="b" style="left:321px;top:823px;width:109px;height:8px;background:#f0921e;"></div>
<div class="b" style="left:431px;top:823px;width:109px;height:8px;background:#e4ad10;"></div>
<div class="b" style="left:541px;top:823px;width:154px;height:8px;background:#f8f8f8;border-top:1px solid #ffffff;border-bottom:1px solid #ffffff;"></div>
<div class="b" style="left:696px;top:823px;width:232px;height:8px;background:#f8f8f8;border-top:1px solid #ffffff;border-bottom:1px solid #ffffff;"></div>
<div class="b" style="left:929px;top:823px;width:95px;height:8px;background:#f8f8f8;border-top:1px solid #ffffff;border-bottom:1px solid #ffffff;"></div>
<div class="b" style="left:1025px;top:823px;width:119px;height:8px;background:#f8f8f8;border-top:1px solid #ffffff;border-bottom:1px solid #ffffff;"></div>
<div class="b" style="left:1145px;top:823px;width:157px;height:8px;background:#f8f8f8;border-top:1px solid #ffffff;border-bottom:1px solid #ffffff;"></div>
<div class="b" style="left:1303px;top:823px;width:114px;height:8px;background:#f8f8f8;border-top:1px solid #ffffff;border-bottom:1px solid #ffffff;"></div>
<div class="b" style="left:1419px;top:826px;width:36px;height:5px;background:#d7adad;"></div>
<div class="b" style="left:1456px;top:826px;width:76px;height:5px;background:#b0d4b0;"></div>
<div class="b" style="left:1533px;top:826px;width:24px;height:5px;background:#b8c3ce;"></div>
<div class="t" style="left:1422.00px;top:826.99px;font-size:13px;line-height:17px;font-family:'Liberation Sans',sans-serif;font-weight:normal;color:#000;">37</div>
<div class="t" style="left:1481.77px;top:826.99px;font-size:13px;line-height:17px;font-family:'Liberation Sans',sans-serif;font-weight:normal;color:#000;">76</div>
<div class="t" style="left:1538.53px;top:826.99px;font-size:13px;line-height:17px;font-family:'Liberation Sans',sans-serif;font-weight:normal;color:#000;">24</div>
<div class="b" style="left:1560px;top:826px;width:50px;height:5px;background:#d7adad;"></div>
<div class="b" style="left:1611px;top:826px;width:25px;height:5px;background:#b0d4b0;"></div>
<div class="b" style="left:1637px;top:826px;width:59px;height:5px;background:#b8c3ce;"></div>
<div class="t" style="left:1563.00px;top:826.99px;font-size:13px;line-height:17px;font-family:'Liberation Sans',sans-serif;font-weight:normal;color:#000;">50</div>
<div class="t" style="left:1621.77px;top:826.99px;font-size:13px;line-height:17px;font-family:'Liberation Sans',sans-serif;font-weight:normal;color:#000;">26</div>
<div class="t" style="left:1677.53px;top:826.99px;font-size:13px;line-height:17px;font-family:'Liberation Sans',sans-serif;font-weight:normal;color:#000;">58</div>
<div class="t" style="left:363.34px;top:824.99px;font-size:13px;line-height:17px;font-family:'Liberation Sans',sans-serif;font-weight:normal;color:#000;">0.35</div>
<div class="t" style="left:473.34px;top:824.99px;font-size:13px;line-height:17px;font-family:'Liberation Sans',sans-serif;font-weight:normal;color:#000;">0.53</div>
<div class="t" style="left:545.00px;top:826.04px;font-size:13px;line-height:17px;font-family:'Liberation Mono',monospace;font-weight:normal;color:#000;transform:scaleX(1.0180);transform-origin:left center;">000000019C0BDB84</div>
<div class="t" style="left:700.00px;top:826.04px;font-size:13px;line-height:17px;font-family:'Liberation Mono',monospace;font-weight:normal;color:#000;transform:scaleX(1.0162);transform-origin:left center;">sub_19C0BDB84</div>
<div class="t" style="left:955.05px;top:824.99px;font-size:13px;line-height:17px;font-family:'Liberation Sans',sans-serif;font-weight:normal;color:#000;">Normal</div>
<div class="t" style="left:1029.00px;top:826.04px;font-size:13px;line-height:17px;font-family:'Liberation Mono',monospace;font-weight:normal;color:#000;transform:scaleX(1.0162);transform-origin:left center;">000000019C...</div>
<div class="t" style="left:1149.00px;top:826.04px;font-size:13px;line-height:17px;font-family:'Liberation Mono',monospace;font-weight:normal;color:#000;transform:scaleX(1.0162);transform-origin:left center;">sub_19C0AD044</div>
<div class="t" style="left:1340.05px;top:824.99px;font-size:13px;line-height:17px;font-family:'Liberation Sans',sans-serif;font-weight:normal;color:#000;">Normal</div>
<svg style="left:303px;top:826px" width="17" height="15" viewBox="0 0 17 15"><rect x="6.5" y="0.5" width="4" height="3" fill="#86cc70" stroke="#4a9a3a"/><path d="M8.5,4 V9" stroke="#8a8a8a"/><path d="M6.5,4.5 C4,5 3,6.5 2.5,8.5" stroke="#8a8a8a" stroke-dasharray="1.5,1" fill="none"/><path d="M10.5,4.5 C13,5 14,6.5 14.5,8.5" stroke="#777" stroke-dasharray="1.5,1" fill="none"/><path d="M1.5,8.5 h2 M7.5,8.5 h2 M13.5,8.5 h2" stroke="#8a8a8a"/><rect x="0.5" y="10.5" width="4" height="3" fill="#f0a4a4" stroke="#c86464"/><rect x="6.5" y="10.5" width="4" height="3" fill="#f2dc4a" stroke="#c0a020"/><rect x="12.5" y="10.5" width="4" height="3" fill="#78a4cc" stroke="#3f6f9f"/></svg>
</div>
<div class="b" style="left:320px;top:340px;width:1px;height:491px;background:#7d90a5;"></div>
<div class="b" style="left:430px;top:340px;width:1px;height:491px;background:#7d90a5;"></div>
<div class="b" style="left:540px;top:340px;width:1px;height:491px;background:#7d90a5;"></div>
<div class="b" style="left:695px;top:340px;width:1px;height:491px;background:#7d90a5;"></div>
<div class="b" style="left:928px;top:340px;width:1px;height:491px;background:#7d90a5;"></div>
<div class="b" style="left:1024px;top:340px;width:1px;height:491px;background:#7d90a5;"></div>
<div class="b" style="left:1144px;top:340px;width:1px;height:491px;background:#7d90a5;"></div>
<div class="b" style="left:1302px;top:340px;width:1px;height:491px;background:#7d90a5;"></div>
<div class="b" style="left:1417px;top:340px;width:1px;height:491px;background:#7d90a5;"></div>
<div class="b" style="left:1558px;top:340px;width:1px;height:491px;background:#7d90a5;"></div>
<div class="b" style="left:1697px;top:340px;width:1px;height:491px;background:#7d90a5;"></div>
<div class="b" style="left:320px;top:591px;width:1377px;height:1px;background:#8da7c4;"></div>
<div class="b" style="left:302px;top:318px;width:1412px;height:514px;border:1px solid #7d90a5;"></div>
<div class="b" style="left:1698px;top:340px;width:15px;height:491px;background:#eeeeee;border-left:1px solid #8396ab;"></div>
<div class="b" style="left:1699px;top:341px;width:14px;height:15px;background:#eeeeee;border-bottom:1px solid #8396ab;border-top:1px solid #ffffff;border-left:1px solid #ffffff;"></div>
<div class="b" style="left:1699px;top:356px;width:1px;height:443px;background:#c4d8ee;"></div>
<svg style="left:1702px;top:345px" width="8" height="5"><path d="M0,4.5 L8,4.5 L4,0 Z" fill="#111"/></svg>
<div class="b" style="left:1698px;top:799px;width:15px;height:16px;background:linear-gradient(#eaf2fb,#ffffff 40%,#c9dcf2);border:1px solid #6689c6;border-right:none;"></div>
<div class="b" style="left:1702px;top:804px;width:9px;height:1px;background:#6689c6;"></div>
<div class="b" style="left:1702px;top:806px;width:9px;height:1px;background:#6689c6;"></div>
<div class="b" style="left:1702px;top:808px;width:9px;height:1px;background:#6689c6;"></div>
<div class="b" style="left:1699px;top:815px;width:14px;height:16px;background:#eeeeee;border-top:1px solid #8396ab;border-left:1px solid #ffffff;"></div>
<svg style="left:1701px;top:821px" width="9" height="5"><path d="M0,0 L9,0 L4.5,4.5 Z" fill="#111"/></svg>
<div class="b" style="left:1698px;top:319px;width:15px;height:21px;background:#eeeeee;"></div>
<svg style="left:297px;top:840px" width="1423" height="8"><defs><pattern id="dh840" width="4" height="8" patternUnits="userSpaceOnUse"><rect x="1" y="2" width="1" height="1" fill="#8d9fb3"/><rect x="3" y="4" width="1" height="1" fill="#8d9fb3"/></pattern></defs><rect x="0" y="0" width="1423" height="7" fill="url(#dh840)"/></svg>
<svg style="left:300px;top:840px" width="24" height="7"><path d="M0,5 L4,0.5 L8,5 Z" fill="#5a80c0"/><path d="M0.3,4.7 L4,0.7" stroke="#222" stroke-width="1.1"/><path d="M12,0 L20,0 L16,4.5 Z" fill="#5a80c0"/><path d="M12,0.5 L20,0.5" stroke="#333" stroke-width="1"/></svg>
<div class="b" style="left:297px;top:847px;width:1423px;height:1px;background:#6e8298;"></div>
<div class="b" style="left:299px;top:856px;width:1419px;height:40px;border:1px solid #b8cfe6;"></div>
<div class="b" style="left:303px;top:855px;width:450px;height:3px;background:#eeeeee;"></div>
<div class="t" style="left:306.00px;top:847.99px;font-size:13px;line-height:17px;font-family:'Liberation Sans',sans-serif;font-weight:normal;color:#000;transform:scaleX(1.0246);transform-origin:left center;">+0 / -0 Added and removed Parent Functions calling the selected Functions</div>
<div class="b" style="left:302px;top:867px;width:1412px;height:25px;background:#eeeeee;border:1px solid #7d90a5;border-bottom:none;"></div>
<div class="b" style="left:303px;top:868px;width:1410px;height:20px;background:#eeeeee;"></div>
<div class="b" style="left:303px;top:868px;width:1px;height:20px;background:#ffffff;"></div>
<div class="b" style="left:320px;top:868px;width:1px;height:21px;background:#7d90a5;"></div>
<div class="b" style="left:321px;top:868px;width:1px;height:20px;background:#ffffff;"></div>
<div class="b" style="left:432px;top:868px;width:1px;height:21px;background:#7d90a5;"></div>
<div class="t" style="left:343.13px;top:869.99px;font-size:13px;line-height:17px;font-family:'Liberation Sans',sans-serif;font-weight:normal;color:#000;">Similarity</div>
<div class="b" style="left:433px;top:868px;width:1px;height:20px;background:#ffffff;"></div>
<div class="b" style="left:544px;top:868px;width:1px;height:21px;background:#7d90a5;"></div>
<div class="t" style="left:449.10px;top:869.99px;font-size:13px;line-height:17px;font-family:'Liberation Sans',sans-serif;font-weight:normal;color:#000;">Confidence</div>
<div class="b" style="left:545px;top:868px;width:1px;height:20px;background:#ffffff;"></div>
<div class="b" style="left:664px;top:868px;width:1px;height:21px;background:#7d90a5;"></div>
<div class="t" style="left:574.15px;top:869.99px;font-size:13px;line-height:17px;font-family:'Liberation Sans',sans-serif;font-weight:normal;color:#000;">Address</div>
<div class="b" style="left:665px;top:868px;width:1px;height:20px;background:#ffffff;"></div>
<div class="b" style="left:915px;top:868px;width:1px;height:21px;background:#7d90a5;"></div>
<div class="t" style="left:749.46px;top:869.99px;font-size:13px;line-height:17px;font-family:'Liberation Sans',sans-serif;font-weight:normal;color:#000;">Primary Name</div>
<div class="b" style="left:916px;top:868px;width:1px;height:20px;background:#ffffff;"></div>
<div class="b" style="left:1002px;top:868px;width:1px;height:21px;background:#7d90a5;"></div>
<div class="t" style="left:937.41px;top:869.99px;font-size:13px;line-height:17px;font-family:'Liberation Sans',sans-serif;font-weight:normal;color:#000;">Type</div>
<div class="b" style="left:1003px;top:868px;width:1px;height:20px;background:#ffffff;"></div>
<div class="b" style="left:1121px;top:868px;width:1px;height:21px;background:#7d90a5;"></div>
<div class="t" style="left:1039.15px;top:869.99px;font-size:13px;line-height:17px;font-family:'Liberation Sans',sans-serif;font-weight:normal;color:#000;">Address</div>
<div class="b" style="left:1122px;top:868px;width:1px;height:20px;background:#ffffff;"></div>
<div class="b" style="left:1372px;top:868px;width:1px;height:21px;background:#7d90a5;"></div>
<div class="t" style="left:1197.77px;top:869.99px;font-size:13px;line-height:17px;font-family:'Liberation Sans',sans-serif;font-weight:normal;color:#000;">Secondary Name</div>
<div class="b" style="left:1373px;top:868px;width:1px;height:20px;background:#ffffff;"></div>
<div class="b" style="left:1459px;top:868px;width:1px;height:21px;background:#7d90a5;"></div>
<div class="t" style="left:1402.91px;top:869.99px;font-size:13px;line-height:17px;font-family:'Liberation Sans',sans-serif;font-weight:normal;color:#000;">Type</div>
<div class="b" style="left:1460px;top:868px;width:1px;height:20px;background:#ffffff;"></div>
<div class="b" style="left:1586px;top:868px;width:1px;height:21px;background:#7d90a5;"></div>
<div class="t" style="left:1487.15px;top:869.99px;font-size:13px;line-height:17px;font-family:'Liberation Sans',sans-serif;font-weight:normal;color:#000;">Basic Blocks</div>
<div class="b" style="left:1587px;top:868px;width:1px;height:20px;background:#ffffff;"></div>
<div class="b" style="left:1713px;top:868px;width:1px;height:21px;background:#7d90a5;"></div>
<div class="t" style="left:1631.85px;top:869.99px;font-size:13px;line-height:17px;font-family:'Liberation Sans',sans-serif;font-weight:normal;color:#000;">Jumps</div>
<div class="b" style="left:304px;top:888px;width:1409px;height:1px;background:#7d90a5;"></div>
<div class="b" style="left:304px;top:891px;width:1410px;height:1px;background:#7d90a5;"></div>
<svg style="left:400px;top:875px" width="8" height="8"><path d="M0.5,0.5 L7.5,0.5 L4,6.5 Z" fill="#ffffff" stroke="#a0a0a0"/></svg>
<svg style="left:520px;top:878px" width="4" height="3"><path d="M0,3 L2,0 L4,3 Z" fill="#c0c0c0"/></svg>
<svg style="left:626px;top:878px" width="4" height="3"><path d="M0,3 L2,0 L4,3 Z" fill="#c0c0c0"/></svg>
<svg style="left:971px;top:878px" width="4" height="3"><path d="M0,3 L2,0 L4,3 Z" fill="#c0c0c0"/></svg>
<svg style="left:297px;top:900px" width="1423" height="8"><defs><pattern id="dh900" width="4" height="8" patternUnits="userSpaceOnUse"><rect x="1" y="2" width="1" height="1" fill="#8d9fb3"/><rect x="3" y="4" width="1" height="1" fill="#8d9fb3"/></pattern></defs><rect x="0" y="0" width="1423" height="7" fill="url(#dh900)"/></svg>
<svg style="left:300px;top:900px" width="24" height="7"><path d="M0,5 L4,0.5 L8,5 Z" fill="#5a80c0"/><path d="M0.3,4.7 L4,0.7" stroke="#222" stroke-width="1.1"/><path d="M12,0 L20,0 L16,4.5 Z" fill="#5a80c0"/><path d="M12,0.5 L20,0.5" stroke="#333" stroke-width="1"/></svg>
<div class="b" style="left:297px;top:907px;width:1423px;height:1px;background:#6e8298;"></div>
<div class="b" style="left:299px;top:916px;width:1419px;height:40px;border:1px solid #b8cfe6;"></div>
<div class="b" style="left:303px;top:915px;width:469px;height:3px;background:#eeeeee;"></div>
<div class="t" style="left:306.00px;top:907.99px;font-size:13px;line-height:17px;font-family:'Liberation Sans',sans-serif;font-weight:normal;color:#000;transform:scaleX(1.0257);transform-origin:left center;">+0 / -0 Added and removed Child Functions called from the selected Functions</div>
<div class="b" style="left:302px;top:927px;width:1412px;height:25px;background:#eeeeee;border:1px solid #7d90a5;border-bottom:none;"></div>
<div class="b" style="left:303px;top:928px;width:1410px;height:20px;background:#eeeeee;"></div>
<div class="b" style="left:303px;top:928px;width:1px;height:20px;background:#ffffff;"></div>
<div class="b" style="left:320px;top:928px;width:1px;height:21px;background:#7d90a5;"></div>
<div class="b" style="left:321px;top:928px;width:1px;height:20px;background:#ffffff;"></div>
<div class="b" style="left:432px;top:928px;width:1px;height:21px;background:#7d90a5;"></div>
<div class="t" style="left:343.13px;top:929.99px;font-size:13px;line-height:17px;font-family:'Liberation Sans',sans-serif;font-weight:normal;color:#000;">Similarity</div>
<div class="b" style="left:433px;top:928px;width:1px;height:20px;background:#ffffff;"></div>
<div class="b" style="left:544px;top:928px;width:1px;height:21px;background:#7d90a5;"></div>
<div class="t" style="left:449.10px;top:929.99px;font-size:13px;line-height:17px;font-family:'Liberation Sans',sans-serif;font-weight:normal;color:#000;">Confidence</div>
<div class="b" style="left:545px;top:928px;width:1px;height:20px;background:#ffffff;"></div>
<div class="b" style="left:664px;top:928px;width:1px;height:21px;background:#7d90a5;"></div>
<div class="t" style="left:574.15px;top:929.99px;font-size:13px;line-height:17px;font-family:'Liberation Sans',sans-serif;font-weight:normal;color:#000;">Address</div>
<div class="b" style="left:665px;top:928px;width:1px;height:20px;background:#ffffff;"></div>
<div class="b" style="left:915px;top:928px;width:1px;height:21px;background:#7d90a5;"></div>
<div class="t" style="left:749.46px;top:929.99px;font-size:13px;line-height:17px;font-family:'Liberation Sans',sans-serif;font-weight:normal;color:#000;">Primary Name</div>
<div class="b" style="left:916px;top:928px;width:1px;height:20px;background:#ffffff;"></div>
<div class="b" style="left:1002px;top:928px;width:1px;height:21px;background:#7d90a5;"></div>
<div class="t" style="left:937.41px;top:929.99px;font-size:13px;line-height:17px;font-family:'Liberation Sans',sans-serif;font-weight:normal;color:#000;">Type</div>
<div class="b" style="left:1003px;top:928px;width:1px;height:20px;background:#ffffff;"></div>
<div class="b" style="left:1121px;top:928px;width:1px;height:21px;background:#7d90a5;"></div>
<div class="t" style="left:1039.15px;top:929.99px;font-size:13px;line-height:17px;font-family:'Liberation Sans',sans-serif;font-weight:normal;color:#000;">Address</div>
<div class="b" style="left:1122px;top:928px;width:1px;height:20px;background:#ffffff;"></div>
<div class="b" style="left:1372px;top:928px;width:1px;height:21px;background:#7d90a5;"></div>
<div class="t" style="left:1197.77px;top:929.99px;font-size:13px;line-height:17px;font-family:'Liberation Sans',sans-serif;font-weight:normal;color:#000;">Secondary Name</div>
<div class="b" style="left:1373px;top:928px;width:1px;height:20px;background:#ffffff;"></div>
<div class="b" style="left:1459px;top:928px;width:1px;height:21px;background:#7d90a5;"></div>
<div class="t" style="left:1402.91px;top:929.99px;font-size:13px;line-height:17px;font-family:'Liberation Sans',sans-serif;font-weight:normal;color:#000;">Type</div>
<div class="b" style="left:1460px;top:928px;width:1px;height:20px;background:#ffffff;"></div>
<div class="b" style="left:1586px;top:928px;width:1px;height:21px;background:#7d90a5;"></div>
<div class="t" style="left:1487.15px;top:929.99px;font-size:13px;line-height:17px;font-family:'Liberation Sans',sans-serif;font-weight:normal;color:#000;">Basic Blocks</div>
<div class="b" style="left:1587px;top:928px;width:1px;height:20px;background:#ffffff;"></div>
<div class="b" style="left:1713px;top:928px;width:1px;height:21px;background:#7d90a5;"></div>
<div class="t" style="left:1631.85px;top:929.99px;font-size:13px;line-height:17px;font-family:'Liberation Sans',sans-serif;font-weight:normal;color:#000;">Jumps</div>
<div class="b" style="left:304px;top:948px;width:1409px;height:1px;background:#7d90a5;"></div>
<div class="b" style="left:304px;top:951px;width:1410px;height:1px;background:#7d90a5;"></div>
<svg style="left:400px;top:935px" width="8" height="8"><path d="M0.5,0.5 L7.5,0.5 L4,6.5 Z" fill="#ffffff" stroke="#a0a0a0"/></svg>
<svg style="left:520px;top:938px" width="4" height="3"><path d="M0,3 L2,0 L4,3 Z" fill="#c0c0c0"/></svg>
<svg style="left:626px;top:938px" width="4" height="3"><path d="M0,3 L2,0 L4,3 Z" fill="#c0c0c0"/></svg>
<svg style="left:971px;top:938px" width="4" height="3"><path d="M0,3 L2,0 L4,3 Z" fill="#c0c0c0"/></svg>
<div class="b" style="left:0px;top:0px;width:1723px;height:1px;background:#1b4470;"></div>
<div class="b" style="left:1px;top:59px;width:1px;height:902px;background:#868686;"></div>
<div class="b" style="left:0px;top:0px;width:1px;height:961px;background:#1b4470;"></div>
<div class="b" style="left:1720px;top:59px;width:1px;height:902px;background:#868686;"></div>
<div class="b" style="left:1721px;top:0px;width:1px;height:961px;background:#1b4470;"></div>
<div class="b" style="left:1722px;top:0px;width:1px;height:961px;background:#1a1a1a;"></div>
<div class="b" style="left:0px;top:958px;width:1723px;height:1px;background:#868686;"></div>
<div class="b" style="left:0px;top:959px;width:1723px;height:1px;background:#1b4470;"></div>
<div class="b" style="left:0px;top:960px;width:1723px;height:1px;background:#1a1a1a;"></div>
